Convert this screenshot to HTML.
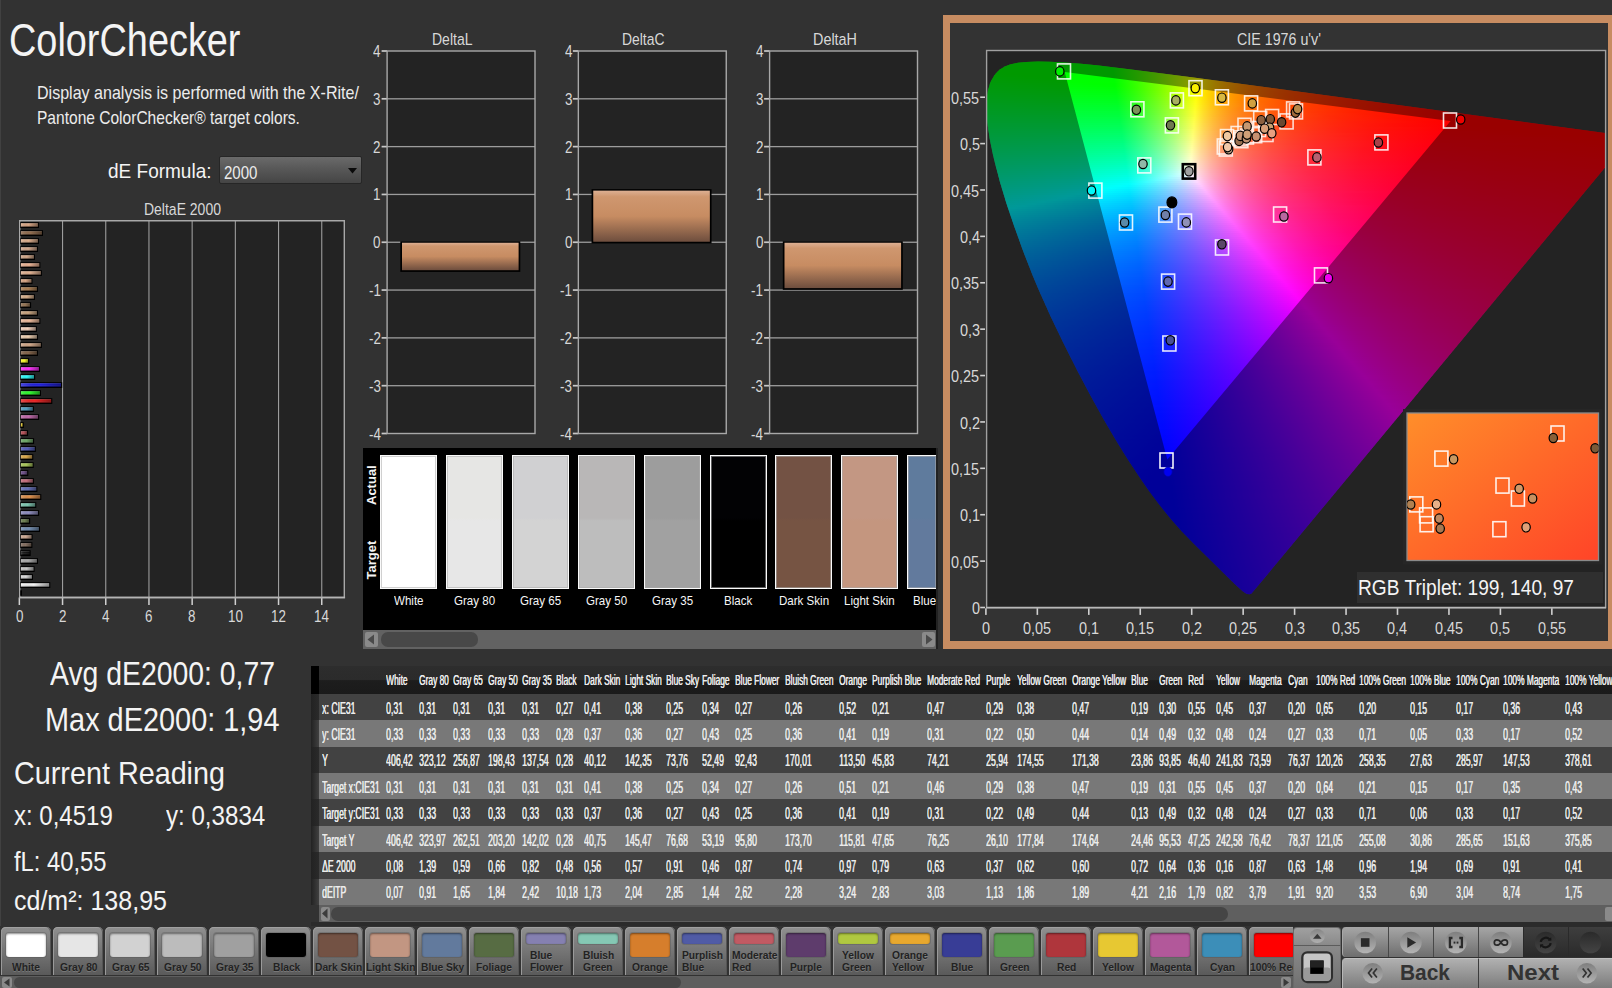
<!DOCTYPE html>
<html lang="en"><head><meta charset="utf-8"><title>ColorChecker</title><style>
html,body{margin:0;padding:0;background:#323232}
body{width:1612px;height:988px;position:relative;overflow:hidden;font-family:"Liberation Sans",sans-serif;color:#ececec}
.a{position:absolute;box-sizing:border-box}
.t{position:absolute;white-space:nowrap;transform-origin:0 0;line-height:1;display:block}
svg{position:absolute;overflow:visible}
.cie{position:absolute;overflow:hidden;background:#232323}
.cf{position:absolute;left:0;width:100%}
.cf i{display:block;height:2px}
.ov{left:0;top:0}
.tb{overflow:hidden}.c{text-shadow:.55px 0 0 currentColor}.tab{top:1.3px;width:50px;height:48px;border-radius:5px 5px 0 0;background:linear-gradient(#909090,#5a5a5a);box-shadow:inset 1px 0 0 #9a9a9a,inset -1px 0 0 #555,inset 0 1px 0 #a0a0a0}.chip{left:5px;top:5.5px;width:40px;border-radius:3px;box-shadow:inset 0 1px 2px rgba(0,0,0,.45),0 0 0 1px rgba(80,80,80,.35)}.tl{text-shadow:0 1px 0 rgba(255,255,255,.18)}</style></head><body>
<div class="a" style="left:0.00px;top:0.00px;width:1.00px;height:988.00px;background:#414141;"></div>
<span class="t" style="left:9.00px;top:18.00px;font-size:45.80px;transform:scaleX(0.8268);color:#f4f4f4;">ColorChecker</span>
<span class="t" style="left:37.00px;top:84.00px;font-size:18.60px;transform:scaleX(0.8629);">Display analysis is performed with the X-Rite/</span>
<span class="t" style="left:37.00px;top:109.00px;font-size:18.60px;transform:scaleX(0.8361);">Pantone ColorChecker® target colors.</span>
<span class="t" style="left:107.50px;top:160.00px;font-size:21.00px;transform:scaleX(0.9049);color:#f4f4f4;">dE Formula:</span>
<div class="a" style="left:218.50px;top:155.50px;width:143.80px;height:28.50px;background:linear-gradient(#6a6a6a,#585858 45%,#454545);border:1px solid #262626;border-radius:2px"></div>
<span class="t" style="left:224.00px;top:164.00px;font-size:18.10px;transform:scaleX(0.8320);">2000</span>
<svg style="left:348px;top:168px" width="10" height="6"><path d="M0 0H9L4.5 5.5Z" fill="#0a0a0a"/></svg>
<span class="t" style="left:144.00px;top:201.00px;font-size:17.20px;transform:scaleX(0.8134);color:#d8d8d8;">DeltaE 2000</span>
<div class="a" style="left:19.50px;top:220.50px;width:325.10px;height:377.00px;background:#232323;"></div>
<span class="t" style="left:15.57px;top:608.00px;font-size:17.40px;transform:scaleX(0.7700);color:#d8d8d8;">0</span>
<span class="t" style="left:58.77px;top:608.00px;font-size:17.40px;transform:scaleX(0.7700);color:#d8d8d8;">2</span>
<span class="t" style="left:101.97px;top:608.00px;font-size:17.40px;transform:scaleX(0.7700);color:#d8d8d8;">4</span>
<span class="t" style="left:145.17px;top:608.00px;font-size:17.40px;transform:scaleX(0.7700);color:#d8d8d8;">6</span>
<span class="t" style="left:188.37px;top:608.00px;font-size:17.40px;transform:scaleX(0.7700);color:#d8d8d8;">8</span>
<span class="t" style="left:227.85px;top:608.00px;font-size:17.40px;transform:scaleX(0.7700);color:#d8d8d8;">10</span>
<span class="t" style="left:271.05px;top:608.00px;font-size:17.40px;transform:scaleX(0.7700);color:#d8d8d8;">12</span>
<span class="t" style="left:314.25px;top:608.00px;font-size:17.40px;transform:scaleX(0.7700);color:#d8d8d8;">14</span>
<svg style="left:0;top:0" width="400" height="640"><defs><linearGradient id="bg" x1="0" y1="0" x2="0" y2="1"><stop offset="0" stop-color="#fff" stop-opacity=".28"/><stop offset=".45" stop-color="#fff" stop-opacity="0"/><stop offset="1" stop-color="#000" stop-opacity=".45"/></linearGradient><linearGradient id="bh" x1="0" y1="0" x2="1" y2="0"><stop offset="0" stop-color="#fff" stop-opacity=".18"/><stop offset=".45" stop-color="#000" stop-opacity="0"/><stop offset="1" stop-color="#000" stop-opacity=".42"/></linearGradient></defs><rect x="18.6" y="597.5" width="1.5" height="7.5" fill="#d0d0d0"/><rect x="62.0" y="220.5" width="1.1" height="377.0" fill="#9c9c9c"/><rect x="61.8" y="597.5" width="1.5" height="7.5" fill="#d0d0d0"/><rect x="105.2" y="220.5" width="1.1" height="377.0" fill="#9c9c9c"/><rect x="105.0" y="597.5" width="1.5" height="7.5" fill="#d0d0d0"/><rect x="148.4" y="220.5" width="1.1" height="377.0" fill="#9c9c9c"/><rect x="148.2" y="597.5" width="1.5" height="7.5" fill="#d0d0d0"/><rect x="191.6" y="220.5" width="1.1" height="377.0" fill="#9c9c9c"/><rect x="191.4" y="597.5" width="1.5" height="7.5" fill="#d0d0d0"/><rect x="234.8" y="220.5" width="1.1" height="377.0" fill="#9c9c9c"/><rect x="234.6" y="597.5" width="1.5" height="7.5" fill="#d0d0d0"/><rect x="278.0" y="220.5" width="1.1" height="377.0" fill="#9c9c9c"/><rect x="277.8" y="597.5" width="1.5" height="7.5" fill="#d0d0d0"/><rect x="321.2" y="220.5" width="1.1" height="377.0" fill="#9c9c9c"/><rect x="321.0" y="597.5" width="1.5" height="7.5" fill="#d0d0d0"/><path d="M19.7 597.5V220.8H344.3V597.5Z" fill="none" stroke="#a8a8a8" stroke-width="1.4"/><rect x="19.0" y="596.7" width="326.1" height="1.6" fill="#b4b4b4"/><rect x="20.3" y="222.2" width="18.7" height="5.800" fill="#000"/><rect x="20.9" y="223.2" width="16.9" height="3.5" fill="#d9a27e"/><rect x="20.9" y="223.2" width="16.9" height="3.5" fill="url(#bg)"/><rect x="20.9" y="223.2" width="16.9" height="3.5" fill="url(#bh)"/><rect x="20.3" y="230.2" width="22.7" height="5.800" fill="#000"/><rect x="20.9" y="231.2" width="20.9" height="3.5" fill="#8c6444"/><rect x="20.9" y="231.2" width="20.9" height="3.5" fill="url(#bg)"/><rect x="20.9" y="231.2" width="20.9" height="3.5" fill="url(#bh)"/><rect x="20.3" y="238.2" width="18.7" height="5.800" fill="#000"/><rect x="20.9" y="239.2" width="16.9" height="3.5" fill="#dcaa86"/><rect x="20.9" y="239.2" width="16.9" height="3.5" fill="url(#bg)"/><rect x="20.9" y="239.2" width="16.9" height="3.5" fill="url(#bh)"/><rect x="20.3" y="246.2" width="17.7" height="5.800" fill="#000"/><rect x="20.9" y="247.2" width="15.9" height="3.5" fill="#d2a486"/><rect x="20.9" y="247.2" width="15.9" height="3.5" fill="url(#bg)"/><rect x="20.9" y="247.2" width="15.9" height="3.5" fill="url(#bh)"/><rect x="20.3" y="254.2" width="14.7" height="5.800" fill="#000"/><rect x="20.9" y="255.2" width="12.9" height="3.5" fill="#d3a583"/><rect x="20.9" y="255.2" width="12.9" height="3.5" fill="url(#bg)"/><rect x="20.9" y="255.2" width="12.9" height="3.5" fill="url(#bh)"/><rect x="20.3" y="262.2" width="20.1" height="5.800" fill="#000"/><rect x="20.9" y="263.2" width="18.3" height="3.5" fill="#eeb08e"/><rect x="20.9" y="263.2" width="18.3" height="3.5" fill="url(#bg)"/><rect x="20.9" y="263.2" width="18.3" height="3.5" fill="url(#bh)"/><rect x="20.3" y="270.2" width="21.6" height="5.800" fill="#000"/><rect x="20.9" y="271.2" width="19.8" height="3.5" fill="#e2ae8c"/><rect x="20.9" y="271.2" width="19.8" height="3.5" fill="url(#bg)"/><rect x="20.9" y="271.2" width="19.8" height="3.5" fill="url(#bh)"/><rect x="20.3" y="278.2" width="12.2" height="5.800" fill="#000"/><rect x="20.9" y="279.2" width="10.4" height="3.5" fill="#d9a27e"/><rect x="20.9" y="279.2" width="10.4" height="3.5" fill="url(#bg)"/><rect x="20.9" y="279.2" width="10.4" height="3.5" fill="url(#bh)"/><rect x="20.3" y="286.2" width="17.7" height="5.800" fill="#000"/><rect x="20.9" y="287.2" width="15.9" height="3.5" fill="#a87848"/><rect x="20.9" y="287.2" width="15.9" height="3.5" fill="url(#bg)"/><rect x="20.9" y="287.2" width="15.9" height="3.5" fill="url(#bh)"/><rect x="20.3" y="294.2" width="14.7" height="5.800" fill="#000"/><rect x="20.9" y="295.2" width="12.9" height="3.5" fill="#d8ac84"/><rect x="20.9" y="295.2" width="12.9" height="3.5" fill="url(#bg)"/><rect x="20.9" y="295.2" width="12.9" height="3.5" fill="url(#bh)"/><rect x="20.3" y="302.2" width="10.8" height="5.800" fill="#000"/><rect x="20.9" y="303.2" width="9.0" height="3.5" fill="#94704c"/><rect x="20.9" y="303.2" width="9.0" height="3.5" fill="url(#bg)"/><rect x="20.9" y="303.2" width="9.0" height="3.5" fill="url(#bh)"/><rect x="20.3" y="310.2" width="17.7" height="5.800" fill="#000"/><rect x="20.9" y="311.2" width="15.9" height="3.5" fill="#caa27a"/><rect x="20.9" y="311.2" width="15.9" height="3.5" fill="url(#bg)"/><rect x="20.9" y="311.2" width="15.9" height="3.5" fill="url(#bh)"/><rect x="20.3" y="318.2" width="20.1" height="5.800" fill="#000"/><rect x="20.9" y="319.2" width="18.3" height="3.5" fill="#efb896"/><rect x="20.9" y="319.2" width="18.3" height="3.5" fill="url(#bg)"/><rect x="20.9" y="319.2" width="18.3" height="3.5" fill="url(#bh)"/><rect x="20.3" y="326.2" width="16.6" height="5.800" fill="#000"/><rect x="20.9" y="327.2" width="14.8" height="3.5" fill="#f6d0b8"/><rect x="20.9" y="327.2" width="14.8" height="3.5" fill="url(#bg)"/><rect x="20.9" y="327.2" width="14.8" height="3.5" fill="url(#bh)"/><rect x="20.3" y="334.2" width="17.7" height="5.800" fill="#000"/><rect x="20.9" y="335.2" width="15.9" height="3.5" fill="#f0ceac"/><rect x="20.9" y="335.2" width="15.9" height="3.5" fill="url(#bg)"/><rect x="20.9" y="335.2" width="15.9" height="3.5" fill="url(#bh)"/><rect x="20.3" y="342.2" width="21.6" height="5.800" fill="#000"/><rect x="20.9" y="343.2" width="19.8" height="3.5" fill="#d2a482"/><rect x="20.9" y="343.2" width="19.8" height="3.5" fill="url(#bg)"/><rect x="20.9" y="343.2" width="19.8" height="3.5" fill="url(#bh)"/><rect x="20.3" y="350.2" width="17.7" height="5.800" fill="#000"/><rect x="20.9" y="351.2" width="15.9" height="3.5" fill="#7e5c40"/><rect x="20.9" y="351.2" width="15.9" height="3.5" fill="url(#bg)"/><rect x="20.9" y="351.2" width="15.9" height="3.5" fill="url(#bh)"/><rect x="20.3" y="358.2" width="8.9" height="5.800" fill="#000"/><rect x="20.9" y="359.2" width="7.1" height="3.5" fill="#ffff20"/><rect x="20.9" y="359.2" width="7.1" height="3.5" fill="url(#bg)"/><rect x="20.9" y="359.2" width="7.1" height="3.5" fill="url(#bh)"/><rect x="20.3" y="366.2" width="19.7" height="5.800" fill="#000"/><rect x="20.9" y="367.2" width="17.9" height="3.5" fill="#ff20ff"/><rect x="20.9" y="367.2" width="17.9" height="3.5" fill="url(#bg)"/><rect x="20.9" y="367.2" width="17.9" height="3.5" fill="url(#bh)"/><rect x="20.3" y="374.2" width="14.9" height="5.800" fill="#000"/><rect x="20.9" y="375.2" width="13.1" height="3.5" fill="#20ffff"/><rect x="20.9" y="375.2" width="13.1" height="3.5" fill="url(#bg)"/><rect x="20.9" y="375.2" width="13.1" height="3.5" fill="url(#bh)"/><rect x="20.3" y="382.2" width="41.9" height="5.800" fill="#000"/><rect x="20.9" y="383.2" width="40.1" height="3.5" fill="#1414e0"/><rect x="20.9" y="383.2" width="40.1" height="3.5" fill="url(#bg)"/><rect x="20.9" y="383.2" width="40.1" height="3.5" fill="url(#bh)"/><rect x="20.3" y="390.2" width="20.7" height="5.800" fill="#000"/><rect x="20.9" y="391.2" width="18.9" height="3.5" fill="#20ff20"/><rect x="20.9" y="391.2" width="18.9" height="3.5" fill="url(#bg)"/><rect x="20.9" y="391.2" width="18.9" height="3.5" fill="url(#bh)"/><rect x="20.3" y="398.2" width="32.0" height="5.800" fill="#000"/><rect x="20.9" y="399.2" width="30.2" height="3.5" fill="#f01818"/><rect x="20.9" y="399.2" width="30.2" height="3.5" fill="url(#bg)"/><rect x="20.9" y="399.2" width="30.2" height="3.5" fill="url(#bh)"/><rect x="20.3" y="406.2" width="13.6" height="5.800" fill="#000"/><rect x="20.9" y="407.2" width="11.8" height="3.5" fill="#4a9ac0"/><rect x="20.9" y="407.2" width="11.8" height="3.5" fill="url(#bg)"/><rect x="20.9" y="407.2" width="11.8" height="3.5" fill="url(#bh)"/><rect x="20.3" y="414.2" width="18.8" height="5.800" fill="#000"/><rect x="20.9" y="415.2" width="17.0" height="3.5" fill="#c060a8"/><rect x="20.9" y="415.2" width="17.0" height="3.5" fill="url(#bg)"/><rect x="20.9" y="415.2" width="17.0" height="3.5" fill="url(#bh)"/><rect x="20.3" y="422.2" width="3.5" height="5.800" fill="#000"/><rect x="20.9" y="423.2" width="1.7" height="3.5" fill="#e8cc30"/><rect x="20.9" y="423.2" width="1.7" height="3.5" fill="url(#bg)"/><rect x="20.9" y="423.2" width="1.7" height="3.5" fill="url(#bh)"/><rect x="20.3" y="430.2" width="7.8" height="5.800" fill="#000"/><rect x="20.9" y="431.2" width="6.0" height="3.5" fill="#b84850"/><rect x="20.9" y="431.2" width="6.0" height="3.5" fill="url(#bg)"/><rect x="20.9" y="431.2" width="6.0" height="3.5" fill="url(#bh)"/><rect x="20.3" y="438.2" width="13.8" height="5.800" fill="#000"/><rect x="20.9" y="439.2" width="12.0" height="3.5" fill="#68a860"/><rect x="20.9" y="439.2" width="12.0" height="3.5" fill="url(#bg)"/><rect x="20.9" y="439.2" width="12.0" height="3.5" fill="url(#bh)"/><rect x="20.3" y="446.2" width="15.6" height="5.800" fill="#000"/><rect x="20.9" y="447.2" width="13.8" height="3.5" fill="#4a54b8"/><rect x="20.9" y="447.2" width="13.8" height="3.5" fill="url(#bg)"/><rect x="20.9" y="447.2" width="13.8" height="3.5" fill="url(#bh)"/><rect x="20.3" y="454.2" width="13.0" height="5.800" fill="#000"/><rect x="20.9" y="455.2" width="11.2" height="3.5" fill="#e0a840"/><rect x="20.9" y="455.2" width="11.2" height="3.5" fill="url(#bg)"/><rect x="20.9" y="455.2" width="11.2" height="3.5" fill="url(#bh)"/><rect x="20.3" y="462.2" width="13.4" height="5.800" fill="#000"/><rect x="20.9" y="463.2" width="11.6" height="3.5" fill="#a8c850"/><rect x="20.9" y="463.2" width="11.6" height="3.5" fill="url(#bg)"/><rect x="20.9" y="463.2" width="11.6" height="3.5" fill="url(#bh)"/><rect x="20.3" y="470.2" width="8.0" height="5.800" fill="#000"/><rect x="20.9" y="471.2" width="6.2" height="3.5" fill="#6a4888"/><rect x="20.9" y="471.2" width="6.2" height="3.5" fill="url(#bg)"/><rect x="20.9" y="471.2" width="6.2" height="3.5" fill="url(#bh)"/><rect x="20.3" y="478.2" width="13.6" height="5.800" fill="#000"/><rect x="20.9" y="479.2" width="11.8" height="3.5" fill="#c86878"/><rect x="20.9" y="479.2" width="11.8" height="3.5" fill="url(#bg)"/><rect x="20.9" y="479.2" width="11.8" height="3.5" fill="url(#bh)"/><rect x="20.3" y="486.2" width="17.1" height="5.800" fill="#000"/><rect x="20.9" y="487.2" width="15.3" height="3.5" fill="#5a68b8"/><rect x="20.9" y="487.2" width="15.3" height="3.5" fill="url(#bg)"/><rect x="20.9" y="487.2" width="15.3" height="3.5" fill="url(#bh)"/><rect x="20.3" y="494.2" width="21.0" height="5.800" fill="#000"/><rect x="20.9" y="495.2" width="19.2" height="3.5" fill="#e08a40"/><rect x="20.9" y="495.2" width="19.2" height="3.5" fill="url(#bg)"/><rect x="20.9" y="495.2" width="19.2" height="3.5" fill="url(#bh)"/><rect x="20.3" y="502.2" width="16.0" height="5.800" fill="#000"/><rect x="20.9" y="503.2" width="14.2" height="3.5" fill="#78c8b0"/><rect x="20.9" y="503.2" width="14.2" height="3.5" fill="url(#bg)"/><rect x="20.9" y="503.2" width="14.2" height="3.5" fill="url(#bh)"/><rect x="20.3" y="510.2" width="18.8" height="5.800" fill="#000"/><rect x="20.9" y="511.2" width="17.0" height="3.5" fill="#8a88c0"/><rect x="20.9" y="511.2" width="17.0" height="3.5" fill="url(#bg)"/><rect x="20.9" y="511.2" width="17.0" height="3.5" fill="url(#bh)"/><rect x="20.3" y="518.2" width="9.9" height="5.800" fill="#000"/><rect x="20.9" y="519.2" width="8.1" height="3.5" fill="#687c48"/><rect x="20.9" y="519.2" width="8.1" height="3.5" fill="url(#bg)"/><rect x="20.9" y="519.2" width="8.1" height="3.5" fill="url(#bh)"/><rect x="20.3" y="526.2" width="19.7" height="5.800" fill="#000"/><rect x="20.9" y="527.2" width="17.9" height="3.5" fill="#6a88b0"/><rect x="20.9" y="527.2" width="17.9" height="3.5" fill="url(#bg)"/><rect x="20.9" y="527.2" width="17.9" height="3.5" fill="url(#bh)"/><rect x="20.3" y="534.2" width="12.3" height="5.800" fill="#000"/><rect x="20.9" y="535.2" width="10.5" height="3.5" fill="#d0a890"/><rect x="20.9" y="535.2" width="10.5" height="3.5" fill="url(#bg)"/><rect x="20.9" y="535.2" width="10.5" height="3.5" fill="url(#bh)"/><rect x="20.3" y="542.2" width="12.1" height="5.800" fill="#000"/><rect x="20.9" y="543.2" width="10.3" height="3.5" fill="#806858"/><rect x="20.9" y="543.2" width="10.3" height="3.5" fill="url(#bg)"/><rect x="20.9" y="543.2" width="10.3" height="3.5" fill="url(#bh)"/><rect x="20.3" y="550.2" width="10.4" height="5.800" fill="#000"/><rect x="20.9" y="551.2" width="8.6" height="3.5" fill="#0c0c0c"/><rect x="20.9" y="551.2" width="8.6" height="3.5" fill="url(#bg)"/><rect x="20.9" y="551.2" width="8.6" height="3.5" fill="url(#bh)"/><rect x="20.3" y="558.2" width="17.7" height="5.800" fill="#000"/><rect x="20.9" y="559.2" width="15.9" height="3.5" fill="#a8a8a8"/><rect x="20.9" y="559.2" width="15.9" height="3.5" fill="url(#bg)"/><rect x="20.9" y="559.2" width="15.9" height="3.5" fill="url(#bh)"/><rect x="20.3" y="566.2" width="14.3" height="5.800" fill="#000"/><rect x="20.9" y="567.2" width="12.5" height="3.5" fill="#c4c4c4"/><rect x="20.9" y="567.2" width="12.5" height="3.5" fill="url(#bg)"/><rect x="20.9" y="567.2" width="12.5" height="3.5" fill="url(#bh)"/><rect x="20.3" y="574.2" width="12.7" height="5.800" fill="#000"/><rect x="20.9" y="575.2" width="10.9" height="3.5" fill="#dadada"/><rect x="20.9" y="575.2" width="10.9" height="3.5" fill="url(#bg)"/><rect x="20.9" y="575.2" width="10.9" height="3.5" fill="url(#bh)"/><rect x="20.3" y="582.2" width="30.0" height="5.800" fill="#000"/><rect x="20.9" y="583.2" width="28.2" height="3.5" fill="#f4f4f4"/><rect x="20.9" y="583.2" width="28.2" height="3.5" fill="url(#bg)"/><rect x="20.9" y="583.2" width="28.2" height="3.5" fill="url(#bh)"/><rect x="20.3" y="590.3" width="1.7" height="5.4" fill="#000"/></svg>
<span class="t" style="left:49.50px;top:658.00px;font-size:32.50px;transform:scaleX(0.8727);color:#f4f4f4;">Avg dE2000: 0,77</span>
<span class="t" style="left:44.50px;top:704.00px;font-size:32.50px;transform:scaleX(0.8890);color:#f4f4f4;">Max dE2000: 1,94</span>
<span class="t" style="left:14.20px;top:758.00px;font-size:31.50px;transform:scaleX(0.9129);color:#f4f4f4;">Current Reading</span>
<span class="t" style="left:14.20px;top:802.00px;font-size:27.60px;transform:scaleX(0.8696);color:#f4f4f4;">x: 0,4519</span>
<span class="t" style="left:166.25px;top:802.00px;font-size:27.60px;transform:scaleX(0.8740);color:#f4f4f4;">y: 0,3834</span>
<span class="t" style="left:14.20px;top:848.00px;font-size:27.60px;transform:scaleX(0.8611);color:#f4f4f4;">fL: 40,55</span>
<span class="t" style="left:14.20px;top:887.00px;font-size:27.60px;transform:scaleX(0.9066);color:#f4f4f4;">cd/m²: 138,95</span>
<span class="t" style="left:432.10px;top:31.00px;font-size:17.20px;transform:scaleX(0.8146);color:#d8d8d8;">DeltaL</span>
<span class="t" style="left:373.34px;top:43.00px;font-size:17.20px;transform:scaleX(0.7800);color:#d8d8d8;">4</span>
<span class="t" style="left:373.34px;top:91.00px;font-size:17.20px;transform:scaleX(0.7800);color:#d8d8d8;">3</span>
<span class="t" style="left:373.34px;top:139.00px;font-size:17.20px;transform:scaleX(0.7800);color:#d8d8d8;">2</span>
<span class="t" style="left:373.34px;top:186.00px;font-size:17.20px;transform:scaleX(0.7800);color:#d8d8d8;">1</span>
<span class="t" style="left:373.34px;top:234.00px;font-size:17.20px;transform:scaleX(0.7800);color:#d8d8d8;">0</span>
<span class="t" style="left:368.87px;top:282.00px;font-size:17.20px;transform:scaleX(0.7800);color:#d8d8d8;">-1</span>
<span class="t" style="left:368.87px;top:330.00px;font-size:17.20px;transform:scaleX(0.7800);color:#d8d8d8;">-2</span>
<span class="t" style="left:368.87px;top:378.00px;font-size:17.20px;transform:scaleX(0.7800);color:#d8d8d8;">-3</span>
<span class="t" style="left:368.87px;top:426.00px;font-size:17.20px;transform:scaleX(0.7800);color:#d8d8d8;">-4</span>
<span class="t" style="left:622.35px;top:31.00px;font-size:17.20px;transform:scaleX(0.8084);color:#d8d8d8;">DeltaC</span>
<span class="t" style="left:564.59px;top:43.00px;font-size:17.20px;transform:scaleX(0.7800);color:#d8d8d8;">4</span>
<span class="t" style="left:564.59px;top:91.00px;font-size:17.20px;transform:scaleX(0.7800);color:#d8d8d8;">3</span>
<span class="t" style="left:564.59px;top:139.00px;font-size:17.20px;transform:scaleX(0.7800);color:#d8d8d8;">2</span>
<span class="t" style="left:564.59px;top:186.00px;font-size:17.20px;transform:scaleX(0.7800);color:#d8d8d8;">1</span>
<span class="t" style="left:564.59px;top:234.00px;font-size:17.20px;transform:scaleX(0.7800);color:#d8d8d8;">0</span>
<span class="t" style="left:560.12px;top:282.00px;font-size:17.20px;transform:scaleX(0.7800);color:#d8d8d8;">-1</span>
<span class="t" style="left:560.12px;top:330.00px;font-size:17.20px;transform:scaleX(0.7800);color:#d8d8d8;">-2</span>
<span class="t" style="left:560.12px;top:378.00px;font-size:17.20px;transform:scaleX(0.7800);color:#d8d8d8;">-3</span>
<span class="t" style="left:560.12px;top:426.00px;font-size:17.20px;transform:scaleX(0.7800);color:#d8d8d8;">-4</span>
<span class="t" style="left:812.85px;top:31.00px;font-size:17.20px;transform:scaleX(0.8369);color:#d8d8d8;">DeltaH</span>
<span class="t" style="left:755.84px;top:43.00px;font-size:17.20px;transform:scaleX(0.7800);color:#d8d8d8;">4</span>
<span class="t" style="left:755.84px;top:91.00px;font-size:17.20px;transform:scaleX(0.7800);color:#d8d8d8;">3</span>
<span class="t" style="left:755.84px;top:139.00px;font-size:17.20px;transform:scaleX(0.7800);color:#d8d8d8;">2</span>
<span class="t" style="left:755.84px;top:186.00px;font-size:17.20px;transform:scaleX(0.7800);color:#d8d8d8;">1</span>
<span class="t" style="left:755.84px;top:234.00px;font-size:17.20px;transform:scaleX(0.7800);color:#d8d8d8;">0</span>
<span class="t" style="left:751.37px;top:282.00px;font-size:17.20px;transform:scaleX(0.7800);color:#d8d8d8;">-1</span>
<span class="t" style="left:751.37px;top:330.00px;font-size:17.20px;transform:scaleX(0.7800);color:#d8d8d8;">-2</span>
<span class="t" style="left:751.37px;top:378.00px;font-size:17.20px;transform:scaleX(0.7800);color:#d8d8d8;">-3</span>
<span class="t" style="left:751.37px;top:426.00px;font-size:17.20px;transform:scaleX(0.7800);color:#d8d8d8;">-4</span>
<svg style="left:0;top:0" width="940" height="440"><defs><linearGradient id="sk" x1="0" y1="0" x2="0" y2="1"><stop offset="0" stop-color="#ddb093"/><stop offset=".12" stop-color="#cf976f"/><stop offset=".5" stop-color="#c78c62"/><stop offset="1" stop-color="#6e4e3e"/></linearGradient></defs><rect x="387.10" y="51.00" width="147.90" height="382.50" fill="#232323"/><rect x="381.60" y="50.15" width="5.5" height="1.7" fill="#c8c8c8"/><rect x="387.10" y="98.16" width="147.90" height="1.3" fill="#9c9c9c"/><rect x="381.60" y="97.96" width="5.5" height="1.7" fill="#c8c8c8"/><rect x="387.10" y="145.97" width="147.90" height="1.3" fill="#9c9c9c"/><rect x="381.60" y="145.78" width="5.5" height="1.7" fill="#c8c8c8"/><rect x="387.10" y="193.79" width="147.90" height="1.3" fill="#9c9c9c"/><rect x="381.60" y="193.59" width="5.5" height="1.7" fill="#c8c8c8"/><rect x="387.10" y="241.60" width="147.90" height="1.3" fill="#9c9c9c"/><rect x="381.60" y="241.40" width="5.5" height="1.7" fill="#c8c8c8"/><rect x="387.10" y="289.41" width="147.90" height="1.3" fill="#9c9c9c"/><rect x="381.60" y="289.21" width="5.5" height="1.7" fill="#c8c8c8"/><rect x="387.10" y="337.23" width="147.90" height="1.3" fill="#9c9c9c"/><rect x="381.60" y="337.02" width="5.5" height="1.7" fill="#c8c8c8"/><rect x="387.10" y="385.04" width="147.90" height="1.3" fill="#9c9c9c"/><rect x="381.60" y="384.84" width="5.5" height="1.7" fill="#c8c8c8"/><rect x="381.60" y="432.65" width="5.5" height="1.7" fill="#c8c8c8"/><rect x="387.10" y="51.00" width="147.90" height="382.50" fill="none" stroke="#a8a8a8" stroke-width="1.4"/><rect x="400.30" y="241.25" width="120.00" height="30.65" fill="#000"/><rect x="402.00" y="242.75" width="116.60" height="27.45" fill="url(#sk)"/><rect x="578.35" y="51.00" width="147.90" height="382.50" fill="#232323"/><rect x="572.85" y="50.15" width="5.5" height="1.7" fill="#c8c8c8"/><rect x="578.35" y="98.16" width="147.90" height="1.3" fill="#9c9c9c"/><rect x="572.85" y="97.96" width="5.5" height="1.7" fill="#c8c8c8"/><rect x="578.35" y="145.97" width="147.90" height="1.3" fill="#9c9c9c"/><rect x="572.85" y="145.78" width="5.5" height="1.7" fill="#c8c8c8"/><rect x="578.35" y="193.79" width="147.90" height="1.3" fill="#9c9c9c"/><rect x="572.85" y="193.59" width="5.5" height="1.7" fill="#c8c8c8"/><rect x="578.35" y="241.60" width="147.90" height="1.3" fill="#9c9c9c"/><rect x="572.85" y="241.40" width="5.5" height="1.7" fill="#c8c8c8"/><rect x="578.35" y="289.41" width="147.90" height="1.3" fill="#9c9c9c"/><rect x="572.85" y="289.21" width="5.5" height="1.7" fill="#c8c8c8"/><rect x="578.35" y="337.23" width="147.90" height="1.3" fill="#9c9c9c"/><rect x="572.85" y="337.02" width="5.5" height="1.7" fill="#c8c8c8"/><rect x="578.35" y="385.04" width="147.90" height="1.3" fill="#9c9c9c"/><rect x="572.85" y="384.84" width="5.5" height="1.7" fill="#c8c8c8"/><rect x="572.85" y="432.65" width="5.5" height="1.7" fill="#c8c8c8"/><rect x="578.35" y="51.00" width="147.90" height="382.50" fill="none" stroke="#a8a8a8" stroke-width="1.4"/><rect x="591.55" y="189.13" width="120.00" height="54.32" fill="#000"/><rect x="593.25" y="190.63" width="116.60" height="51.12" fill="url(#sk)"/><rect x="769.60" y="51.00" width="147.90" height="382.50" fill="#232323"/><rect x="764.10" y="50.15" width="5.5" height="1.7" fill="#c8c8c8"/><rect x="769.60" y="98.16" width="147.90" height="1.3" fill="#9c9c9c"/><rect x="764.10" y="97.96" width="5.5" height="1.7" fill="#c8c8c8"/><rect x="769.60" y="145.97" width="147.90" height="1.3" fill="#9c9c9c"/><rect x="764.10" y="145.78" width="5.5" height="1.7" fill="#c8c8c8"/><rect x="769.60" y="193.79" width="147.90" height="1.3" fill="#9c9c9c"/><rect x="764.10" y="193.59" width="5.5" height="1.7" fill="#c8c8c8"/><rect x="769.60" y="241.60" width="147.90" height="1.3" fill="#9c9c9c"/><rect x="764.10" y="241.40" width="5.5" height="1.7" fill="#c8c8c8"/><rect x="769.60" y="289.41" width="147.90" height="1.3" fill="#9c9c9c"/><rect x="764.10" y="289.21" width="5.5" height="1.7" fill="#c8c8c8"/><rect x="769.60" y="337.23" width="147.90" height="1.3" fill="#9c9c9c"/><rect x="764.10" y="337.02" width="5.5" height="1.7" fill="#c8c8c8"/><rect x="769.60" y="385.04" width="147.90" height="1.3" fill="#9c9c9c"/><rect x="764.10" y="384.84" width="5.5" height="1.7" fill="#c8c8c8"/><rect x="764.10" y="432.65" width="5.5" height="1.7" fill="#c8c8c8"/><rect x="769.60" y="51.00" width="147.90" height="382.50" fill="none" stroke="#a8a8a8" stroke-width="1.4"/><rect x="782.80" y="241.25" width="120.00" height="48.58" fill="#000"/><rect x="784.50" y="242.75" width="116.60" height="45.38" fill="url(#sk)"/></svg>
<div class="a" style="left:363.00px;top:448.00px;width:574.50px;height:201.00px;background:#222;"></div>
<div class="a" style="left:363.00px;top:448.00px;width:573.00px;height:182.00px;background:#000;"></div>
<div class="a" style="left:380.00px;top:455.00px;width:57.00px;height:134.00px;background:linear-gradient(#ffffff 0,#ffffff 47%,#ffffff 49%,#ffffff 100%);border:1px solid #fafafa;box-shadow:inset 0 0 0 1px rgba(170,170,170,.55);"></div>
<span class="t" style="left:393.73px;top:594.00px;font-size:13.60px;transform:scaleX(0.8500);color:#f6f6f6;">White</span>
<div class="a" style="left:445.90px;top:455.00px;width:57.00px;height:134.00px;background:linear-gradient(#e6e6e4 0,#e6e6e4 47%,#e7e7e7 49%,#e7e7e7 100%);border:1px solid #fafafa;box-shadow:inset 0 0 0 1px rgba(170,170,170,.55);"></div>
<span class="t" style="left:453.84px;top:594.00px;font-size:13.60px;transform:scaleX(0.8500);color:#f6f6f6;">Gray 80</span>
<div class="a" style="left:511.80px;top:455.00px;width:57.00px;height:134.00px;background:linear-gradient(#d0d0d2 0,#d0d0d2 47%,#d3d3d3 49%,#d3d3d3 100%);border:1px solid #fafafa;box-shadow:inset 0 0 0 1px rgba(170,170,170,.55);"></div>
<span class="t" style="left:519.74px;top:594.00px;font-size:13.60px;transform:scaleX(0.8500);color:#f6f6f6;">Gray 65</span>
<div class="a" style="left:577.70px;top:455.00px;width:57.00px;height:134.00px;background:linear-gradient(#b9b7b7 0,#b9b7b7 47%,#bdbdbd 49%,#bdbdbd 100%);border:1px solid #fafafa;box-shadow:inset 0 0 0 1px rgba(170,170,170,.55);"></div>
<span class="t" style="left:585.64px;top:594.00px;font-size:13.60px;transform:scaleX(0.8500);color:#f6f6f6;">Gray 50</span>
<div class="a" style="left:643.60px;top:455.00px;width:57.00px;height:134.00px;background:linear-gradient(#9d9d9d 0,#9d9d9d 47%,#a1a1a1 49%,#a1a1a1 100%);border:1px solid #fafafa;box-shadow:inset 0 0 0 1px rgba(170,170,170,.55);"></div>
<span class="t" style="left:651.54px;top:594.00px;font-size:13.60px;transform:scaleX(0.8500);color:#f6f6f6;">Gray 35</span>
<div class="a" style="left:709.50px;top:455.00px;width:57.00px;height:134.00px;background:linear-gradient(#020204 0,#020204 47%,#000000 49%,#000000 100%);border:1px solid #fafafa;box-shadow:inset 0 0 0 1px rgba(170,170,170,.55);"></div>
<span class="t" style="left:723.87px;top:594.00px;font-size:13.60px;transform:scaleX(0.8500);color:#f6f6f6;">Black</span>
<div class="a" style="left:775.40px;top:455.00px;width:57.00px;height:134.00px;background:linear-gradient(#735244 0,#735244 47%,#765443 49%,#765443 100%);border:1px solid #fafafa;box-shadow:inset 0 0 0 1px rgba(170,170,170,.55);"></div>
<span class="t" style="left:778.85px;top:594.00px;font-size:13.60px;transform:scaleX(0.8500);color:#f6f6f6;">Dark Skin</span>
<div class="a" style="left:841.30px;top:455.00px;width:57.00px;height:134.00px;background:linear-gradient(#c39783 0,#c39783 47%,#c4967f 49%,#c4967f 100%);border:1px solid #fafafa;box-shadow:inset 0 0 0 1px rgba(170,170,170,.55);"></div>
<span class="t" style="left:844.42px;top:594.00px;font-size:13.60px;transform:scaleX(0.8500);color:#f6f6f6;">Light Skin</span>
<div class="a" style="left:907.20px;top:455.00px;width:28.80px;height:134.00px;background:linear-gradient(#5f7b9d 0,#5f7b9d 47%,#627a9d 49%,#627a9d 100%);border:1px solid #fafafa;box-shadow:inset 0 0 0 1px rgba(170,170,170,.55);border-right:none;"></div>
<div class="a" style="left:907.2px;top:590px;width:28.8px;height:24px;overflow:hidden">
<span class="t" style="left:5.69px;top:4.00px;font-size:13.60px;transform:scaleX(0.8500);color:#f6f6f6;">Blue Sky</span>
</div>
<span class="t" style="left:0.00px;top:-10.00px;font-size:12.50px;color:#f4f4f4;font-weight:700;transform-origin:0 0;transform:translate(366px,505px) rotate(-90deg) scaleX(1.04);left:0;top:0;">Actual</span>
<span class="t" style="left:0.00px;top:-10.00px;font-size:12.50px;color:#f4f4f4;font-weight:700;transform-origin:0 0;transform:translate(366px,579.5px) rotate(-90deg) scaleX(1.04);left:0;top:0;">Target</span>
<div class="a" style="left:363.00px;top:630.00px;width:573.00px;height:18.50px;background:#626262;"></div>
<div class="a" style="left:364.50px;top:632.00px;width:13.00px;height:15.00px;background:#8a8a8a;border-radius:2px"></div>
<div class="a" style="left:922.00px;top:632.00px;width:13.00px;height:15.00px;background:#8a8a8a;border-radius:2px"></div>
<div class="a" style="left:380.50px;top:632.00px;width:97.00px;height:15.00px;background:#484848;border-radius:7px"></div>
<svg style="left:366px;top:634px" width="10" height="11"><path d="M8 0.5V10.5L1.5 5.5Z" fill="#4a4a4a"/></svg>
<svg style="left:924px;top:634px" width="10" height="11"><path d="M2 0.5V10.5L8.5 5.5Z" fill="#4a4a4a"/></svg>
<div class="a" style="left:943.00px;top:15.30px;width:672.00px;height:633.40px;background:#333333;border:7px solid #c78c61;border-top-width:8px;border-bottom-width:8px"></div>
<span class="t" style="left:1237.00px;top:31.00px;font-size:17.20px;transform:scaleX(0.8298);color:#d8d8d8;">CIE 1976 u'v'</span>
<div class="cie" style="left:987px;top:51px;width:618px;height:556px">
<div class="cf" style="top:10px;clip-path:polygon(264.5px 532.6px,618.0px 106.6px,618.0px 72.0px,202.6px 16.0px,148.2px 8.9px,111.9px 4.5px,94.2px 2.7px,78.0px 1.4px,62.8px 0.7px,51.0px 0.6px,39.3px 1.0px,30.8px 1.8px,22.9px 3.5px,17.9px 5.5px,13.3px 8.3px,11.2px 10.0px,9.1px 12.2px,7.3px 14.5px,4.2px 19.7px,2.9px 22.8px,0.9px 29.8px,0.0px 35.5px,0.0px 58.0px,0.7px 64.2px,2.7px 77.7px,5.9px 93.2px,7.9px 101.8px,12.9px 120.7px,19.3px 141.9px,27.1px 165.0px,36.0px 189.8px,46.2px 215.8px,51.8px 229.1px,63.9px 256.0px,76.8px 282.8px,90.0px 308.9px,103.2px 334.0px,116.2px 357.5px,128.8px 379.0px,140.7px 398.3px,152.1px 415.6px,162.8px 430.9px,172.2px 443.6px,184.3px 458.5px,194.9px 470.5px,207.6px 483.6px,247.7px 522.9px,255.4px 529.9px,258.2px 532.1px,260.1px 533.1px,262.7px 533.3px)">
<i style="margin-left:28px;width:58px;background:linear-gradient(90deg,#0f0 0,#0f0 58px)"></i>
<i style="margin-left:20px;width:88px;background:linear-gradient(90deg,#0f0 0,#0f0 88px)"></i>
<i style="margin-left:16px;width:110px;background:linear-gradient(90deg,#0f0 0,#01ff00 110px)"></i>
<i style="margin-left:12px;width:130px;background:linear-gradient(90deg,#0f0 0,#0f0 113px,#27ff00 130px)"></i>
<i style="margin-left:10px;width:148px;background:linear-gradient(90deg,#0f0 0,#0f0 116px,#27ff00 132px,#51ff00 148px)"></i>
<i style="margin-left:8px;width:165px;background:linear-gradient(90deg,#0f0 0,#0f0 118px,#38ff00 141px,#7cff00 165px)"></i>
<i style="margin-left:6px;width:183px;background:linear-gradient(90deg,#00ff03 0,#0f0 21px,#0f0 120px,#21ff00 134px,#50ff00 152px,#7fff00 168px,#afff00 183px)"></i>
<i style="margin-left:5px;width:199px;background:linear-gradient(90deg,#00ff05 0,#0f0 40px,#0f0 122px,#35ff00 143px,#6dff00 163px,#a9ff00 182px,#e5ff00 199px)"></i>
<i style="margin-left:4px;width:215px;background:linear-gradient(90deg,#00ff08 0,#0f0 59px,#0f0 123px,#37ff00 145px,#76ff00 167px,#b7ff00 187px,#fcff00 206px,#fffe00 207px,#ffe100 215px)"></i>
<i style="margin-left:3px;width:231px;background:linear-gradient(90deg,#00ff0b 0,#00ff01 70px,#0f0 124px,#34ff00 145px,#76ff00 168px,#b7ff00 188px,#fdff00 207px,#fffd00 208px,#ffd400 220px,#ffb700 231px)"></i>
<i style="margin-left:2px;width:247px;background:linear-gradient(90deg,#00ff0e 0,#00ff01 89px,#01ff00 126px,#3cff00 149px,#79ff00 170px,#bf0 190px,#feff00 208px,#fd0 218px,#ffc500 226px,#ffad00 236px,#ff9600 247px)"></i>
<i style="margin-left:1px;width:262px;background:linear-gradient(90deg,#00ff12 0,#00ff01 108px,#0f0 127px,#3bff00 150px,#79ff00 171px,#bf0 191px,#feff00 209px,#ffd600 221px,#ffb500 233px,#ff9800 247px,#ff7f00 262px)"></i>
<i style="margin-left:0px;width:278px;background:linear-gradient(90deg,#00ff15 0,#00ff01 128px,#38ff00 150px,#75ff00 171px,#b7ff00 191px,#ff0 210px,#ffd200 223px,#ffa900 239px,#ff8700 257px,#ff6a00 278px)"></i>
<i style="margin-left:0px;width:293px;background:linear-gradient(90deg,#00ff17 0,#00ff05 128px,#35ff01 149px,#75ff00 171px,#b8ff00 191px,#fffe00 210px,#ffe100 218px,#ffc900 226px,#ffb100 235px,#ff9e00 244px,#ff8a00 255px,#ff7900 266px,#ff5900 293px)"></i>
<i style="margin-left:0px;width:308px;background:linear-gradient(90deg,#00ff1a 0,#01ff08 129px,#3aff04 151px,#75ff00 171px,#b8ff00 191px,#fcff00 209px,#fffe00 210px,#fd0 219px,#ffc000 229px,#ffa800 239px,#ff9200 250px,#ff7e00 262px,#ff6b00 276px,#ff4b00 308px)"></i>
<i style="margin-left:0px;width:323px;background:linear-gradient(90deg,#00ff1d 0,#00ff0c 129px,#3aff08 151px,#75ff04 171px,#b8ff00 191px,#fdff00 209px,#fffd00 210px,#ffd900 220px,#ffbc00 230px,#ffa300 241px,#ff8a00 254px,#ff7300 269px,#ff6000 285px,#ff4f00 303px,#ff3f00 323px)"></i>
<i style="margin-left:0px;width:338px;background:linear-gradient(90deg,#00ff20 0,#00ff10 129px,#36ff0c 150px,#75ff08 171px,#b8ff04 191px,#fdff00 209px,#ffd500 221px,#ffb700 232px,#ff9a00 245px,#ff8100 259px,#ff6b00 275px,#ff5600 294px,#f40 315px,#ff3500 338px)"></i>
<i style="margin-left:0px;width:352px;background:linear-gradient(90deg,#00ff23 0,#01ff14 130px,#3bff10 152px,#78ff0c 172px,#b8ff08 191px,#feff04 209px,#ffd501 221px,#ffb300 233px,#ff9500 247px,#ff7b00 263px,#ff6300 281px,#ff4e00 302px,#ff3c00 325px,#ff2c00 352px)"></i>
<i style="margin-left:0px;width:367px;background:linear-gradient(90deg,#00ff26 0,#00ff18 130px,#3bff15 152px,#78ff11 172px,#b9ff0d 191px,#ffff09 209px,#ffd405 221px,#ffb002 234px,#ff9100 249px,#ff7400 267px,#ff5c00 287px,#ff4700 310px,#ff3400 337px,#ff2400 367px)"></i>
<i style="margin-left:0px;width:382px;background:linear-gradient(90deg,#00ff29 0,#00ff1c 130px,#38ff19 151px,#77ff16 172px,#b9ff12 191px,#ffff0e 209px,#ffe70c 215px,#ffd009 222px,#ffab05 236px,#ff8b01 252px,#ff6e00 271px,#f50 293px,#ff4000 318px,#ff2d00 348px,#ff1d00 382px)"></i>
<i style="margin-left:0px;width:397px;background:linear-gradient(90deg,#00ff2c 0,#00ff20 130px,#34ff1e 150px,#74ff1b 171px,#b5ff17 190px,#fcff14 208px,#fffe13 209px,#ffe310 216px,#ffcc0d 223px,#ffa808 237px,#ff8504 255px,#ff6801 275px,#ff4f00 299px,#ff3900 327px,#ff2700 359px,#ff1700 397px)"></i>
<i style="margin-left:0px;width:412px;background:linear-gradient(90deg,#00ff30 0,#01ff24 131px,#3aff22 152px,#74ff1f 171px,#b2ff1c 189px,#fdff19 208px,#fffd19 209px,#ffe615 215px,#ffcf12 222px,#ffb80f 230px,#ffa50c 238px,#ff8107 257px,#ff6303 279px,#ff4900 305px,#ff3400 335px,#ff2100 370px,#f10 412px)"></i>
<i style="margin-left:0px;width:427px;background:linear-gradient(90deg,#0f3 0,#00ff29 131px,#39ff26 152px,#74ff24 171px,#afff22 188px,#fdff1e 208px,#fffd1e 209px,#ffe21a 216px,#ffcb16 223px,#ffb512 231px,#ffa00f 240px,#ff7c09 260px,#ff5e05 283px,#f40 311px,#ff2e00 343px,#ff1c00 382px,#ff0c00 427px)"></i>
<i style="margin-left:0px;width:442px;background:linear-gradient(90deg,#00ff36 0,#00ff2d 131px,#33ff2b 150px,#70ff29 170px,#abff27 187px,#feff24 208px,#fffc23 209px,#ffe11e 216px,#ffc71a 224px,#ffb216 232px,#ff9d12 241px,#ff8a0f 251px,#ff780c 262px,#ff5906 287px,#ff3f02 316px,#ff2a00 351px,#ff1700 393px,#ff0800 442px)"></i>
<i style="margin-left:0px;width:456px;background:linear-gradient(90deg,#00ff39 0,#00ff31 131px,#33ff30 150px,#73ff2e 171px,#b6ff2c 190px,#ffff29 208px,#ffe023 216px,#ffca1f 223px,#ffb11a 232px,#ff9c16 241px,#ff8912 251px,#ff760f 263px,#ff5609 289px,#ff3c04 320px,#ff2600 358px,#ff1300 403px,#ff0400 456px)"></i>
<i style="margin-left:0px;width:471px;background:linear-gradient(90deg,#00ff3c 0,#01ff36 132px,#3bff34 153px,#77ff32 172px,#b7ff31 190px,#ffff2f 208px,#ffe028 216px,#ffc623 224px,#ffae1e 233px,#ff9719 243px,#ff8315 254px,#ff7111 266px,#ff520a 293px,#ff3705 326px,#ff2100 366px,#ff0f00 414px,#f00 471px)"></i>
<i style="margin-left:0px;width:486px;background:linear-gradient(90deg,#00ff3f 0,#00ff3a 132px,#37ff39 152px,#76ff37 172px,#b7ff36 190px,#fffe34 208px,#ffdf2d 216px,#ffc527 224px,#ffab21 234px,#ff951c 244px,#ff8118 255px,#ff6d13 268px,#ff4d0c 297px,#ff3206 334px,#ff1b01 379px,#ff0600 445px,#f00 470px,#f00 486px)"></i>
<i style="margin-left:0px;width:501px;background:linear-gradient(90deg,#00ff43 0,#00ff3e 132px,#34ff3e 151px,#73ff3d 171px,#afff3c 188px,#fffd3a 208px,#ffde32 216px,#ffc12b 225px,#ffa725 235px,#ff9220 245px,#ff7d1a 257px,#ff6a16 270px,#ff5811 285px,#ff490e 301px,#ff2c07 342px,#ff1601 392px,#f00 468px,#f00 501px)"></i>
<i style="margin-left:0px;width:516px;background:linear-gradient(90deg,#00ff46 0,#01ff43 133px,#39ff42 153px,#76ff42 172px,#b0ff41 188px,#fdff40 207px,#fffd3f 208px,#ffdd37 216px,#ffc130 225px,#ffa729 235px,#ff8d22 247px,#ff791d 259px,#ff6618 273px,#ff5413 289px,#ff440f 306px,#ff350b 327px,#ff2707 351px,#ff1001 408px,#f00 467px,#f00 516px)"></i>
<i style="margin-left:0px;width:531px;background:linear-gradient(90deg,#00ff49 0,#00ff48 133px,#39ff47 153px,#72ff47 171px,#acff46 187px,#feff46 207px,#fffc45 208px,#ffd93b 217px,#ffbd33 226px,#ffa42c 236px,#ff8b25 248px,#ff751f 261px,#ff611a 276px,#ff5015 292px,#ff4011 310px,#ff310c 333px,#ff2308 359px,#ff0b02 422px,#f00 465px,#f00 531px)"></i>
<i style="margin-left:0px;width:546px;background:linear-gradient(90deg,#00ff4c 0,#00ff4c 133px,#35ff4c 152px,#72ff4c 171px,#b8ff4c 190px,#feff4c 207px,#fffb4b 208px,#ffd840 217px,#ffbc38 226px,#ffa130 237px,#ff8828 249px,#ff7222 263px,#ff5e1c 278px,#ff4d17 295px,#ff3d12 314px,#ff2d0d 339px,#ff1e09 368px,#ff0602 438px,#f00 464px,#f00 546px)"></i>
<i style="margin-left:0px;width:560px;background:linear-gradient(90deg,#00ff50 0,#00ff51 133px,#35ff51 152px,#76ff51 172px,#b8ff52 190px,#ffff52 207px,#ffdb47 216px,#ffbc3c 226px,#ffa034 237px,#ff882c 249px,#ff7125 263px,#ff5c1e 279px,#ff4b19 296px,#ff3b14 316px,#ff2a0e 343px,#ff1b0a 374px,#ff0e06 409px,#ff0302 450px,#ff0001 463px,#f00 560px)"></i>
<i style="margin-left:0px;width:575px;background:linear-gradient(90deg,#00ff53 0,#01ff55 134px,#3bff56 154px,#75ff57 172px,#b4ff57 189px,#fffe58 207px,#ffda4c 216px,#ffbb41 226px,#ff9d37 238px,#ff832e 251px,#ff6c27 266px,#ff5820 282px,#ff471a 300px,#ff3715 320px,#ff270f 348px,#ff180a 380px,#ff0b06 417px,#ff0003 459px,#f00 501px,#f00 575px)"></i>
<i style="margin-left:0px;width:590px;background:linear-gradient(90deg,#00ff56 0,#00ff5a 134px,#37ff5b 153px,#75ff5c 172px,#b4ff5d 189px,#fffd5e 207px,#ffda51 216px,#ffb745 227px,#ff9a3a 239px,#ff8131 252px,#ff6a29 267px,#ff5622 284px,#ff441c 303px,#ff3416 324px,#ff2411 351px,#ff170c 382px,#ff0004 458px,#f00 515px,#f00 590px)"></i>
<i style="margin-left:0px;width:605px;background:linear-gradient(90deg,#00ff5a 0,#00ff5f 134px,#33ff60 152px,#72ff61 171px,#adff63 187px,#fdff64 206px,#fffd63 207px,#ffd956 216px,#ffb649 227px,#ff993e 239px,#ff7e34 253px,#ff682c 268px,#ff5324 286px,#ff411d 306px,#ff3117 328px,#ff2212 354px,#ff150d 384px,#ff0005 456px,#f00 529px,#f00 605px)"></i>
<i style="margin-left:0px;width:618px;background:linear-gradient(90deg,#00ff5d 0,#00ff64 134px,#0aff64 138px,#30ff65 151px,#6eff67 170px,#a9ff68 186px,#d2ff69 196px,#fdff6b 206px,#fffc69 207px,#ffd55a 217px,#ffb34d 228px,#ff9642 240px,#ff7c37 254px,#ff652e 270px,#ff5026 288px,#ff3e1f 308px,#ff2f19 331px,#ff2013 357px,#ff140f 386px,#ff0007 455px,#f00 547px,#f00 618px)"></i>
<i style="margin-left:0px;width:618px;background:linear-gradient(90deg,#00ff61 0,#01ff69 135px,#39ff6b 154px,#71ff6d 171px,#b5ff6f 189px,#feff71 206px,#fffb6f 207px,#ffd45f 217px,#ffb251 228px,#ff9546 240px,#ff7b3b 254px,#ff6431 270px,#ff5029 288px,#ff3e22 308px,#ff2e1b 331px,#ff1410 385px,#ff0008 453px,#f00 564px,#f00 618px)"></i>
<i style="margin-left:1px;width:617px;background:linear-gradient(90deg,#00ff64 0,#00ff6e 134px,#38ff70 153px,#78ff72 172px,#b9ff75 189px,#ff7 205px,#ffda68 214px,#ffb758 225px,#ff994b 237px,#ff7e40 251px,#ff6635 267px,#ff512c 285px,#ff3f25 305px,#ff2f1e 328px,#ff2118 353px,#ff1412 382px,#ff000a 451px,#ff0002 553px,#f00 617px)"></i>
<i style="margin-left:1px;width:617px;background:linear-gradient(90deg,#00ff68 0,#00ff73 134px,#34ff75 152px,#74ff78 171px,#b5ff7b 188px,#fffe7e 205px,#ffd96d 214px,#ffb65d 225px,#ff9850 237px,#ff7d43 251px,#ff6539 267px,#ff502f 285px,#ff3e27 305px,#ff2e20 328px,#ff1414 381px,#ff000b 449px,#f00 617px)"></i>
<i style="margin-left:1px;width:617px;background:linear-gradient(90deg,#00ff6b 0,#01ff78 135px,#3aff7b 154px,#74ff7e 171px,#b2ff81 187px,#fffe84 205px,#ffd972 214px,#ffb562 225px,#ff9754 237px,#ff7c47 251px,#ff643c 267px,#ff5032 285px,#ff3e29 305px,#ff2d22 328px,#ff1416 380px,#ff000d 447px,#f00 617px)"></i>
<i style="margin-left:2px;width:616px;background:linear-gradient(90deg,#00ff6f 0,#00ff7d 134px,#3aff81 153px,#74ff84 170px,#b2ff87 186px,#fcff8b 203px,#fffd8a 204px,#ffd878 213px,#ffb467 224px,#ff9758 236px,#ff7c4b 250px,#ff643f 266px,#ff4f35 284px,#ff3d2c 304px,#ff2d24 327px,#ff1418 379px,#ff000e 445px,#ff0001 616px)"></i>
<i style="margin-left:2px;width:616px;background:linear-gradient(90deg,#00ff72 0,#00ff83 134px,#33ff86 151px,#70ff89 169px,#aaff8d 184px,#fdff92 203px,#fffc91 204px,#ffd77e 213px,#ffb46b 224px,#ff965c 236px,#ff7b4e 250px,#ff6342 266px,#ff4e38 284px,#ff3c2e 304px,#ff2c26 327px,#ff141a 378px,#ff0010 443px,#ff0002 616px)"></i>
<i style="margin-left:3px;width:615px;background:linear-gradient(90deg,#00ff76 0,#0f8 133px,#2fff8b 149px,#70ff8f 168px,#b6ff94 186px,#feff99 202px,#fffb97 203px,#ffd683 212px,#ffb370 223px,#ff9560 235px,#ff7a52 249px,#ff6245 265px,#ff4e3a 283px,#ff3c31 303px,#ff2c28 326px,#ff141b 376px,#f01 440px,#ff0009 518px,#ff0003 615px)"></i>
<i style="margin-left:3px;width:615px;background:linear-gradient(90deg,#00ff7a 0,#00ff83 73px,#01ff8d 134px,#3cff92 153px,#77ff96 170px,#bbff9b 187px,#ffffa0 202px,#ffd589 212px,#ffb577 222px,#ff9666 234px,#ff7b57 248px,#ff644a 263px,#ff4f3e 281px,#ff3d34 301px,#ff2c2b 324px,#ff131d 375px,#ff0013 439px,#ff000a 517px,#ff0004 615px)"></i>
<i style="margin-left:3px;width:615px;background:linear-gradient(90deg,#00ff7d 0,#00ff87 73px,#00ff93 134px,#38ff97 152px,#77ff9c 170px,#b7ffa1 186px,#ffffa7 202px,#ffd891 211px,#ffb47c 222px,#ff966a 234px,#ff7a5a 248px,#ff634d 263px,#ff4e41 281px,#ff3c37 301px,#ff2c2d 324px,#ff131f 374px,#ff0014 437px,#ff000b 516px,#ff0004 615px)"></i>
<i style="margin-left:4px;width:614px;background:linear-gradient(90deg,#00ff81 0,#00ff8c 73px,#00ff98 133px,#34ff9d 150px,#73ffa2 168px,#b3ffa8 184px,#fffead 201px,#ffd796 210px,#ffb381 221px,#ff956f 233px,#ff795e 247px,#ff6351 262px,#ff4d44 280px,#ff3b39 300px,#ff2b30 323px,#ff1321 372px,#ff0016 434px,#ff000d 513px,#ff0005 614px)"></i>
<i style="margin-left:4px;width:614px;background:linear-gradient(90deg,#00ff85 0,#00ff90 73px,#01ff9e 134px,#3affa3 152px,#77ffa9 169px,#b3ffae 184px,#fcffb5 200px,#fffdb4 201px,#ffd79c 210px,#ffb286 221px,#ff9473 233px,#ff7962 247px,#ff6254 262px,#ff4d47 280px,#ff3b3c 300px,#ff2b32 323px,#ff1323 372px,#ff0017 433px,#ff000e 513px,#ff0006 614px)"></i>
<i style="margin-left:5px;width:613px;background:linear-gradient(90deg,#00ff89 0,#00ff95 73px,#00ffa4 133px,#39ffa9 151px,#73ffaf 167px,#afffb5 182px,#fdffbc 199px,#fffcbb 200px,#ffd6a2 209px,#ffb18b 220px,#ff9377 232px,#ff7866 246px,#ff6157 261px,#ff4c4a 279px,#ff3a3e 299px,#ff2a34 322px,#ff1325 370px,#ff0019 430px,#ff000f 511px,#ff0007 613px)"></i>
<i style="margin-left:5px;width:613px;background:linear-gradient(90deg,#00ff8d 0,#00ff9a 73px,#00ffa9 133px,#36ffaf 150px,#72ffb5 167px,#b8ffbd 184px,#feffc4 199px,#fffbc2 200px,#ffd5a8 209px,#ffb190 220px,#ff927c 232px,#ff776a 246px,#ff605b 261px,#ff4b4d 279px,#ff3941 299px,#ff2936 322px,#ff1327 369px,#ff001b 428px,#ff0010 509px,#ff0008 613px)"></i>
<i style="margin-left:6px;width:612px;background:linear-gradient(90deg,#00ff91 0,#00ff9e 72px,#00ffaf 132px,#2effb4 147px,#6effbc 165px,#b4ffc3 182px,#feffcc 198px,#fffbc9 199px,#ffd4ae 208px,#ffb095 219px,#ff9180 231px,#ff786f 244px,#ff615f 259px,#ff4c50 277px,#ff3943 298px,#ff2938 321px,#ff1229 368px,#ff001c 426px,#f01 508px,#ff0009 612px)"></i>
<i style="margin-left:6px;width:612px;background:linear-gradient(90deg,#00ff95 0,#00ffa3 73px,#01ffb5 133px,#3bffbc 151px,#76ffc3 167px,#b8ffcb 183px,#ffffd3 198px,#ffd7b7 207px,#ffb29c 218px,#ff9386 230px,#ff7974 243px,#ff6263 258px,#ff4c54 276px,#ff3a47 296px,#ff2a3c 319px,#ff122b 366px,#ff001e 424px,#ff0013 506px,#ff000a 612px)"></i>
<i style="margin-left:6px;width:612px;background:linear-gradient(90deg,#00ff98 0,#00ffa8 73px,#0fb 133px,#37ffc2 150px,#76ffca 167px,#b4ffd2 182px,#fffeda 198px,#ffd6bd 207px,#ffb1a2 218px,#ff928b 230px,#ff7878 243px,#ff6167 258px,#ff4b57 276px,#ff394a 296px,#ff293e 319px,#ff122d 365px,#ff0020 422px,#ff0014 505px,#ff000a 612px)"></i>
<i style="margin-left:7px;width:611px;background:linear-gradient(90deg,#00ff9d 0,#00ffad 72px,#00ffc1 132px,#33ffc8 148px,#72ffd0 165px,#b0ffd8 180px,#fcffe2 196px,#fffde1 197px,#ffd5c3 206px,#ffb0a7 217px,#ff918f 229px,#ff777c 242px,#ff606a 257px,#ff4b5a 275px,#ff384c 295px,#ff2840 318px,#ff122f 364px,#f02 420px,#ff0015 503px,#ff000b 611px)"></i>
<i style="margin-left:8px;width:610px;background:linear-gradient(90deg,#00ffa1 0,#00ffb2 72px,#00ffc7 131px,#08ffc8 134px,#2fffce 146px,#6effd7 163px,#acffdf 178px,#fdffea 195px,#fffce9 196px,#ffd4c9 205px,#ffafac 216px,#ff9094 228px,#ff7680 241px,#ff5f6e 256px,#ff4a5d 274px,#ff384f 294px,#ff2842 317px,#ff1231 362px,#ff0023 417px,#ff0016 501px,#ff000c 610px)"></i>
<i style="margin-left:8px;width:610px;background:linear-gradient(90deg,#00ffa5 0,#00ffb7 72px,#01ffce 132px,#36ffd5 148px,#71ffde 164px,#b5ffe8 180px,#fdfff3 195px,#fffbf0 196px,#ffd3d0 205px,#ffaeb2 216px,#ff8f99 228px,#ff7684 241px,#ff5e71 256px,#ff4960 274px,#ff3752 294px,#ff2745 317px,#f13 361px,#ff0025 415px,#ff0017 500px,#ff000d 610px)"></i>
<i style="margin-left:9px;width:608px;background:linear-gradient(90deg,#00ffa9 0,#00ffbd 72px,#00ffd4 131px,#35ffdc 147px,#71ffe5 163px,#b5fff0 179px,#fefffb 194px,#fffbf7 195px,#ffd3d6 204px,#ffadb7 215px,#ff8e9d 227px,#ff7588 240px,#ff5e75 255px,#ff4863 273px,#ff3654 293px,#ff2647 316px,#ff1135 360px,#ff0027 413px,#ff0019 498px,#ff000e 608px)"></i>
<i style="margin-left:9px;width:606px;background:linear-gradient(90deg,#00ffad 0,#00ffc2 72px,#00ffda 131px,#2affe1 144px,#65ffeb 160px,#9ffff4 174px,#dbfffd 187px,#fbfbff 194px,#fff5fa 196px,#ffced9 205px,#ffaaba 216px,#ff8ba0 228px,#ff728b 241px,#ff5c77 256px,#ff4765 274px,#ff3556 294px,#ff2549 317px,#ff1137 359px,#ff0029 411px,#ff001a 496px,#ff000f 606px)"></i>
<i style="margin-left:10px;width:603px;background:linear-gradient(90deg,#00ffb2 0,#00ffc7 72px,#01ffe1 131px,#29ffe8 143px,#51ffee 154px,#7dfff6 165px,#a8fffd 175px,#c2fcff 181px,#ffeffd 196px,#ffc9dc 205px,#ffa6bd 216px,#ff88a3 228px,#ff708d 241px,#ff597a 256px,#ff4568 274px,#ff3458 294px,#ff244b 317px,#ff1039 358px,#ff002b 408px,#ff001c 493px,#ff0010 603px)"></i>
<i style="margin-left:10px;width:602px;background:linear-gradient(90deg,#00ffb6 0,#0fc 72px,#00ffe8 131px,#42fff3 150px,#8dfdff 169px,#f9e9ff 196px,#ffe5fc 198px,#ffc1dc 207px,#ff9fbd 218px,#ff83a4 230px,#ff6a8d 244px,#ff557a 259px,#ff4168 277px,#ff3159 297px,#ff224b 320px,#ff0f3a 360px,#ff002d 407px,#ff001d 492px,#f01 602px)"></i>
<i style="margin-left:11px;width:599px;background:linear-gradient(90deg,#00ffba 0,#00ffd2 71px,#0fe 130px,#2bfff6 143px,#67fdff 159px,#afefff 178px,#fbe0ff 197px,#ffdbfb 199px,#ffb9dc 208px,#ff99be 219px,#ff7ea4 231px,#ff668e 245px,#ff507a 261px,#ff3e68 279px,#ff2e59 299px,#ff1f4c 322px,#ff0e3c 360px,#ff002f 404px,#ff001e 488px,#ff0012 599px)"></i>
<i style="margin-left:11px;width:597px;background:linear-gradient(90deg,#00ffbf 0,#00ffd7 71px,#00fff5 130px,#12fff8 136px,#40fdff 149px,#9bebff 174px,#fcd8ff 199px,#ffd2fa 201px,#ffafd8 211px,#ff91bc 222px,#ff78a3 234px,#ff618d 248px,#ff4c7a 264px,#ff3a69 282px,#ff2b5a 302px,#ff1d4d 325px,#ff0d3d 361px,#ff0030 403px,#ff0020 487px,#ff0013 597px)"></i>
<i style="margin-left:12px;width:595px;background:linear-gradient(90deg,#00ffc3 0,#0fd 71px,#01fffc 130px,#18fdff 137px,#73ebff 163px,#fdcfff 200px,#ffcdfd 201px,#ffabdb 211px,#ff8ebe 222px,#ff75a6 234px,#ff5e90 248px,#ff4a7c 264px,#ff396b 282px,#ff2a5c 302px,#ff1c4e 325px,#ff0d3f 360px,#ff0032 400px,#ff0021 484px,#ff0014 595px)"></i>
<i style="margin-left:12px;width:593px;background:linear-gradient(90deg,#00ffc7 0,#0fd 60px,#00fffd 121px,#00fbff 130px,#6ce5ff 162px,#b3d7ff 182px,#fac8ff 201px,#ffc5fc 203px,#ffa4db 213px,#ff88bf 224px,#ff70a7 236px,#ff5b91 250px,#ff477d 266px,#ff366c 284px,#ff275c 305px,#ff1a4f 328px,#ff0c41 360px,#ff0034 398px,#ff0023 482px,#ff0015 593px)"></i>
<i style="margin-left:13px;width:590px;background:linear-gradient(90deg,#0fc 0,#00ffe2 59px,#00fffd 110px,#00f5ff 129px,#62e0ff 159px,#afd1ff 181px,#fbc1ff 202px,#ffbcfb 204px,#ff9edb 214px,#ff83bf 225px,#ff6ba6 238px,#ff5690 252px,#ff447d 268px,#ff336c 286px,#ff255d 307px,#ff1850 330px,#ff0b42 361px,#ff0036 396px,#ff0024 480px,#ff0016 590px)"></i>
<i style="margin-left:14px;width:588px;background:linear-gradient(90deg,#00ffd1 0,#00ffe6 53px,#00fffd 99px,#0ef 128px,#1be9ff 137px,#69d8ff 161px,#ffb8fe 204px,#ff9add 214px,#ff80c2 225px,#ff68a8 238px,#ff5492 252px,#ff427f 268px,#ff326e 286px,#ff235e 307px,#ff1751 330px,#ff0b44 359px,#ff0039 393px,#ff0026 477px,#ff0017 588px)"></i>
<i style="margin-left:14px;width:586px;background:linear-gradient(90deg,#00ffd5 0,#00ffe8 47px,#00fffe 89px,#01e8ff 129px,#70d0ff 164px,#fab4ff 204px,#ffb0fd 206px,#ff94dd 216px,#ff7bc2 227px,#ff64a9 240px,#ff5193 254px,#ff3f80 270px,#ff2f6e 289px,#ff215f 310px,#ff1552 333px,#ff003b 391px,#ff0027 475px,#ff0018 586px)"></i>
<i style="margin-left:15px;width:583px;background:linear-gradient(90deg,#00ffda 0,#00ffeb 41px,#00fffe 78px,#00e2ff 128px,#6accff 162px,#b2bcff 184px,#fbadff 205px,#ffa9fc 207px,#ff90e0 216px,#ff78c4 227px,#ff65ae 238px,#ff529a 251px,#ff4288 265px,#ff3477 281px,#ff1b5c 318px,#ff0c4b 351px,#ff003d 389px,#ff0028 473px,#ff0019 583px)"></i>
<i style="margin-left:15px;width:582px;background:linear-gradient(90deg,#00ffdf 0,#00fffe 68px,#00dcff 128px,#29d3ff 142px,#70c4ff 165px,#ffa5fe 208px,#ff8adf 218px,#ff75c7 228px,#ff62b1 239px,#ff509c 252px,#ff418a 266px,#ff3279 282px,#ff1a5d 319px,#ff0c4d 350px,#ff003f 387px,#ff002a 471px,#ff001a 582px)"></i>
<i style="margin-left:16px;width:579px;background:linear-gradient(90deg,#00ffe4 0,#00feff 61px,#01d6ff 128px,#74beff 166px,#fda0ff 208px,#ff9efd 209px,#ff87e2 218px,#ff72c9 228px,#ff60b3 239px,#ff4e9e 252px,#ff3f8c 266px,#ff317b 282px,#ff195f 319px,#ff0c4f 349px,#ff0041 384px,#ff002c 468px,#ff001b 579px)"></i>
<i style="margin-left:17px;width:576px;background:linear-gradient(90deg,#00ffe9 0,#00feff 50px,#00d1ff 127px,#6eb9ff 164px,#b3aaff 186px,#fb9bff 208px,#ff98fc 210px,#ff82e2 219px,#ff6cc7 230px,#ff5bb2 241px,#ff4a9d 254px,#ff3b8c 268px,#ff2e7b 284px,#ff1760 320px,#ff0b51 349px,#ff0043 382px,#ff002d 465px,#ff001d 576px)"></i>
<i style="margin-left:17px;width:575px;background:linear-gradient(90deg,#0fe 0,#00fdff 40px,#0cf 127px,#65b6ff 162px,#afa6ff 186px,#fc95ff 210px,#ff92fc 212px,#ff7ce1 221px,#ff68c7 232px,#ff57b2 243px,#ff479e 256px,#ff398c 270px,#ff2b7c 286px,#ff1661 322px,#ff0a52 349px,#ff0046 380px,#ff0039 419px,#ff002f 464px,#ff001e 575px)"></i>
<i style="margin-left:18px;width:572px;background:linear-gradient(90deg,#00fff3 0,#00fdff 29px,#00c7ff 126px,#23bfff 139px,#6eafff 165px,#ff8efe 212px,#ff77e1 222px,#ff65ca 232px,#ff55b4 243px,#ff45a0 256px,#ff378e 270px,#ff2a7e 286px,#ff1563 322px,#ff0a54 348px,#ff0048 377px,#ff003b 416px,#ff0030 461px,#ff001f 572px)"></i>
<i style="margin-left:19px;width:569px;background:linear-gradient(90deg,#00fff8 0,#00feff 17px,#01c2ff 126px,#71a9ff 166px,#fb8bff 211px,#ff88fd 213px,#ff74e3 222px,#ff61ca 233px,#ff51b5 244px,#ff42a1 257px,#ff348f 271px,#ff2980 286px,#ff1464 322px,#ff004a 375px,#ff003d 414px,#ff0032 458px,#ff0020 569px)"></i>
<i style="margin-left:19px;width:568px;background:linear-gradient(90deg,#00fffd 0,#00feff 7px,#00eaff 47px,#00beff 126px,#6ca5ff 165px,#b296ff 189px,#fc85ff 213px,#ff82fc 215px,#ff70e3 224px,#ff5dca 235px,#ff4eb5 246px,#ff3fa1 259px,#ff3290 273px,#ff2680 288px,#ff1265 324px,#ff004d 373px,#ff003f 411px,#ff0034 456px,#ff0021 568px)"></i>
<i style="margin-left:20px;width:565px;background:linear-gradient(90deg,#00fcff 0,#00dbff 64px,#00b9ff 125px,#719fff 167px,#ff7ffe 215px,#ff6be3 225px,#ff5bcc 235px,#ff4cb7 246px,#ff3da3 259px,#ff3092 273px,#ff2582 288px,#ff1167 324px,#ff004f 370px,#ff0042 408px,#ff0035 453px,#f02 565px)"></i>
<i style="margin-left:21px;width:562px;background:linear-gradient(90deg,#00f6ff 0,#00d6ff 64px,#01b4ff 125px,#749aff 168px,#ff7afe 216px,#ff67e2 226px,#ff57cc 236px,#ff48b8 247px,#ff3aa4 260px,#ff2383 289px,#ff1068 325px,#ff0052 367px,#ff003f 421px,#ff0030 485px,#ff0023 562px)"></i>
<i style="margin-left:21px;width:561px;background:linear-gradient(90deg,#00f2ff 0,#00d2ff 64px,#00b0ff 125px,#7296ff 168px,#fb77ff 216px,#ff75fd 218px,#ff62e2 228px,#ff53cc 238px,#ff45b8 249px,#ff38a5 262px,#ff2184 291px,#ff0e69 326px,#ff0054 366px,#ff0040 421px,#ff0031 484px,#ff0025 561px)"></i>
<i style="margin-left:22px;width:558px;background:linear-gradient(90deg,#00edff 0,#00cdff 64px,#00acff 124px,#6a94ff 165px,#b184ff 191px,#fc72ff 217px,#ff70fc 219px,#ff5ee2 229px,#ff4fcc 239px,#ff42b8 250px,#ff35a5 263px,#ff1f85 292px,#ff0d6a 327px,#ff0057 363px,#ff0041 421px,#ff0032 483px,#ff0026 558px)"></i>
<i style="margin-left:23px;width:555px;background:linear-gradient(90deg,#00e8ff 0,#00a9ff 123px,#299fff 140px,#6f8fff 167px,#ff6dfe 219px,#ff5be4 229px,#ff4dce 239px,#ff40ba 250px,#ff33a7 263px,#ff1e86 292px,#ff0c6b 327px,#ff0059 360px,#ff0043 420px,#ff0034 481px,#ff0027 555px)"></i>
<i style="margin-left:23px;width:554px;background:linear-gradient(90deg,#00e4ff 0,#01a4ff 124px,#728aff 169px,#fb6aff 219px,#ff68fd 221px,#ff58e4 231px,#ff4ace 241px,#ff3dbb 252px,#ff31a7 265px,#ff1c87 294px,#ff0b6d 328px,#ff005c 359px,#f04 420px,#ff0035 481px,#ff0028 554px)"></i>
<i style="margin-left:24px;width:551px;background:linear-gradient(90deg,#00dfff 0,#00a1ff 123px,#7087ff 168px,#fc66ff 220px,#ff64fc 222px,#ff54e3 232px,#ff46ce 242px,#ff3abb 253px,#ff2ea8 266px,#ff1a88 295px,#ff0a6e 329px,#ff005f 356px,#ff0045 420px,#ff0036 480px,#ff0029 551px)"></i>
<i style="margin-left:25px;width:549px;background:linear-gradient(90deg,#00dbff 0,#009dff 122px,#7582ff 170px,#ff61fe 222px,#ff51e5 232px,#ff44d0 242px,#ff38bd 253px,#ff2daa 266px,#ff198a 295px,#ff096f 329px,#ff0061 354px,#ff0053 384px,#ff0047 419px,#ff0037 478px,#ff002a 549px)"></i>
<i style="margin-left:25px;width:547px;background:linear-gradient(90deg,#00d7ff 0,#0199ff 123px,#757eff 171px,#ff5dfe 224px,#ff4ee5 234px,#ff41d0 244px,#ff36bd 255px,#ff2aaa 268px,#ff188b 296px,#ff0871 330px,#ff0064 352px,#f05 383px,#ff0048 419px,#ff0039 477px,#ff002c 547px)"></i>
<i style="margin-left:26px;width:544px;background:linear-gradient(90deg,#00d3ff 0,#0096ff 122px,#737bff 170px,#fc5aff 223px,#ff58fd 225px,#ff4ae5 235px,#ff3ed0 245px,#ff33bd 256px,#ff28ab 269px,#ff168c 297px,#ff0672 331px,#ff0067 349px,#ff0057 382px,#ff0049 419px,#ff003a 476px,#ff002d 544px)"></i>
<i style="margin-left:27px;width:542px;background:linear-gradient(90deg,#00ceff 0,#0093ff 121px,#6b79ff 167px,#b468ff 196px,#fc57ff 224px,#ff54fc 226px,#ff47e4 236px,#ff3bd0 246px,#ff26ac 269px,#ff158d 297px,#ff0573 331px,#ff0069 347px,#ff0059 380px,#ff004b 418px,#ff003b 475px,#ff002e 542px)"></i>
<i style="margin-left:27px;width:540px;background:linear-gradient(90deg,#00cbff 0,#0090ff 121px,#7374ff 171px,#ff52fe 227px,#ff44e6 237px,#ff39d2 247px,#ff2fbf 258px,#ff24ad 271px,#ff138e 299px,#ff0474 332px,#ff006c 345px,#ff005b 379px,#ff004c 418px,#ff003d 474px,#ff0030 540px)"></i>
<i style="margin-left:28px;width:537px;background:linear-gradient(90deg,#00c7ff 0,#018cff 121px,#7570ff 172px,#ff4efd 228px,#ff41e6 238px,#ff36d2 248px,#ff23af 271px,#ff1290 299px,#ff0376 332px,#ff006f 342px,#ff0060 371px,#ff004e 417px,#ff003e 472px,#ff0031 537px)"></i>
<i style="margin-left:29px;width:535px;background:linear-gradient(90deg,#00c3ff 0,#0089ff 120px,#716eff 170px,#fc4cff 227px,#ff4afd 229px,#ff3ee6 239px,#ff33d2 249px,#ff21af 272px,#ff1090 300px,#ff0277 333px,#ff0072 340px,#ff0061 372px,#ff004f 417px,#ff003f 471px,#ff0032 535px)"></i>
<i style="margin-left:29px;width:533px;background:linear-gradient(90deg,#00c0ff 0,#0086ff 120px,#766aff 173px,#ff48fe 230px,#ff3ce7 240px,#ff32d4 250px,#ff1fb1 273px,#ff0f92 301px,#ff0279 333px,#ff0062 372px,#ff0050 417px,#ff0041 470px,#f03 533px)"></i>
<i style="margin-left:30px;width:530px;background:linear-gradient(90deg,#00bcff 0,#0084ff 119px,#2a79ff 139px,#7168ff 171px,#ff45fe 231px,#ff39e7 241px,#ff2fd4 251px,#ff1db1 274px,#ff0e93 301px,#ff017a 333px,#ff0064 371px,#ff0052 416px,#ff0042 468px,#ff0035 530px)"></i>
<i style="margin-left:31px;width:528px;background:linear-gradient(90deg,#00b8ff 0,#0180ff 119px,#7364ff 172px,#fc43ff 230px,#ff41fd 232px,#ff36e7 242px,#ff2cd4 252px,#ff1bb1 275px,#ff0c94 302px,#ff007b 334px,#ff0065 372px,#ff0053 416px,#ff0043 468px,#ff0036 528px)"></i>
<i style="margin-left:32px;width:525px;background:linear-gradient(90deg,#00b5ff 0,#007eff 118px,#7860ff 174px,#ff3ffe 232px,#ff2bd6 252px,#ff1ab3 275px,#ff0b95 302px,#ff007c 334px,#ff0067 371px,#f05 414px,#ff0045 465px,#ff0037 525px)"></i>
<i style="margin-left:32px;width:523px;background:linear-gradient(90deg,#00b2ff 0,#007bff 118px,#745eff 173px,#ff3cfe 234px,#ff28d5 254px,#ff18b3 277px,#ff0996 304px,#ff0083 327px,#ff007d 335px,#ff0068 371px,#ff0056 414px,#ff0046 464px,#ff0039 523px)"></i>
<i style="margin-left:33px;width:521px;background:linear-gradient(90deg,#00aeff 0,#0178ff 118px,#765bff 174px,#ff39fe 235px,#ff26d7 254px,#ff16b5 277px,#ff0898 304px,#ff0086 325px,#ff007f 335px,#ff006a 371px,#ff0057 414px,#ff0048 463px,#ff003a 521px)"></i>
<i style="margin-left:34px;width:518px;background:linear-gradient(90deg,#00abff 0,#0076ff 117px,#7259ff 172px,#fc37ff 234px,#ff35fd 236px,#ff24d7 255px,#ff14b5 278px,#ff099e 299px,#ff008a 322px,#ff0080 335px,#ff006b 371px,#ff0058 413px,#ff0049 462px,#ff003c 518px)"></i>
<i style="margin-left:35px;width:515px;background:linear-gradient(90deg,#00a8ff 0,#0073ff 116px,#7855ff 175px,#ff33fe 236px,#ff22d7 256px,#ff13b7 278px,#ff09a1 297px,#ff008d 319px,#ff0081 335px,#ff006c 371px,#ff005a 412px,#ff004a 460px,#ff003d 515px)"></i>
<i style="margin-left:35px;width:514px;background:linear-gradient(90deg,#00a5ff 0,#0071ff 116px,#7254ff 173px,#ff31fe 238px,#ff20d9 257px,#ff11b7 280px,#ff08a3 298px,#ff0090 318px,#ff0083 336px,#ff006e 371px,#ff005b 412px,#ff004c 459px,#ff003e 514px)"></i>
<i style="margin-left:36px;width:511px;background:linear-gradient(90deg,#00a2ff 0,#016eff 116px,#7451ff 174px,#fc2fff 237px,#ff2efd 239px,#ff1ed9 258px,#ff0fb7 281px,#ff08a5 297px,#ff0094 315px,#ff0084 336px,#ff006f 371px,#ff005d 411px,#ff004d 457px,#ff0040 511px)"></i>
<i style="margin-left:37px;width:508px;background:linear-gradient(90deg,#009fff 0,#006cff 115px,#7a4dff 177px,#ff2cfe 239px,#ff1bd8 259px,#ff0eb9 281px,#ff0097 313px,#ff0085 336px,#ff0071 370px,#ff005e 410px,#ff004f 455px,#ff0041 508px)"></i>
<i style="margin-left:38px;width:506px;background:linear-gradient(90deg,#009cff 0,#006aff 114px,#764cff 175px,#ff29fe 240px,#ff1ada 259px,#ff0dba 281px,#ff009b 310px,#ff0087 336px,#ff0072 370px,#ff0060 409px,#ff0050 454px,#ff0043 506px)"></i>
<i style="margin-left:38px;width:504px;background:linear-gradient(90deg,#09f 0,#0167ff 115px,#764aff 176px,#ff26fe 242px,#ff18da 261px,#ff0bbb 283px,#ff00a0 308px,#f08 337px,#ff0073 370px,#ff0061 409px,#ff0052 453px,#f04 504px)"></i>
<i style="margin-left:39px;width:501px;background:linear-gradient(90deg,#0097ff 0,#0065ff 114px,#7248ff 174px,#fd25ff 241px,#ff24fd 243px,#ff16da 262px,#ff09bb 284px,#ff00a3 306px,#ff0089 337px,#ff0075 370px,#ff0063 408px,#ff0053 451px,#ff0046 501px)"></i>
<i style="margin-left:40px;width:499px;background:linear-gradient(90deg,#0094ff 0,#0063ff 113px,#7844ff 177px,#ff22fe 243px,#ff14db 262px,#ff08bc 284px,#ff00a7 303px,#ff008a 337px,#ff0076 370px,#ff0064 407px,#f05 450px,#ff0047 499px)"></i>
<i style="margin-left:41px;width:496px;background:linear-gradient(90deg,#0091ff 0,#0061ff 112px,#7443ff 175px,#ff20fe 244px,#ff12db 263px,#ff07be 284px,#ff00ab 301px,#ff008c 337px,#ff0078 369px,#f06 406px,#ff0056 448px,#ff0049 496px)"></i>
<i style="margin-left:42px;width:493px;background:linear-gradient(90deg,#008eff 0,#015fff 112px,#7541ff 175px,#ff1dfd 245px,#ff10db 264px,#ff05be 285px,#ff00af 298px,#ff009d 317px,#ff008d 337px,#ff0079 369px,#ff0067 405px,#ff0058 446px,#ff004a 493px)"></i>
<i style="margin-left:42px;width:492px;background:linear-gradient(90deg,#008cff 0,#005dff 112px,#7a3eff 179px,#ff1bff 246px,#ff0fdd 265px,#ff04bf 286px,#ff00b3 297px,#ff00a0 316px,#ff008e 338px,#ff007a 369px,#ff0069 405px,#ff0059 446px,#ff004c 492px)"></i>
<i style="margin-left:43px;width:489px;background:linear-gradient(90deg,#008aff 0,#005bff 111px,#773dff 177px,#ff19fe 247px,#ff0ddc 266px,#ff03bf 287px,#ff00b7 294px,#ff00a6 311px,#ff008f 338px,#ff007c 369px,#ff006a 404px,#ff005b 444px,#ff004d 489px)"></i>
<i style="margin-left:44px;width:486px;background:linear-gradient(90deg,#0087ff 0,#0159ff 111px,#773aff 177px,#ff17fe 248px,#ff0cde 266px,#ff02c1 287px,#ff00a7 311px,#ff0091 338px,#ff007d 368px,#ff006c 403px,#ff005c 442px,#ff004f 486px)"></i>
<i style="margin-left:45px;width:484px;background:linear-gradient(90deg,#0084ff 0,#0057ff 110px,#7339ff 175px,#fd16ff 247px,#ff15fd 249px,#ff0ade 267px,#ff00c1 288px,#ff00a8 311px,#ff0092 338px,#ff007e 368px,#ff006d 402px,#ff005e 440px,#ff0050 484px)"></i>
<i style="margin-left:46px;width:481px;background:linear-gradient(90deg,#0082ff 0,#05f 109px,#7936ff 178px,#ff13fe 249px,#ff08de 268px,#ff00c2 288px,#f0a 311px,#ff0094 337px,#ff0080 367px,#ff006f 400px,#ff0060 438px,#ff0052 481px)"></i>
<i style="margin-left:46px;width:479px;background:linear-gradient(90deg,#0080ff 0,#0054ff 109px,#7535ff 177px,#ff11fe 251px,#ff07df 269px,#ff00cb 283px,#ff00c4 289px,#ff00ab 312px,#ff0095 338px,#ff0082 367px,#ff0071 400px,#ff0061 437px,#ff0054 479px)"></i>
<i style="margin-left:47px;width:477px;background:linear-gradient(90deg,#007eff 0,#0152ff 109px,#7533ff 177px,#ff0ffe 252px,#ff08e7 265px,#ff00d1 280px,#ff00c4 290px,#ff00ab 313px,#ff0096 338px,#ff0083 367px,#ff0072 399px,#ff0063 436px,#f05 477px)"></i>
<i style="margin-left:48px;width:474px;background:linear-gradient(90deg,#007bff 0,#0050ff 108px,#7a30ff 180px,#ff0dff 252px,#ff00d5 278px,#ff00c5 290px,#ff00ad 313px,#ff0097 338px,#ff0085 366px,#ff0074 398px,#ff0064 434px,#ff0057 474px)"></i>
<i style="margin-left:49px;width:471px;background:linear-gradient(90deg,#0079ff 0,#004eff 107px,#792fff 179px,#ff0bfe 253px,#ff00da 275px,#ff00c5 291px,#ff00ae 313px,#f09 338px,#ff0086 366px,#ff0075 397px,#f06 432px,#ff0059 471px)"></i>
<i style="margin-left:50px;width:469px;background:linear-gradient(90deg,#07f 0,#014cff 107px,#772eff 178px,#ff0afe 254px,#ff00de 273px,#ff00c7 291px,#ff00af 313px,#ff009a 338px,#ff0087 365px,#f07 396px,#ff005a 469px)"></i>
<i style="margin-left:51px;width:466px;background:linear-gradient(90deg,#0075ff 0,#014bff 106px,#7c2aff 181px,#fe08ff 254px,#ff00e4 270px,#ff00c8 291px,#ff00b0 313px,#ff009c 337px,#ff0089 364px,#ff0079 394px,#ff005c 466px)"></i>
<i style="margin-left:52px;width:463px;background:linear-gradient(90deg,#0072ff 0,#0049ff 105px,#7a29ff 180px,#ff06fe 255px,#ff00e9 268px,#ff00c8 292px,#ff00b2 313px,#ff009d 337px,#ff008b 363px,#ff007a 393px,#ff005e 463px)"></i>
<i style="margin-left:52px;width:462px;background:linear-gradient(90deg,#0071ff 0,#0048ff 105px,#7729ff 179px,#ff04fe 257px,#ff00ef 266px,#ff00c9 293px,#ff00b3 314px,#ff009e 338px,#ff008c 364px,#ff007c 393px,#ff005f 462px)"></i>
<i style="margin-left:53px;width:459px;background:linear-gradient(90deg,#006fff 0,#0146ff 105px,#7527ff 178px,#ff03fe 258px,#ff00f3 264px,#ff00e2 275px,#ff00c9 294px,#ff00b3 315px,#ff009f 338px,#ff008d 364px,#ff007d 392px,#ff0061 459px)"></i>
<i style="margin-left:54px;width:456px;background:linear-gradient(90deg,#006dff 0,#0045ff 104px,#7a24ff 181px,#ff01ff 258px,#ff00e2 276px,#ff00cb 294px,#ff00b5 314px,#ff00a1 337px,#ff008f 362px,#ff007f 390px,#ff0063 456px)"></i>
<i style="margin-left:55px;width:454px;background:linear-gradient(90deg,#006bff 0,#0043ff 103px,#7923ff 180px,#ff00fe 259px,#ff00e3 276px,#f0c 294px,#ff00b6 314px,#ff00a2 337px,#ff0090 362px,#ff0080 390px,#ff0065 454px)"></i>
<i style="margin-left:56px;width:451px;background:linear-gradient(90deg,#0069ff 0,#0042ff 102px,#7423ff 177px,#f700ff 255px,#ff00fe 260px,#ff00e3 277px,#f0c 295px,#ff00b7 315px,#ff00a3 337px,#ff0092 361px,#ff0082 388px,#ff0067 451px)"></i>
<i style="margin-left:57px;width:448px;background:linear-gradient(90deg,#0067ff 0,#0140ff 102px,#7c1fff 182px,#f100ff 252px,#f0f 260px,#ff00e3 278px,#ff00cd 295px,#ff00b8 315px,#ff00a5 336px,#ff0094 360px,#ff0084 387px,#ff0069 448px)"></i>
<i style="margin-left:58px;width:446px;background:linear-gradient(90deg,#0065ff 0,#003fff 101px,#7a1eff 181px,#eb00ff 249px,#f0f 261px,#ff00e4 278px,#ff00ce 295px,#ff00b9 315px,#ff00a6 336px,#ff0085 386px,#ff006a 446px)"></i>
<i style="margin-left:59px;width:443px;background:linear-gradient(90deg,#0063ff 0,#003eff 100px,#6f20ff 174px,#e600ff 247px,#ff00fe 262px,#ff00e5 278px,#ff00ce 296px,#ff00ba 315px,#ff00a8 336px,#ff0087 385px,#ff006c 443px)"></i>
<i style="margin-left:60px;width:440px;background:linear-gradient(90deg,#0061ff 0,#013cff 100px,#6e1fff 173px,#e000ff 244px,#ff00fe 263px,#ff00e5 279px,#ff00cf 296px,#f0b 315px,#ff00a9 335px,#ff0089 383px,#ff006e 440px)"></i>
<i style="margin-left:61px;width:438px;background:linear-gradient(90deg,#005fff 0,#003bff 99px,#6b1eff 171px,#da00ff 241px,#f0f 263px,#ff00e6 279px,#ff00d1 296px,#ff00bc 315px,#ff00ab 335px,#ff008b 382px,#ff0070 438px)"></i>
<i style="margin-left:61px;width:436px;background:linear-gradient(90deg,#005eff 0,#003aff 99px,#6a1dff 171px,#d600ff 240px,#ff00fe 265px,#ff00e6 281px,#ff00d2 297px,#ff00bd 316px,#ff00ac 336px,#ff008c 382px,#ff0072 436px)"></i>
<i style="margin-left:62px;width:433px;background:linear-gradient(90deg,#005cff 0,#0039ff 98px,#641eff 167px,#d100ff 237px,#ff00fe 266px,#ff00e7 281px,#ff00d2 298px,#ff00ae 335px,#ff008e 380px,#ff0074 433px)"></i>
<i style="margin-left:63px;width:431px;background:linear-gradient(90deg,#005aff 0,#0137ff 98px,#651cff 168px,#cd00ff 235px,#f0f 266px,#ff00e7 282px,#ff00d3 298px,#ff00af 335px,#ff0090 379px,#ff0076 431px)"></i>
<i style="margin-left:64px;width:428px;background:linear-gradient(90deg,#0058ff 0,#0036ff 97px,#631bff 166px,#c700ff 232px,#f0f 267px,#ff00e8 282px,#ff00d4 298px,#ff00b1 334px,#ff0092 377px,#ff0078 428px)"></i>
<i style="margin-left:65px;width:426px;background:linear-gradient(90deg,#0057ff 0,#0035ff 96px,#5e1bff 163px,#c200ff 229px,#ff00fe 268px,#ff00e9 282px,#ff00d5 298px,#ff00b2 334px,#ff0094 376px,#ff007a 426px)"></i>
<i style="margin-left:66px;width:423px;background:linear-gradient(90deg,#05f 0,#0133ff 96px,#5f1aff 163px,#be00ff 227px,#fe00ff 268px,#ff00d5 299px,#ff00b3 334px,#ff0095 375px,#ff007c 423px)"></i>
<i style="margin-left:67px;width:420px;background:linear-gradient(90deg,#0053ff 0,#0032ff 95px,#5b1aff 160px,#b900ff 224px,#f0f 269px,#ff00d6 299px,#ff00b5 333px,#ff0097 373px,#ff007e 420px)"></i>
<i style="margin-left:68px;width:418px;background:linear-gradient(90deg,#0052ff 0,#0031ff 94px,#5819ff 158px,#b400ff 221px,#ff00fe 270px,#ff00d7 299px,#ff00b6 333px,#f09 372px,#ff0080 418px)"></i>
<i style="margin-left:69px;width:415px;background:linear-gradient(90deg,#0050ff 0,#0030ff 93px,#5419ff 155px,#b100ff 219px,#ff00fe 271px,#ff00d9 299px,#ff00b8 332px,#ff009b 370px,#ff0082 415px)"></i>
<i style="margin-left:70px;width:412px;background:linear-gradient(90deg,#004fff 0,#012fff 93px,#5418ff 155px,#ac00ff 216px,#f0f 271px,#ff00d8 300px,#ff00b9 332px,#ff009d 369px,#ff0085 412px)"></i>
<i style="margin-left:71px;width:410px;background:linear-gradient(90deg,#004dff 0,#002eff 92px,#5217ff 153px,#a700ff 213px,#f0f 272px,#ff00da 300px,#ff00ba 331px,#ff009f 368px,#ff0087 410px)"></i>
<i style="margin-left:72px;width:407px;background:linear-gradient(90deg,#004cff 0,#002dff 91px,#5017ff 151px,#a400ff 211px,#ff00fe 273px,#ff00db 300px,#ff00bc 331px,#ff00a1 366px,#ff0089 407px)"></i>
<i style="margin-left:73px;width:404px;background:linear-gradient(90deg,#004aff 0,#012bff 91px,#4f16ff 150px,#9f00ff 208px,#fe00ff 273px,#ff00dc 300px,#ff00bd 330px,#ff00a2 365px,#ff008c 404px)"></i>
<i style="margin-left:74px;width:402px;background:linear-gradient(90deg,#0049ff 0,#012aff 90px,#4c16ff 148px,#9b00ff 205px,#f0f 274px,#ff00dc 301px,#ff00be 330px,#ff00a4 364px,#ff008d 402px)"></i>
<i style="margin-left:75px;width:399px;background:linear-gradient(90deg,#0047ff 0,#0029ff 89px,#4b15ff 147px,#9800ff 203px,#ff00fe 275px,#ff00de 300px,#ff00c0 329px,#ff00a6 362px,#ff0090 399px)"></i>
<i style="margin-left:76px;width:396px;background:linear-gradient(90deg,#0046ff 0,#0029ff 88px,#4615ff 143px,#9300ff 200px,#ff00fe 276px,#ff00de 301px,#ff00c1 329px,#ff00a9 360px,#ff0092 396px)"></i>
<i style="margin-left:77px;width:394px;background:linear-gradient(90deg,#04f 0,#0127ff 88px,#4714ff 143px,#8f00ff 197px,#f0f 276px,#ff00df 301px,#ff00c3 328px,#f0a 359px,#ff0094 394px)"></i>
<i style="margin-left:78px;width:391px;background:linear-gradient(90deg,#0043ff 0,#0026ff 87px,#4613ff 142px,#8c00ff 195px,#f0f 277px,#ff00e0 301px,#ff00c4 328px,#ff00ac 358px,#ff0097 391px)"></i>
<i style="margin-left:79px;width:388px;background:linear-gradient(90deg,#0042ff 0,#0026ff 86px,#80f 192px,#fe00ff 277px,#ff00e0 302px,#ff00c6 327px,#ff00af 356px,#ff009a 388px)"></i>
<i style="margin-left:80px;width:386px;background:linear-gradient(90deg,#0040ff 0,#0025ff 85px,#3f13ff 136px,#8500ff 190px,#fe00ff 278px,#ff00e1 302px,#ff00c7 327px,#ff00b0 355px,#ff009c 386px)"></i>
<i style="margin-left:81px;width:383px;background:linear-gradient(90deg,#003fff 0,#0123ff 85px,#8100ff 187px,#fe00ff 278px,#ff00df 304px,#ff00c8 327px,#ff00b2 354px,#ff009e 383px)"></i>
<i style="margin-left:82px;width:380px;background:linear-gradient(90deg,#003eff 0,#0023ff 84px,#7d00ff 184px,#fe00ff 279px,#ff00e2 303px,#ff00ca 326px,#ff00b4 352px,#ff00a1 380px)"></i>
<i style="margin-left:83px;width:378px;background:linear-gradient(90deg,#003cff 0,#02f 83px,#7a00ff 182px,#fe00ff 280px,#ff00e3 303px,#f0c 325px,#ff00b7 350px,#ff00a3 378px)"></i>
<i style="margin-left:84px;width:375px;background:linear-gradient(90deg,#003bff 0,#0121ff 83px,#70f 179px,#f0f 281px,#ff00e5 302px,#ff00ce 324px,#ff00b9 348px,#ff00a6 375px)"></i>
<i style="margin-left:85px;width:372px;background:linear-gradient(90deg,#003aff 0,#0020ff 82px,#7300ff 176px,#fe00ff 281px,#ff00e3 304px,#ff00cf 324px,#f0b 347px,#ff00a9 372px)"></i>
<i style="margin-left:86px;width:370px;background:linear-gradient(90deg,#0038ff 0,#001fff 81px,#7000ff 174px,#b700ff 229px,#fe00ff 282px,#ff00e4 304px,#ff00d1 323px,#ff00be 345px,#ff00ab 370px)"></i>
<i style="margin-left:87px;width:367px;background:linear-gradient(90deg,#0037ff 0,#001eff 80px,#6d00ff 171px,#b400ff 227px,#fe00ff 283px,#ff00e7 303px,#ff00d3 322px,#ff00ae 367px)"></i>
<i style="margin-left:88px;width:364px;background:linear-gradient(90deg,#0036ff 0,#011dff 80px,#6900ff 168px,#b200ff 226px,#fe00ff 283px,#ff00d4 322px,#ff00b1 364px)"></i>
<i style="margin-left:89px;width:362px;background:linear-gradient(90deg,#0035ff 0,#001cff 79px,#6700ff 166px,#b200ff 226px,#fe00ff 284px,#ff00d6 321px,#ff00b3 362px)"></i>
<i style="margin-left:90px;width:359px;background:linear-gradient(90deg,#0034ff 0,#001cff 78px,#6300ff 163px,#b000ff 225px,#fe00ff 285px,#ff00d7 320px,#ff00b6 359px)"></i>
<i style="margin-left:91px;width:356px;background:linear-gradient(90deg,#0032ff 0,#011bff 78px,#6000ff 160px,#ad00ff 223px,#f0f 286px,#ff00d9 319px,#ff00ba 356px)"></i>
<i style="margin-left:92px;width:354px;background:linear-gradient(90deg,#0031ff 0,#011aff 77px,#5e00ff 158px,#a0f 221px,#f0f 287px,#ff00da 319px,#ff00bc 354px)"></i>
<i style="margin-left:93px;width:351px;background:linear-gradient(90deg,#0030ff 0,#0019ff 76px,#5a00ff 155px,#ab00ff 222px,#fe00ff 287px,#ff00dc 318px,#ff00bf 351px)"></i>
<i style="margin-left:94px;width:348px;background:linear-gradient(90deg,#002fff 0,#0018ff 75px,#5700ff 152px,#a900ff 220px,#f0f 288px,#ff00de 317px,#ff00c2 348px)"></i>
<i style="margin-left:95px;width:346px;background:linear-gradient(90deg,#002eff 0,#0117ff 75px,#50f 150px,#a700ff 219px,#f0f 289px,#ff00e0 316px,#ff00c5 346px)"></i>
<i style="margin-left:96px;width:343px;background:linear-gradient(90deg,#002dff 0,#0017ff 74px,#5200ff 147px,#a700ff 219px,#fe00ff 289px,#ff00e0 317px,#ff00c8 343px)"></i>
<i style="margin-left:97px;width:340px;background:linear-gradient(90deg,#002cff 0,#0016ff 73px,#4f00ff 144px,#a500ff 218px,#fe00ff 290px,#ff00e3 315px,#f0c 340px)"></i>
<i style="margin-left:99px;width:337px;background:linear-gradient(90deg,#002aff 0,#0015ff 71px,#4d00ff 141px,#a300ff 215px,#f0f 290px,#ff00e5 313px,#ff00ce 337px)"></i>
<i style="margin-left:100px;width:334px;background:linear-gradient(90deg,#0029ff 0,#0114ff 71px,#4a00ff 138px,#a200ff 215px,#fe00ff 290px,#ff00d2 334px)"></i>
<i style="margin-left:101px;width:331px;background:linear-gradient(90deg,#0028ff 0,#0014ff 70px,#4700ff 135px,#a100ff 214px,#fe00ff 291px,#ff00d5 331px)"></i>
<i style="margin-left:102px;width:329px;background:linear-gradient(90deg,#0027ff 0,#0013ff 69px,#4500ff 133px,#9f00ff 213px,#f0f 292px,#ff00d8 329px)"></i>
<i style="margin-left:103px;width:326px;background:linear-gradient(90deg,#0026ff 0,#0112ff 69px,#4200ff 130px,#9d00ff 211px,#f0f 293px,#ff00dc 326px)"></i>
<i style="margin-left:104px;width:323px;background:linear-gradient(90deg,#0025ff 0,#0012ff 68px,#3f00ff 127px,#9d00ff 211px,#fe00ff 293px,#ff00df 323px)"></i>
<i style="margin-left:105px;width:321px;background:linear-gradient(90deg,#0024ff 0,#01f 67px,#3d00ff 125px,#9c00ff 211px,#fe00ff 294px,#ff00e2 321px)"></i>
<i style="margin-left:106px;width:318px;background:linear-gradient(90deg,#0023ff 0,#0010ff 66px,#3a00ff 122px,#9a00ff 209px,#f0f 295px,#ff00e6 318px)"></i>
<i style="margin-left:107px;width:315px;background:linear-gradient(90deg,#02f 0,#0110ff 66px,#3800ff 119px,#90f 208px,#fe00ff 295px,#ff00ea 315px)"></i>
<i style="margin-left:108px;width:313px;background:linear-gradient(90deg,#0021ff 0,#000fff 65px,#3600ff 117px,#9800ff 208px,#fe00ff 296px,#ff00ed 313px)"></i>
<i style="margin-left:109px;width:310px;background:linear-gradient(90deg,#0020ff 0,#000eff 64px,#30f 114px,#9700ff 207px,#f0f 297px,#ff00f1 310px)"></i>
<i style="margin-left:111px;width:306px;background:linear-gradient(90deg,#001fff 0,#010eff 63px,#3200ff 111px,#9600ff 205px,#fe00ff 296px,#ff00f5 306px)"></i>
<i style="margin-left:112px;width:304px;background:linear-gradient(90deg,#001eff 0,#000dff 62px,#2f00ff 108px,#9500ff 204px,#fe00ff 297px,#ff00f8 304px)"></i>
<i style="margin-left:113px;width:301px;background:linear-gradient(90deg,#001dff 0,#000cff 61px,#2c00ff 105px,#9300ff 203px,#fe00ff 298px,#ff00fc 301px)"></i>
<i style="margin-left:114px;width:299px;background:linear-gradient(90deg,#001cff 0,#000cff 60px,#2b00ff 103px,#9200ff 202px,#f0f 299px)"></i>
<i style="margin-left:115px;width:296px;background:linear-gradient(90deg,#001bff 0,#010bff 60px,#2800ff 100px,#9000ff 200px,#fa00ff 296px)"></i>
<i style="margin-left:116px;width:293px;background:linear-gradient(90deg,#001bff 0,#000bff 59px,#2600ff 97px,#8d00ff 197px,#f600ff 293px)"></i>
<i style="margin-left:117px;width:291px;background:linear-gradient(90deg,#001aff 0,#000aff 58px,#2400ff 95px,#8a00ff 195px,#f300ff 291px)"></i>
<i style="margin-left:118px;width:288px;background:linear-gradient(90deg,#0019ff 0,#0109ff 58px,#20f 92px,#8700ff 192px,#ef00ff 288px)"></i>
<i style="margin-left:120px;width:284px;background:linear-gradient(90deg,#0018ff 0,#0109ff 56px,#1f00ff 88px,#8400ff 188px,#eb00ff 284px)"></i>
<i style="margin-left:121px;width:282px;background:linear-gradient(90deg,#0017ff 0,#0008ff 55px,#1e00ff 86px,#8200ff 186px,#e800ff 282px)"></i>
<i style="margin-left:122px;width:279px;background:linear-gradient(90deg,#0016ff 0,#0008ff 54px,#1c00ff 83px,#7f00ff 183px,#e400ff 279px)"></i>
<i style="margin-left:123px;width:276px;background:linear-gradient(90deg,#0015ff 0,#0107ff 54px,#1900ff 80px,#7c00ff 180px,#e000ff 276px)"></i>
<i style="margin-left:124px;width:274px;background:linear-gradient(90deg,#0014ff 0,#0006ff 53px,#1800ff 78px,#7a00ff 178px,#de00ff 274px)"></i>
<i style="margin-left:125px;width:271px;background:linear-gradient(90deg,#0014ff 0,#0006ff 52px,#1600ff 75px,#70f 175px,#da00ff 271px)"></i>
<i style="margin-left:127px;width:267px;background:linear-gradient(90deg,#0012ff 0,#0005ff 50px,#1300ff 71px,#7400ff 171px,#d600ff 267px)"></i>
<i style="margin-left:128px;width:265px;background:linear-gradient(90deg,#0012ff 0,#0105ff 50px,#1200ff 69px,#7200ff 169px,#d400ff 265px)"></i>
<i style="margin-left:129px;width:262px;background:linear-gradient(90deg,#01f 0,#0004ff 49px,#1000ff 66px,#6f00ff 166px,#d000ff 262px)"></i>
<i style="margin-left:130px;width:259px;background:linear-gradient(90deg,#0010ff 0,#0004ff 48px,#0e00ff 63px,#6c00ff 163px,#c0f 259px)"></i>
<i style="margin-left:132px;width:256px;background:linear-gradient(90deg,#000fff 0,#0103ff 47px,#0c00ff 60px,#6300ff 153px,#ca00ff 256px)"></i>
<i style="margin-left:133px;width:253px;background:linear-gradient(90deg,#000eff 0,#0003ff 46px,#0a00ff 57px,#6200ff 151px,#c600ff 253px)"></i>
<i style="margin-left:134px;width:250px;background:linear-gradient(90deg,#000eff 0,#0002ff 45px,#0800ff 54px,#6000ff 149px,#c300ff 250px)"></i>
<i style="margin-left:135px;width:248px;background:linear-gradient(90deg,#000dff 0,#0002ff 44px,#0700ff 52px,#5e00ff 147px,#c000ff 248px)"></i>
<i style="margin-left:137px;width:244px;background:linear-gradient(90deg,#000cff 0,#0101ff 43px,#5d00ff 145px,#bd00ff 244px)"></i>
<i style="margin-left:138px;width:241px;background:linear-gradient(90deg,#000bff 0,#0001ff 42px,#5c00ff 143px,#ba00ff 241px)"></i>
<i style="margin-left:139px;width:239px;background:linear-gradient(90deg,#000aff 0,#00f 41px,#5b00ff 142px,#b700ff 239px)"></i>
<i style="margin-left:140px;width:236px;background:linear-gradient(90deg,#000aff 0,#0100ff 41px,#5900ff 140px,#b400ff 236px)"></i>
<i style="margin-left:142px;width:232px;background:linear-gradient(90deg,#0009ff 0,#00f 39px,#5700ff 137px,#b100ff 232px)"></i>
<i style="margin-left:143px;width:230px;background:linear-gradient(90deg,#0008ff 0,#00f 38px,#5600ff 135px,#af00ff 230px)"></i>
<i style="margin-left:144px;width:227px;background:linear-gradient(90deg,#0007ff 0,#00f 37px,#5400ff 133px,#ac00ff 227px)"></i>
<i style="margin-left:146px;width:223px;background:linear-gradient(90deg,#0006ff 0,#00f 26px,#0100ff 36px,#5400ff 131px,#a800ff 223px)"></i>
<i style="margin-left:147px;width:221px;background:linear-gradient(90deg,#0006ff 0,#00f 24px,#00f 35px,#5200ff 129px,#a600ff 221px)"></i>
<i style="margin-left:148px;width:218px;background:linear-gradient(90deg,#0005ff 0,#00f 21px,#00f 34px,#5000ff 127px,#a300ff 218px)"></i>
<i style="margin-left:150px;width:214px;background:linear-gradient(90deg,#0004ff 0,#00f 17px,#00f 32px,#4e00ff 123px,#a000ff 214px)"></i>
<i style="margin-left:151px;width:212px;background:linear-gradient(90deg,#0004ff 0,#00f 15px,#0100ff 32px,#4e00ff 123px,#9e00ff 212px)"></i>
<i style="margin-left:152px;width:209px;background:linear-gradient(90deg,#0003ff 0,#00f 12px,#00f 31px,#4d00ff 121px,#9b00ff 209px)"></i>
<i style="margin-left:154px;width:205px;background:linear-gradient(90deg,#0002ff 0,#00f 29px,#4b00ff 118px,#9800ff 205px)"></i>
<i style="margin-left:155px;width:203px;background:linear-gradient(90deg,#0001ff 0,#0100ff 29px,#4b00ff 117px,#9600ff 203px)"></i>
<i style="margin-left:156px;width:200px;background:linear-gradient(90deg,#0001ff 0,#00f 28px,#4900ff 115px,#9400ff 200px)"></i>
<i style="margin-left:158px;width:196px;background:linear-gradient(90deg,#00f 0,#00f 26px,#4800ff 112px,#9100ff 196px)"></i>
<i style="margin-left:159px;width:194px;background:linear-gradient(90deg,#00f 0,#00f 25px,#4600ff 110px,#8f00ff 194px)"></i>
<i style="margin-left:161px;width:190px;background:linear-gradient(90deg,#00f 0,#0100ff 24px,#4600ff 108px,#8c00ff 190px)"></i>
<i style="margin-left:162px;width:187px;background:linear-gradient(90deg,#00f 0,#00f 23px,#8900ff 187px)"></i>
<i style="margin-left:164px;width:184px;background:linear-gradient(90deg,#00f 0,#00f 21px,#80f 184px)"></i>
<i style="margin-left:165px;width:181px;background:linear-gradient(90deg,#00f 0,#0100ff 21px,#8500ff 181px)"></i>
<i style="margin-left:167px;width:177px;background:linear-gradient(90deg,#00f 0,#00f 19px,#8200ff 177px)"></i>
<i style="margin-left:168px;width:175px;background:linear-gradient(90deg,#00f 0,#00f 18px,#8100ff 175px)"></i>
<i style="margin-left:170px;width:171px;background:linear-gradient(90deg,#00f 0,#00f 16px,#7e00ff 171px)"></i>
<i style="margin-left:171px;width:168px;background:linear-gradient(90deg,#00f 0,#0100ff 16px,#7b00ff 168px)"></i>
<i style="margin-left:173px;width:165px;background:linear-gradient(90deg,#00f 0,#00f 14px,#7a00ff 165px)"></i>
<i style="margin-left:174px;width:162px;background:linear-gradient(90deg,#00f 0,#00f 13px,#70f 162px)"></i>
<i style="margin-left:176px;width:158px;background:linear-gradient(90deg,#00f 0,#0100ff 12px,#7500ff 158px)"></i>
<i style="margin-left:178px;width:155px;background:linear-gradient(90deg,#00f 0,#00f 10px,#7300ff 155px)"></i>
<i style="margin-left:179px;width:152px;background:linear-gradient(90deg,#00f 0,#00f 9px,#7100ff 152px)"></i>
<i style="margin-left:181px;width:149px;background:linear-gradient(90deg,#00f 0,#00f 7px,#6f00ff 149px)"></i>
<i style="margin-left:182px;width:146px;background:linear-gradient(90deg,#00f 0,#0100ff 7px,#6d00ff 146px)"></i>
<i style="margin-left:184px;width:142px;background:linear-gradient(90deg,#00f 0,#00f 5px,#0600ff 12px,#6b00ff 142px)"></i>
<i style="margin-left:186px;width:139px;background:linear-gradient(90deg,#00f 0,#00f 3px,#1700ff 33px,#6900ff 139px)"></i>
<i style="margin-left:188px;width:135px;background:linear-gradient(90deg,#00f 0,#6700ff 135px)"></i>
<i style="margin-left:189px;width:132px;background:linear-gradient(90deg,#00f 0,#6400ff 132px)"></i>
<i style="margin-left:191px;width:129px;background:linear-gradient(90deg,#0100ff 0,#6300ff 129px)"></i>
<i style="margin-left:193px;width:125px;background:linear-gradient(90deg,#0200ff 0,#6100ff 125px)"></i>
<i style="margin-left:195px;width:121px;background:linear-gradient(90deg,#0400ff 0,#5e00ff 121px)"></i>
<i style="margin-left:197px;width:118px;background:linear-gradient(90deg,#0500ff 0,#5d00ff 118px)"></i>
<i style="margin-left:199px;width:114px;background:linear-gradient(90deg,#0600ff 0,#5b00ff 114px)"></i>
<i style="margin-left:201px;width:110px;background:linear-gradient(90deg,#0700ff 0,#5900ff 110px)"></i>
<i style="margin-left:203px;width:107px;background:linear-gradient(90deg,#0800ff 0,#5700ff 107px)"></i>
<i style="margin-left:205px;width:103px;background:linear-gradient(90deg,#0a00ff 0,#50f 103px)"></i>
<i style="margin-left:206px;width:100px;background:linear-gradient(90deg,#0a00ff 0,#5300ff 100px)"></i>
<i style="margin-left:209px;width:96px;background:linear-gradient(90deg,#0c00ff 0,#5200ff 96px)"></i>
<i style="margin-left:211px;width:92px;background:linear-gradient(90deg,#0d00ff 0,#5000ff 92px)"></i>
<i style="margin-left:213px;width:88px;background:linear-gradient(90deg,#0e00ff 0,#4e00ff 88px)"></i>
<i style="margin-left:215px;width:85px;background:linear-gradient(90deg,#0f00ff 0,#4d00ff 85px)"></i>
<i style="margin-left:217px;width:81px;background:linear-gradient(90deg,#10f 0,#4b00ff 81px)"></i>
<i style="margin-left:219px;width:77px;background:linear-gradient(90deg,#1200ff 0,#4900ff 77px)"></i>
<i style="margin-left:221px;width:74px;background:linear-gradient(90deg,#1300ff 0,#4700ff 74px)"></i>
<i style="margin-left:223px;width:70px;background:linear-gradient(90deg,#1400ff 0,#4500ff 70px)"></i>
<i style="margin-left:225px;width:66px;background:linear-gradient(90deg,#1500ff 0,#4300ff 66px)"></i>
<i style="margin-left:227px;width:63px;background:linear-gradient(90deg,#1600ff 0,#4200ff 63px)"></i>
<i style="margin-left:229px;width:59px;background:linear-gradient(90deg,#1700ff 0,#4000ff 59px)"></i>
<i style="margin-left:231px;width:55px;background:linear-gradient(90deg,#1800ff 0,#3e00ff 55px)"></i>
<i style="margin-left:233px;width:52px;background:linear-gradient(90deg,#1900ff 0,#3d00ff 52px)"></i>
<i style="margin-left:235px;width:48px;background:linear-gradient(90deg,#1b00ff 0,#3c00ff 48px)"></i>
<i style="margin-left:237px;width:44px;background:linear-gradient(90deg,#1c00ff 0,#3a00ff 44px)"></i>
<i style="margin-left:239px;width:41px;background:linear-gradient(90deg,#1d00ff 0,#3900ff 41px)"></i>
<i style="margin-left:241px;width:37px;background:linear-gradient(90deg,#1e00ff 0,#3700ff 37px)"></i>
<i style="margin-left:243px;width:33px;background:linear-gradient(90deg,#1f00ff 0,#3500ff 33px)"></i>
<i style="margin-left:245px;width:30px;background:linear-gradient(90deg,#2000ff 0,#3400ff 30px)"></i>
<i style="margin-left:247px;width:26px;background:linear-gradient(90deg,#2100ff 0,#3200ff 26px)"></i>
<i style="margin-left:250px;width:21px;background:linear-gradient(90deg,#20f 0,#3000ff 21px)"></i>
<i style="margin-left:252px;width:18px;background:linear-gradient(90deg,#2300ff 0,#2f00ff 18px)"></i>
<i style="margin-left:254px;width:14px;background:linear-gradient(90deg,#2400ff 0,#2e00ff 14px)"></i>
<i style="margin-left:257px;width:9px;background:linear-gradient(90deg,#2600ff 0,#2c00ff 9px)"></i>
</div>
<svg class="ov" width="618" height="556" viewBox="0 0 618 556"><path fill="#000" fill-opacity="0.40" fill-rule="evenodd" d="M264.5 542.6 618.0 116.6 618.0 82.0 202.6 26.0 148.2 18.9 111.9 14.5 94.2 12.7 78.0 11.4 62.8 10.7 51.0 10.6 39.3 11.0 30.8 11.8 22.9 13.5 17.9 15.5 13.3 18.3 11.2 20.0 9.1 22.2 7.3 24.5 4.2 29.7 2.9 32.8 0.9 39.8 0.0 45.5 0.0 68.0 0.7 74.2 2.7 87.7 5.9 103.2 7.9 111.8 12.9 130.7 19.3 151.9 27.1 175.0 36.0 199.8 46.2 225.8 51.8 239.1 63.9 266.0 76.8 292.8 90.0 318.9 103.2 344.0 116.2 367.5 128.8 389.0 140.7 408.3 152.1 425.6 162.8 440.9 172.2 453.6 184.3 468.5 194.9 480.5 207.6 493.6 247.7 532.9 255.4 539.9 258.2 542.1 260.1 543.1 262.7 543.3ZM463.6 70.0 77.7 21.0 180.3 408.6Z"/>
<rect x="70.5" y="12.9" width="13.0" height="15.0" fill="none" stroke="#fff" stroke-opacity="0.88" stroke-width="1.6"/>
<rect x="202.0" y="29.7" width="13.0" height="15.0" fill="none" stroke="#fff" stroke-opacity="0.88" stroke-width="1.6"/>
<rect x="228.4" y="38.8" width="13.0" height="15.0" fill="none" stroke="#fff" stroke-opacity="0.88" stroke-width="1.6"/>
<rect x="183.4" y="41.9" width="13.0" height="15.0" fill="none" stroke="#fff" stroke-opacity="0.88" stroke-width="1.6"/>
<rect x="143.9" y="50.8" width="13.0" height="15.0" fill="none" stroke="#fff" stroke-opacity="0.88" stroke-width="1.6"/>
<rect x="178.4" y="66.9" width="13.0" height="15.0" fill="none" stroke="#fff" stroke-opacity="0.88" stroke-width="1.6"/>
<rect x="150.8" y="106.9" width="13.0" height="15.0" fill="none" stroke="#fff" stroke-opacity="0.88" stroke-width="1.6"/>
<rect x="101.9" y="132.1" width="13.0" height="15.0" fill="none" stroke="#fff" stroke-opacity="0.88" stroke-width="1.6"/>
<rect x="132.5" y="164.0" width="13.0" height="15.0" fill="none" stroke="#fff" stroke-opacity="0.88" stroke-width="1.6"/>
<rect x="171.9" y="156.1" width="13.0" height="15.0" fill="none" stroke="#fff" stroke-opacity="0.88" stroke-width="1.6"/>
<rect x="191.5" y="163.1" width="13.0" height="15.0" fill="none" stroke="#fff" stroke-opacity="0.88" stroke-width="1.6"/>
<rect x="228.5" y="189.0" width="13.0" height="15.0" fill="none" stroke="#fff" stroke-opacity="0.88" stroke-width="1.6"/>
<rect x="174.6" y="223.1" width="13.0" height="15.0" fill="none" stroke="#fff" stroke-opacity="0.88" stroke-width="1.6"/>
<rect x="175.9" y="285.0" width="13.0" height="15.0" fill="none" stroke="#fff" stroke-opacity="0.88" stroke-width="1.6"/>
<rect x="286.6" y="156.0" width="13.0" height="15.0" fill="none" stroke="#fff" stroke-opacity="0.88" stroke-width="1.6"/>
<rect x="327.5" y="216.9" width="13.0" height="15.0" fill="none" stroke="#fff" stroke-opacity="0.88" stroke-width="1.6"/>
<rect x="320.9" y="98.9" width="13.0" height="15.0" fill="none" stroke="#fff" stroke-opacity="0.88" stroke-width="1.6"/>
<rect x="387.9" y="83.9" width="13.0" height="15.0" fill="none" stroke="#fff" stroke-opacity="0.88" stroke-width="1.6"/>
<rect x="456.5" y="62.0" width="13.0" height="15.0" fill="none" stroke="#fff" stroke-opacity="0.88" stroke-width="1.6"/>
<rect x="257.6" y="44.9" width="13.0" height="15.0" fill="none" stroke="#fff" stroke-opacity="0.88" stroke-width="1.6"/>
<rect x="233.5" y="78.6" width="13.0" height="15.0" fill="none" stroke="#fff" stroke-opacity="0.80" stroke-width="1.6"/>
<rect x="232.3" y="90.0" width="13.0" height="15.0" fill="none" stroke="#fff" stroke-opacity="0.80" stroke-width="1.6"/>
<rect x="230.3" y="88.0" width="13.0" height="15.0" fill="none" stroke="#fff" stroke-opacity="0.80" stroke-width="1.6"/>
<rect x="246.7" y="79.9" width="13.0" height="15.0" fill="none" stroke="#fff" stroke-opacity="0.80" stroke-width="1.6"/>
<rect x="251.0" y="67.3" width="13.0" height="15.0" fill="none" stroke="#fff" stroke-opacity="0.80" stroke-width="1.6"/>
<rect x="253.5" y="78.0" width="13.0" height="15.0" fill="none" stroke="#fff" stroke-opacity="0.80" stroke-width="1.6"/>
<rect x="261.7" y="76.7" width="13.0" height="15.0" fill="none" stroke="#fff" stroke-opacity="0.80" stroke-width="1.6"/>
<rect x="266.7" y="60.4" width="13.0" height="15.0" fill="none" stroke="#fff" stroke-opacity="0.80" stroke-width="1.6"/>
<rect x="278.6" y="58.5" width="13.0" height="15.0" fill="none" stroke="#fff" stroke-opacity="0.80" stroke-width="1.6"/>
<rect x="293.1" y="62.9" width="13.0" height="15.0" fill="none" stroke="#fff" stroke-opacity="0.80" stroke-width="1.6"/>
<rect x="299.6" y="50.9" width="13.0" height="15.0" fill="none" stroke="#fff" stroke-opacity="0.80" stroke-width="1.6"/>
<rect x="302.5" y="52.9" width="13.0" height="15.0" fill="none" stroke="#fff" stroke-opacity="0.80" stroke-width="1.6"/>
<rect x="273.0" y="75.5" width="13.0" height="15.0" fill="none" stroke="#fff" stroke-opacity="0.80" stroke-width="1.6"/>
<rect x="265.5" y="70.5" width="13.0" height="15.0" fill="none" stroke="#fff" stroke-opacity="0.80" stroke-width="1.6"/>
<rect x="244.1" y="75.5" width="13.0" height="15.0" fill="none" stroke="#fff" stroke-opacity="0.80" stroke-width="1.6"/>
<rect x="247.9" y="81.7" width="13.0" height="15.0" fill="none" stroke="#fff" stroke-opacity="0.80" stroke-width="1.6"/>
<rect x="271.7" y="66.7" width="13.0" height="15.0" fill="none" stroke="#fff" stroke-opacity="0.80" stroke-width="1.6"/>
<rect x="173.0" y="402.0" width="13.0" height="15.0" fill="none" stroke="#fff" stroke-opacity="0.95" stroke-width="1.6"/>
<rect x="195.8" y="113.2" width="12.4" height="14.4" fill="none" stroke="#000" stroke-opacity="1.00" stroke-width="2.6"/>
<ellipse cx="72.8" cy="20.4" rx="4.2" ry="4.7" fill="#00f000" stroke="#000" stroke-width="1.2"/>
<ellipse cx="208.3" cy="37.2" rx="4.2" ry="4.7" fill="#f8f000" stroke="#000" stroke-width="1.2"/>
<ellipse cx="234.9" cy="46.7" rx="4.2" ry="4.7" fill="#d8b840" stroke="#000" stroke-width="1.2"/>
<ellipse cx="188.9" cy="49.4" rx="4.2" ry="4.7" fill="#a8b060" stroke="#000" stroke-width="1.2"/>
<ellipse cx="149.4" cy="58.8" rx="4.2" ry="4.7" fill="#7a9458" stroke="#000" stroke-width="1.2"/>
<ellipse cx="183.5" cy="74.3" rx="4.2" ry="4.7" fill="#6e7850" stroke="#000" stroke-width="1.2"/>
<ellipse cx="156.0" cy="113.0" rx="4.2" ry="4.7" fill="#90b8a8" stroke="#000" stroke-width="1.2"/>
<ellipse cx="104.5" cy="139.5" rx="4.2" ry="4.7" fill="#00f8f8" stroke="#000" stroke-width="1.2"/>
<ellipse cx="137.6" cy="171.5" rx="4.2" ry="4.7" fill="#5a8aa8" stroke="#000" stroke-width="1.2"/>
<ellipse cx="178.4" cy="164.0" rx="4.2" ry="4.7" fill="#7080a8" stroke="#000" stroke-width="1.2"/>
<ellipse cx="199.3" cy="171.4" rx="4.2" ry="4.7" fill="#9090b8" stroke="#000" stroke-width="1.2"/>
<ellipse cx="234.9" cy="193.3" rx="4.2" ry="4.7" fill="#5a4868" stroke="#000" stroke-width="1.2"/>
<ellipse cx="181.0" cy="230.6" rx="4.2" ry="4.7" fill="#6068b0" stroke="#000" stroke-width="1.2"/>
<ellipse cx="183.3" cy="289.3" rx="4.2" ry="4.7" fill="#485098" stroke="#000" stroke-width="1.2"/>
<ellipse cx="296.9" cy="165.5" rx="4.2" ry="4.7" fill="#b868a0" stroke="#000" stroke-width="1.2"/>
<ellipse cx="341.4" cy="227.2" rx="4.2" ry="4.7" fill="#f000f0" stroke="#000" stroke-width="1.2"/>
<ellipse cx="329.9" cy="106.4" rx="4.2" ry="4.7" fill="#b86070" stroke="#000" stroke-width="1.2"/>
<ellipse cx="391.4" cy="91.5" rx="4.2" ry="4.7" fill="#a84048" stroke="#000" stroke-width="1.2"/>
<ellipse cx="473.7" cy="68.5" rx="4.2" ry="4.7" fill="#f00000" stroke="#000" stroke-width="1.2"/>
<ellipse cx="265.3" cy="52.4" rx="4.2" ry="4.7" fill="#d0a040" stroke="#000" stroke-width="1.2"/>
<ellipse cx="241.6" cy="98.3" rx="4.2" ry="4.7" fill="#c8a888" stroke="#000" stroke-width="1.2"/>
<ellipse cx="240.6" cy="96.1" rx="4.2" ry="4.7" fill="#f0c8a8" stroke="#000" stroke-width="1.2"/>
<ellipse cx="240.4" cy="85.1" rx="4.2" ry="4.7" fill="#f0c8a0" stroke="#000" stroke-width="1.2"/>
<ellipse cx="252.1" cy="89.9" rx="4.2" ry="4.7" fill="#9a7050" stroke="#000" stroke-width="1.2"/>
<ellipse cx="253.4" cy="84.9" rx="4.2" ry="4.7" fill="#c89878" stroke="#000" stroke-width="1.2"/>
<ellipse cx="259.4" cy="87.4" rx="4.2" ry="4.7" fill="#c09070" stroke="#000" stroke-width="1.2"/>
<ellipse cx="260.1" cy="75.4" rx="4.2" ry="4.7" fill="#c89870" stroke="#000" stroke-width="1.2"/>
<ellipse cx="260.1" cy="83.6" rx="4.2" ry="4.7" fill="#d0a078" stroke="#000" stroke-width="1.2"/>
<ellipse cx="269.2" cy="85.5" rx="4.2" ry="4.7" fill="#c89070" stroke="#000" stroke-width="1.2"/>
<ellipse cx="274.2" cy="69.2" rx="4.2" ry="4.7" fill="#8a6040" stroke="#000" stroke-width="1.2"/>
<ellipse cx="283.3" cy="68.2" rx="4.2" ry="4.7" fill="#805838" stroke="#000" stroke-width="1.2"/>
<ellipse cx="294.6" cy="71.3" rx="4.2" ry="4.7" fill="#6a4830" stroke="#000" stroke-width="1.2"/>
<ellipse cx="282.6" cy="76.7" rx="4.2" ry="4.7" fill="#c8a070" stroke="#000" stroke-width="1.2"/>
<ellipse cx="277.6" cy="77.7" rx="4.2" ry="4.7" fill="#d8a078" stroke="#000" stroke-width="1.2"/>
<ellipse cx="284.8" cy="82.3" rx="4.2" ry="4.7" fill="#e8a080" stroke="#000" stroke-width="1.2"/>
<ellipse cx="308.4" cy="61.6" rx="4.2" ry="4.7" fill="#a06838" stroke="#000" stroke-width="1.2"/>
<ellipse cx="310.6" cy="58.1" rx="4.2" ry="4.7" fill="#b88848" stroke="#000" stroke-width="1.2"/>
<ellipse cx="201.9" cy="120.3" rx="4.2" ry="4.7" fill="#a0a0a0" stroke="#000" stroke-width="1.2"/>
<ellipse cx="184.9" cy="151.4" rx="4.9" ry="5.5" fill="#000" stroke="#000" stroke-width="1.2"/>
<ellipse cx="181.0" cy="420.8" rx="4.2" ry="4.7" fill="#0000f0" stroke="#0000b0" stroke-width="0.8"/>
<defs><linearGradient id="ig" x1="0" y1="0" x2="1" y2="1"><stop offset="0" stop-color="#ff8e2a"/><stop offset="1" stop-color="#ff4428"/></linearGradient><clipPath id="ic"><rect x="420.0" y="362.0" width="191.5" height="147.5"/></clipPath></defs>
<rect x="416.0" y="358.0" width="199.5" height="155.5" fill="#262626"/>
<rect x="420.0" y="362.0" width="191.5" height="147.5" fill="url(#ig)" stroke="#8a8a8a" stroke-width="1.3"/>
<g clip-path="url(#ic)">
<rect x="447.9" y="400.1" width="13.0" height="15.0" fill="none" stroke="#fff" stroke-opacity="0.90" stroke-width="1.6"/>
<rect x="564.0" y="375.0" width="13.0" height="15.0" fill="none" stroke="#fff" stroke-opacity="0.90" stroke-width="1.6"/>
<rect x="509.0" y="427.1" width="13.0" height="15.0" fill="none" stroke="#fff" stroke-opacity="0.90" stroke-width="1.6"/>
<rect x="524.4" y="440.0" width="13.0" height="15.0" fill="none" stroke="#fff" stroke-opacity="0.90" stroke-width="1.6"/>
<rect x="422.8" y="445.9" width="13.0" height="15.0" fill="none" stroke="#fff" stroke-opacity="0.90" stroke-width="1.6"/>
<rect x="432.6" y="456.9" width="13.0" height="15.0" fill="none" stroke="#fff" stroke-opacity="0.90" stroke-width="1.6"/>
<rect x="433.1" y="465.7" width="13.0" height="15.0" fill="none" stroke="#fff" stroke-opacity="0.90" stroke-width="1.6"/>
<rect x="505.9" y="470.7" width="13.0" height="15.0" fill="none" stroke="#fff" stroke-opacity="0.90" stroke-width="1.6"/>
<ellipse cx="466.6" cy="408.3" rx="4.2" ry="4.7" fill="#c89860" stroke="#000" stroke-width="1.2"/>
<ellipse cx="566.3" cy="387.0" rx="4.2" ry="4.7" fill="#8a6038" stroke="#000" stroke-width="1.2"/>
<ellipse cx="608.1" cy="397.3" rx="4.2" ry="4.7" fill="#7a5a38" stroke="#000" stroke-width="1.2"/>
<ellipse cx="532.2" cy="437.8" rx="4.2" ry="4.7" fill="#d09868" stroke="#000" stroke-width="1.2"/>
<ellipse cx="545.6" cy="447.5" rx="4.2" ry="4.7" fill="#c89060" stroke="#000" stroke-width="1.2"/>
<ellipse cx="423.7" cy="453.5" rx="4.2" ry="4.7" fill="#b08050" stroke="#000" stroke-width="1.2"/>
<ellipse cx="449.5" cy="453.4" rx="4.2" ry="4.7" fill="#e8b088" stroke="#000" stroke-width="1.2"/>
<ellipse cx="452.1" cy="467.6" rx="4.2" ry="4.7" fill="#c08860" stroke="#000" stroke-width="1.2"/>
<ellipse cx="453.2" cy="477.6" rx="4.2" ry="4.7" fill="#a87850" stroke="#000" stroke-width="1.2"/>
<ellipse cx="539.1" cy="476.3" rx="4.2" ry="4.7" fill="#e0a078" stroke="#000" stroke-width="1.2"/>
</g>
</svg></div>
<span class="t" style="left:981.88px;top:620.00px;font-size:17.00px;transform:scaleX(0.8500);color:#d8d8d8;">0</span>
<span class="t" style="left:971.56px;top:600.00px;font-size:17.00px;transform:scaleX(0.8500);color:#d8d8d8;">0</span>
<span class="t" style="left:1023.29px;top:620.00px;font-size:17.00px;transform:scaleX(0.8500);color:#d8d8d8;">0,05</span>
<span class="t" style="left:951.48px;top:554.00px;font-size:17.00px;transform:scaleX(0.8500);color:#d8d8d8;">0,05</span>
<span class="t" style="left:1078.76px;top:620.00px;font-size:17.00px;transform:scaleX(0.8500);color:#d8d8d8;">0,1</span>
<span class="t" style="left:959.51px;top:507.00px;font-size:17.00px;transform:scaleX(0.8500);color:#d8d8d8;">0,1</span>
<span class="t" style="left:1126.19px;top:620.00px;font-size:17.00px;transform:scaleX(0.8500);color:#d8d8d8;">0,15</span>
<span class="t" style="left:951.48px;top:461.00px;font-size:17.00px;transform:scaleX(0.8500);color:#d8d8d8;">0,15</span>
<span class="t" style="left:1181.66px;top:620.00px;font-size:17.00px;transform:scaleX(0.8500);color:#d8d8d8;">0,2</span>
<span class="t" style="left:959.51px;top:415.00px;font-size:17.00px;transform:scaleX(0.8500);color:#d8d8d8;">0,2</span>
<span class="t" style="left:1229.09px;top:620.00px;font-size:17.00px;transform:scaleX(0.8500);color:#d8d8d8;">0,25</span>
<span class="t" style="left:951.48px;top:368.00px;font-size:17.00px;transform:scaleX(0.8500);color:#d8d8d8;">0,25</span>
<span class="t" style="left:1284.56px;top:620.00px;font-size:17.00px;transform:scaleX(0.8500);color:#d8d8d8;">0,3</span>
<span class="t" style="left:959.51px;top:322.00px;font-size:17.00px;transform:scaleX(0.8500);color:#d8d8d8;">0,3</span>
<span class="t" style="left:1331.99px;top:620.00px;font-size:17.00px;transform:scaleX(0.8500);color:#d8d8d8;">0,35</span>
<span class="t" style="left:951.48px;top:275.00px;font-size:17.00px;transform:scaleX(0.8500);color:#d8d8d8;">0,35</span>
<span class="t" style="left:1387.46px;top:620.00px;font-size:17.00px;transform:scaleX(0.8500);color:#d8d8d8;">0,4</span>
<span class="t" style="left:959.51px;top:229.00px;font-size:17.00px;transform:scaleX(0.8500);color:#d8d8d8;">0,4</span>
<span class="t" style="left:1434.89px;top:620.00px;font-size:17.00px;transform:scaleX(0.8500);color:#d8d8d8;">0,45</span>
<span class="t" style="left:951.48px;top:183.00px;font-size:17.00px;transform:scaleX(0.8500);color:#d8d8d8;">0,45</span>
<span class="t" style="left:1490.36px;top:620.00px;font-size:17.00px;transform:scaleX(0.8500);color:#d8d8d8;">0,5</span>
<span class="t" style="left:959.51px;top:136.00px;font-size:17.00px;transform:scaleX(0.8500);color:#d8d8d8;">0,5</span>
<span class="t" style="left:1537.79px;top:620.00px;font-size:17.00px;transform:scaleX(0.8500);color:#d8d8d8;">0,55</span>
<span class="t" style="left:951.48px;top:90.00px;font-size:17.00px;transform:scaleX(0.8500);color:#d8d8d8;">0,55</span>
<svg style="left:0;top:0" width="1612" height="660"><rect x="986.6" y="50.5" width="619" height="557" fill="none" stroke="#a0a0a0" stroke-width="1.4"/><rect x="986" y="606.9" width="620" height="1.6" fill="#b8b8b8"/><rect x="985.10" y="608.3" width="1.6" height="6.6" fill="#d0d0d0"/><rect x="980.2" y="606.70" width="4.800" height="1.6" fill="#d0d0d0"/><rect x="1036.55" y="608.3" width="1.6" height="6.6" fill="#d0d0d0"/><rect x="980.2" y="560.31" width="4.800" height="1.6" fill="#d0d0d0"/><rect x="1088.00" y="608.3" width="1.6" height="6.6" fill="#d0d0d0"/><rect x="980.2" y="513.92" width="4.800" height="1.6" fill="#d0d0d0"/><rect x="1139.45" y="608.3" width="1.6" height="6.6" fill="#d0d0d0"/><rect x="980.2" y="467.53" width="4.800" height="1.6" fill="#d0d0d0"/><rect x="1190.90" y="608.3" width="1.6" height="6.6" fill="#d0d0d0"/><rect x="980.2" y="421.14" width="4.800" height="1.6" fill="#d0d0d0"/><rect x="1242.35" y="608.3" width="1.6" height="6.6" fill="#d0d0d0"/><rect x="980.2" y="374.75" width="4.800" height="1.6" fill="#d0d0d0"/><rect x="1293.80" y="608.3" width="1.6" height="6.6" fill="#d0d0d0"/><rect x="980.2" y="328.36" width="4.800" height="1.6" fill="#d0d0d0"/><rect x="1345.25" y="608.3" width="1.6" height="6.6" fill="#d0d0d0"/><rect x="980.2" y="281.97" width="4.800" height="1.6" fill="#d0d0d0"/><rect x="1396.70" y="608.3" width="1.6" height="6.6" fill="#d0d0d0"/><rect x="980.2" y="235.58" width="4.800" height="1.6" fill="#d0d0d0"/><rect x="1448.15" y="608.3" width="1.6" height="6.6" fill="#d0d0d0"/><rect x="980.2" y="189.19" width="4.800" height="1.6" fill="#d0d0d0"/><rect x="1499.60" y="608.3" width="1.6" height="6.6" fill="#d0d0d0"/><rect x="980.2" y="142.80" width="4.800" height="1.6" fill="#d0d0d0"/><rect x="1551.05" y="608.3" width="1.6" height="6.6" fill="#d0d0d0"/><rect x="980.2" y="96.41" width="4.800" height="1.6" fill="#d0d0d0"/></svg>
<div class="a" style="left:1357.00px;top:571.50px;width:246.00px;height:31.50px;background:#2f2f2f;"></div>
<span class="t" style="left:1358.00px;top:577.00px;font-size:21.60px;transform:scaleX(0.8862);color:#f4f4f4;">RGB Triplet: 199, 140, 97</span>
<div class="a tb" style="left:311px;top:666px;width:1301px;height:255.2px">
<div class="a" style="left:0;top:0;width:100%;height:27.8px;background:linear-gradient(#2d2d2d 0,#2b2b2b 50%,#1d1d1d 52%,#1a1a1a 100%)"></div>
<div class="a" style="left:0;top:0;width:8px;height:27.8px;background:#000"></div>
<span class="t c" style="left:74.75px;top:6.00px;font-size:15.20px;transform:scaleX(0.5500);color:#ececec;">White</span>
<span class="t c" style="left:107.75px;top:6.00px;font-size:15.20px;transform:scaleX(0.5500);color:#ececec;">Gray 80</span>
<span class="t c" style="left:142.00px;top:6.00px;font-size:15.20px;transform:scaleX(0.5500);color:#ececec;">Gray 65</span>
<span class="t c" style="left:176.50px;top:6.00px;font-size:15.20px;transform:scaleX(0.5500);color:#ececec;">Gray 50</span>
<span class="t c" style="left:210.50px;top:6.00px;font-size:15.20px;transform:scaleX(0.5500);color:#ececec;">Gray 35</span>
<span class="t c" style="left:244.50px;top:6.00px;font-size:15.20px;transform:scaleX(0.5500);color:#ececec;">Black</span>
<span class="t c" style="left:272.75px;top:6.00px;font-size:15.20px;transform:scaleX(0.5500);color:#ececec;">Dark Skin</span>
<span class="t c" style="left:313.50px;top:6.00px;font-size:15.20px;transform:scaleX(0.5500);color:#ececec;">Light Skin</span>
<span class="t c" style="left:355.00px;top:6.00px;font-size:15.20px;transform:scaleX(0.5500);color:#ececec;">Blue Sky</span>
<span class="t c" style="left:391.30px;top:6.00px;font-size:15.20px;transform:scaleX(0.5500);color:#ececec;">Foliage</span>
<span class="t c" style="left:423.60px;top:6.00px;font-size:15.20px;transform:scaleX(0.5500);color:#ececec;">Blue Flower</span>
<span class="t c" style="left:474.00px;top:6.00px;font-size:15.20px;transform:scaleX(0.5500);color:#ececec;">Bluish Green</span>
<span class="t c" style="left:527.60px;top:6.00px;font-size:15.20px;transform:scaleX(0.5500);color:#ececec;">Orange</span>
<span class="t c" style="left:560.70px;top:6.00px;font-size:15.20px;transform:scaleX(0.5500);color:#ececec;">Purplish Blue</span>
<span class="t c" style="left:616.00px;top:6.00px;font-size:15.20px;transform:scaleX(0.5500);color:#ececec;">Moderate Red</span>
<span class="t c" style="left:675.30px;top:6.00px;font-size:15.20px;transform:scaleX(0.5500);color:#ececec;">Purple</span>
<span class="t c" style="left:705.60px;top:6.00px;font-size:15.20px;transform:scaleX(0.5500);color:#ececec;">Yellow Green</span>
<span class="t c" style="left:760.60px;top:6.00px;font-size:15.20px;transform:scaleX(0.5500);color:#ececec;">Orange Yellow</span>
<span class="t c" style="left:820.00px;top:6.00px;font-size:15.20px;transform:scaleX(0.5500);color:#ececec;">Blue</span>
<span class="t c" style="left:848.00px;top:6.00px;font-size:15.20px;transform:scaleX(0.5500);color:#ececec;">Green</span>
<span class="t c" style="left:876.70px;top:6.00px;font-size:15.20px;transform:scaleX(0.5500);color:#ececec;">Red</span>
<span class="t c" style="left:904.70px;top:6.00px;font-size:15.20px;transform:scaleX(0.5500);color:#ececec;">Yellow</span>
<span class="t c" style="left:937.80px;top:6.00px;font-size:15.20px;transform:scaleX(0.5500);color:#ececec;">Magenta</span>
<span class="t c" style="left:976.70px;top:6.00px;font-size:15.20px;transform:scaleX(0.5500);color:#ececec;">Cyan</span>
<span class="t c" style="left:1005.00px;top:6.00px;font-size:15.20px;transform:scaleX(0.5500);color:#ececec;">100% Red</span>
<span class="t c" style="left:1047.90px;top:6.00px;font-size:15.20px;transform:scaleX(0.5500);color:#ececec;">100% Green</span>
<span class="t c" style="left:1099.00px;top:6.00px;font-size:15.20px;transform:scaleX(0.5500);color:#ececec;">100% Blue</span>
<span class="t c" style="left:1144.50px;top:6.00px;font-size:15.20px;transform:scaleX(0.5500);color:#ececec;">100% Cyan</span>
<span class="t c" style="left:1191.50px;top:6.00px;font-size:15.20px;transform:scaleX(0.5500);color:#ececec;">100% Magenta</span>
<span class="t c" style="left:1253.80px;top:6.00px;font-size:15.20px;transform:scaleX(0.5500);color:#ececec;">100% Yellow</span>
<div class="a" style="left:0;top:27.8px;width:100%;height:26.7px;background:#424242"></div>
<div class="a" style="left:0;top:27.8px;width:8px;height:26.7px;background:linear-gradient(90deg,#222,#2a2a2a)"></div>
<span class="t c" style="left:11.00px;top:35.00px;font-size:15.80px;transform:scaleX(0.5500);color:#ececec;">x: CIE31</span>
<span class="t c" style="left:74.75px;top:35.00px;font-size:15.80px;transform:scaleX(0.5500);color:#ececec;">0,31</span>
<span class="t c" style="left:107.75px;top:35.00px;font-size:15.80px;transform:scaleX(0.5500);color:#ececec;">0,31</span>
<span class="t c" style="left:142.00px;top:35.00px;font-size:15.80px;transform:scaleX(0.5500);color:#ececec;">0,31</span>
<span class="t c" style="left:176.50px;top:35.00px;font-size:15.80px;transform:scaleX(0.5500);color:#ececec;">0,31</span>
<span class="t c" style="left:210.50px;top:35.00px;font-size:15.80px;transform:scaleX(0.5500);color:#ececec;">0,31</span>
<span class="t c" style="left:244.50px;top:35.00px;font-size:15.80px;transform:scaleX(0.5500);color:#ececec;">0,27</span>
<span class="t c" style="left:272.75px;top:35.00px;font-size:15.80px;transform:scaleX(0.5500);color:#ececec;">0,41</span>
<span class="t c" style="left:313.50px;top:35.00px;font-size:15.80px;transform:scaleX(0.5500);color:#ececec;">0,38</span>
<span class="t c" style="left:355.00px;top:35.00px;font-size:15.80px;transform:scaleX(0.5500);color:#ececec;">0,25</span>
<span class="t c" style="left:391.30px;top:35.00px;font-size:15.80px;transform:scaleX(0.5500);color:#ececec;">0,34</span>
<span class="t c" style="left:423.60px;top:35.00px;font-size:15.80px;transform:scaleX(0.5500);color:#ececec;">0,27</span>
<span class="t c" style="left:474.00px;top:35.00px;font-size:15.80px;transform:scaleX(0.5500);color:#ececec;">0,26</span>
<span class="t c" style="left:527.60px;top:35.00px;font-size:15.80px;transform:scaleX(0.5500);color:#ececec;">0,52</span>
<span class="t c" style="left:560.70px;top:35.00px;font-size:15.80px;transform:scaleX(0.5500);color:#ececec;">0,21</span>
<span class="t c" style="left:616.00px;top:35.00px;font-size:15.80px;transform:scaleX(0.5500);color:#ececec;">0,47</span>
<span class="t c" style="left:675.30px;top:35.00px;font-size:15.80px;transform:scaleX(0.5500);color:#ececec;">0,29</span>
<span class="t c" style="left:705.60px;top:35.00px;font-size:15.80px;transform:scaleX(0.5500);color:#ececec;">0,38</span>
<span class="t c" style="left:760.60px;top:35.00px;font-size:15.80px;transform:scaleX(0.5500);color:#ececec;">0,47</span>
<span class="t c" style="left:820.00px;top:35.00px;font-size:15.80px;transform:scaleX(0.5500);color:#ececec;">0,19</span>
<span class="t c" style="left:848.00px;top:35.00px;font-size:15.80px;transform:scaleX(0.5500);color:#ececec;">0,30</span>
<span class="t c" style="left:876.70px;top:35.00px;font-size:15.80px;transform:scaleX(0.5500);color:#ececec;">0,55</span>
<span class="t c" style="left:904.70px;top:35.00px;font-size:15.80px;transform:scaleX(0.5500);color:#ececec;">0,45</span>
<span class="t c" style="left:937.80px;top:35.00px;font-size:15.80px;transform:scaleX(0.5500);color:#ececec;">0,37</span>
<span class="t c" style="left:976.70px;top:35.00px;font-size:15.80px;transform:scaleX(0.5500);color:#ececec;">0,20</span>
<span class="t c" style="left:1005.00px;top:35.00px;font-size:15.80px;transform:scaleX(0.5500);color:#ececec;">0,65</span>
<span class="t c" style="left:1047.90px;top:35.00px;font-size:15.80px;transform:scaleX(0.5500);color:#ececec;">0,20</span>
<span class="t c" style="left:1099.00px;top:35.00px;font-size:15.80px;transform:scaleX(0.5500);color:#ececec;">0,15</span>
<span class="t c" style="left:1144.50px;top:35.00px;font-size:15.80px;transform:scaleX(0.5500);color:#ececec;">0,17</span>
<span class="t c" style="left:1191.50px;top:35.00px;font-size:15.80px;transform:scaleX(0.5500);color:#ececec;">0,36</span>
<span class="t c" style="left:1253.80px;top:35.00px;font-size:15.80px;transform:scaleX(0.5500);color:#ececec;">0,43</span>
<div class="a" style="left:0;top:54.2px;width:100%;height:26.7px;background:#787878"></div>
<div class="a" style="left:0;top:54.2px;width:8px;height:26.7px;background:linear-gradient(90deg,#222,#404040)"></div>
<span class="t c" style="left:11.00px;top:61.00px;font-size:15.80px;transform:scaleX(0.5500);color:#ececec;">y: CIE31</span>
<span class="t c" style="left:74.75px;top:61.00px;font-size:15.80px;transform:scaleX(0.5500);color:#ececec;">0,33</span>
<span class="t c" style="left:107.75px;top:61.00px;font-size:15.80px;transform:scaleX(0.5500);color:#ececec;">0,33</span>
<span class="t c" style="left:142.00px;top:61.00px;font-size:15.80px;transform:scaleX(0.5500);color:#ececec;">0,33</span>
<span class="t c" style="left:176.50px;top:61.00px;font-size:15.80px;transform:scaleX(0.5500);color:#ececec;">0,33</span>
<span class="t c" style="left:210.50px;top:61.00px;font-size:15.80px;transform:scaleX(0.5500);color:#ececec;">0,33</span>
<span class="t c" style="left:244.50px;top:61.00px;font-size:15.80px;transform:scaleX(0.5500);color:#ececec;">0,28</span>
<span class="t c" style="left:272.75px;top:61.00px;font-size:15.80px;transform:scaleX(0.5500);color:#ececec;">0,37</span>
<span class="t c" style="left:313.50px;top:61.00px;font-size:15.80px;transform:scaleX(0.5500);color:#ececec;">0,36</span>
<span class="t c" style="left:355.00px;top:61.00px;font-size:15.80px;transform:scaleX(0.5500);color:#ececec;">0,27</span>
<span class="t c" style="left:391.30px;top:61.00px;font-size:15.80px;transform:scaleX(0.5500);color:#ececec;">0,43</span>
<span class="t c" style="left:423.60px;top:61.00px;font-size:15.80px;transform:scaleX(0.5500);color:#ececec;">0,25</span>
<span class="t c" style="left:474.00px;top:61.00px;font-size:15.80px;transform:scaleX(0.5500);color:#ececec;">0,36</span>
<span class="t c" style="left:527.60px;top:61.00px;font-size:15.80px;transform:scaleX(0.5500);color:#ececec;">0,41</span>
<span class="t c" style="left:560.70px;top:61.00px;font-size:15.80px;transform:scaleX(0.5500);color:#ececec;">0,19</span>
<span class="t c" style="left:616.00px;top:61.00px;font-size:15.80px;transform:scaleX(0.5500);color:#ececec;">0,31</span>
<span class="t c" style="left:675.30px;top:61.00px;font-size:15.80px;transform:scaleX(0.5500);color:#ececec;">0,22</span>
<span class="t c" style="left:705.60px;top:61.00px;font-size:15.80px;transform:scaleX(0.5500);color:#ececec;">0,50</span>
<span class="t c" style="left:760.60px;top:61.00px;font-size:15.80px;transform:scaleX(0.5500);color:#ececec;">0,44</span>
<span class="t c" style="left:820.00px;top:61.00px;font-size:15.80px;transform:scaleX(0.5500);color:#ececec;">0,14</span>
<span class="t c" style="left:848.00px;top:61.00px;font-size:15.80px;transform:scaleX(0.5500);color:#ececec;">0,49</span>
<span class="t c" style="left:876.70px;top:61.00px;font-size:15.80px;transform:scaleX(0.5500);color:#ececec;">0,32</span>
<span class="t c" style="left:904.70px;top:61.00px;font-size:15.80px;transform:scaleX(0.5500);color:#ececec;">0,48</span>
<span class="t c" style="left:937.80px;top:61.00px;font-size:15.80px;transform:scaleX(0.5500);color:#ececec;">0,24</span>
<span class="t c" style="left:976.70px;top:61.00px;font-size:15.80px;transform:scaleX(0.5500);color:#ececec;">0,27</span>
<span class="t c" style="left:1005.00px;top:61.00px;font-size:15.80px;transform:scaleX(0.5500);color:#ececec;">0,33</span>
<span class="t c" style="left:1047.90px;top:61.00px;font-size:15.80px;transform:scaleX(0.5500);color:#ececec;">0,71</span>
<span class="t c" style="left:1099.00px;top:61.00px;font-size:15.80px;transform:scaleX(0.5500);color:#ececec;">0,05</span>
<span class="t c" style="left:1144.50px;top:61.00px;font-size:15.80px;transform:scaleX(0.5500);color:#ececec;">0,33</span>
<span class="t c" style="left:1191.50px;top:61.00px;font-size:15.80px;transform:scaleX(0.5500);color:#ececec;">0,17</span>
<span class="t c" style="left:1253.80px;top:61.00px;font-size:15.80px;transform:scaleX(0.5500);color:#ececec;">0,52</span>
<div class="a" style="left:0;top:80.6px;width:100%;height:26.7px;background:#424242"></div>
<div class="a" style="left:0;top:80.6px;width:8px;height:26.7px;background:linear-gradient(90deg,#222,#2a2a2a)"></div>
<span class="t c" style="left:11.00px;top:87.00px;font-size:15.80px;transform:scaleX(0.5500);color:#ececec;">Y</span>
<span class="t c" style="left:74.75px;top:87.00px;font-size:15.80px;transform:scaleX(0.5500);color:#ececec;">406,42</span>
<span class="t c" style="left:107.75px;top:87.00px;font-size:15.80px;transform:scaleX(0.5500);color:#ececec;">323,12</span>
<span class="t c" style="left:142.00px;top:87.00px;font-size:15.80px;transform:scaleX(0.5500);color:#ececec;">256,87</span>
<span class="t c" style="left:176.50px;top:87.00px;font-size:15.80px;transform:scaleX(0.5500);color:#ececec;">198,43</span>
<span class="t c" style="left:210.50px;top:87.00px;font-size:15.80px;transform:scaleX(0.5500);color:#ececec;">137,54</span>
<span class="t c" style="left:244.50px;top:87.00px;font-size:15.80px;transform:scaleX(0.5500);color:#ececec;">0,28</span>
<span class="t c" style="left:272.75px;top:87.00px;font-size:15.80px;transform:scaleX(0.5500);color:#ececec;">40,12</span>
<span class="t c" style="left:313.50px;top:87.00px;font-size:15.80px;transform:scaleX(0.5500);color:#ececec;">142,35</span>
<span class="t c" style="left:355.00px;top:87.00px;font-size:15.80px;transform:scaleX(0.5500);color:#ececec;">73,76</span>
<span class="t c" style="left:391.30px;top:87.00px;font-size:15.80px;transform:scaleX(0.5500);color:#ececec;">52,49</span>
<span class="t c" style="left:423.60px;top:87.00px;font-size:15.80px;transform:scaleX(0.5500);color:#ececec;">92,43</span>
<span class="t c" style="left:474.00px;top:87.00px;font-size:15.80px;transform:scaleX(0.5500);color:#ececec;">170,01</span>
<span class="t c" style="left:527.60px;top:87.00px;font-size:15.80px;transform:scaleX(0.5500);color:#ececec;">113,50</span>
<span class="t c" style="left:560.70px;top:87.00px;font-size:15.80px;transform:scaleX(0.5500);color:#ececec;">45,83</span>
<span class="t c" style="left:616.00px;top:87.00px;font-size:15.80px;transform:scaleX(0.5500);color:#ececec;">74,21</span>
<span class="t c" style="left:675.30px;top:87.00px;font-size:15.80px;transform:scaleX(0.5500);color:#ececec;">25,94</span>
<span class="t c" style="left:705.60px;top:87.00px;font-size:15.80px;transform:scaleX(0.5500);color:#ececec;">174,55</span>
<span class="t c" style="left:760.60px;top:87.00px;font-size:15.80px;transform:scaleX(0.5500);color:#ececec;">171,38</span>
<span class="t c" style="left:820.00px;top:87.00px;font-size:15.80px;transform:scaleX(0.5500);color:#ececec;">23,86</span>
<span class="t c" style="left:848.00px;top:87.00px;font-size:15.80px;transform:scaleX(0.5500);color:#ececec;">93,85</span>
<span class="t c" style="left:876.70px;top:87.00px;font-size:15.80px;transform:scaleX(0.5500);color:#ececec;">46,40</span>
<span class="t c" style="left:904.70px;top:87.00px;font-size:15.80px;transform:scaleX(0.5500);color:#ececec;">241,83</span>
<span class="t c" style="left:937.80px;top:87.00px;font-size:15.80px;transform:scaleX(0.5500);color:#ececec;">73,59</span>
<span class="t c" style="left:976.70px;top:87.00px;font-size:15.80px;transform:scaleX(0.5500);color:#ececec;">76,37</span>
<span class="t c" style="left:1005.00px;top:87.00px;font-size:15.80px;transform:scaleX(0.5500);color:#ececec;">120,26</span>
<span class="t c" style="left:1047.90px;top:87.00px;font-size:15.80px;transform:scaleX(0.5500);color:#ececec;">258,35</span>
<span class="t c" style="left:1099.00px;top:87.00px;font-size:15.80px;transform:scaleX(0.5500);color:#ececec;">27,63</span>
<span class="t c" style="left:1144.50px;top:87.00px;font-size:15.80px;transform:scaleX(0.5500);color:#ececec;">285,97</span>
<span class="t c" style="left:1191.50px;top:87.00px;font-size:15.80px;transform:scaleX(0.5500);color:#ececec;">147,53</span>
<span class="t c" style="left:1253.80px;top:87.00px;font-size:15.80px;transform:scaleX(0.5500);color:#ececec;">378,61</span>
<div class="a" style="left:0;top:107.0px;width:100%;height:26.7px;background:#787878"></div>
<div class="a" style="left:0;top:107.0px;width:8px;height:26.7px;background:linear-gradient(90deg,#222,#404040)"></div>
<span class="t c" style="left:11.00px;top:114.00px;font-size:15.80px;transform:scaleX(0.5500);color:#ececec;">Target x:CIE31</span>
<span class="t c" style="left:74.75px;top:114.00px;font-size:15.80px;transform:scaleX(0.5500);color:#ececec;">0,31</span>
<span class="t c" style="left:107.75px;top:114.00px;font-size:15.80px;transform:scaleX(0.5500);color:#ececec;">0,31</span>
<span class="t c" style="left:142.00px;top:114.00px;font-size:15.80px;transform:scaleX(0.5500);color:#ececec;">0,31</span>
<span class="t c" style="left:176.50px;top:114.00px;font-size:15.80px;transform:scaleX(0.5500);color:#ececec;">0,31</span>
<span class="t c" style="left:210.50px;top:114.00px;font-size:15.80px;transform:scaleX(0.5500);color:#ececec;">0,31</span>
<span class="t c" style="left:244.50px;top:114.00px;font-size:15.80px;transform:scaleX(0.5500);color:#ececec;">0,31</span>
<span class="t c" style="left:272.75px;top:114.00px;font-size:15.80px;transform:scaleX(0.5500);color:#ececec;">0,41</span>
<span class="t c" style="left:313.50px;top:114.00px;font-size:15.80px;transform:scaleX(0.5500);color:#ececec;">0,38</span>
<span class="t c" style="left:355.00px;top:114.00px;font-size:15.80px;transform:scaleX(0.5500);color:#ececec;">0,25</span>
<span class="t c" style="left:391.30px;top:114.00px;font-size:15.80px;transform:scaleX(0.5500);color:#ececec;">0,34</span>
<span class="t c" style="left:423.60px;top:114.00px;font-size:15.80px;transform:scaleX(0.5500);color:#ececec;">0,27</span>
<span class="t c" style="left:474.00px;top:114.00px;font-size:15.80px;transform:scaleX(0.5500);color:#ececec;">0,26</span>
<span class="t c" style="left:527.60px;top:114.00px;font-size:15.80px;transform:scaleX(0.5500);color:#ececec;">0,51</span>
<span class="t c" style="left:560.70px;top:114.00px;font-size:15.80px;transform:scaleX(0.5500);color:#ececec;">0,21</span>
<span class="t c" style="left:616.00px;top:114.00px;font-size:15.80px;transform:scaleX(0.5500);color:#ececec;">0,46</span>
<span class="t c" style="left:675.30px;top:114.00px;font-size:15.80px;transform:scaleX(0.5500);color:#ececec;">0,29</span>
<span class="t c" style="left:705.60px;top:114.00px;font-size:15.80px;transform:scaleX(0.5500);color:#ececec;">0,38</span>
<span class="t c" style="left:760.60px;top:114.00px;font-size:15.80px;transform:scaleX(0.5500);color:#ececec;">0,47</span>
<span class="t c" style="left:820.00px;top:114.00px;font-size:15.80px;transform:scaleX(0.5500);color:#ececec;">0,19</span>
<span class="t c" style="left:848.00px;top:114.00px;font-size:15.80px;transform:scaleX(0.5500);color:#ececec;">0,31</span>
<span class="t c" style="left:876.70px;top:114.00px;font-size:15.80px;transform:scaleX(0.5500);color:#ececec;">0,55</span>
<span class="t c" style="left:904.70px;top:114.00px;font-size:15.80px;transform:scaleX(0.5500);color:#ececec;">0,45</span>
<span class="t c" style="left:937.80px;top:114.00px;font-size:15.80px;transform:scaleX(0.5500);color:#ececec;">0,37</span>
<span class="t c" style="left:976.70px;top:114.00px;font-size:15.80px;transform:scaleX(0.5500);color:#ececec;">0,20</span>
<span class="t c" style="left:1005.00px;top:114.00px;font-size:15.80px;transform:scaleX(0.5500);color:#ececec;">0,64</span>
<span class="t c" style="left:1047.90px;top:114.00px;font-size:15.80px;transform:scaleX(0.5500);color:#ececec;">0,21</span>
<span class="t c" style="left:1099.00px;top:114.00px;font-size:15.80px;transform:scaleX(0.5500);color:#ececec;">0,15</span>
<span class="t c" style="left:1144.50px;top:114.00px;font-size:15.80px;transform:scaleX(0.5500);color:#ececec;">0,17</span>
<span class="t c" style="left:1191.50px;top:114.00px;font-size:15.80px;transform:scaleX(0.5500);color:#ececec;">0,35</span>
<span class="t c" style="left:1253.80px;top:114.00px;font-size:15.80px;transform:scaleX(0.5500);color:#ececec;">0,43</span>
<div class="a" style="left:0;top:133.4px;width:100%;height:26.7px;background:#424242"></div>
<div class="a" style="left:0;top:133.4px;width:8px;height:26.7px;background:linear-gradient(90deg,#222,#2a2a2a)"></div>
<span class="t c" style="left:11.00px;top:140.00px;font-size:15.80px;transform:scaleX(0.5500);color:#ececec;">Target y:CIE31</span>
<span class="t c" style="left:74.75px;top:140.00px;font-size:15.80px;transform:scaleX(0.5500);color:#ececec;">0,33</span>
<span class="t c" style="left:107.75px;top:140.00px;font-size:15.80px;transform:scaleX(0.5500);color:#ececec;">0,33</span>
<span class="t c" style="left:142.00px;top:140.00px;font-size:15.80px;transform:scaleX(0.5500);color:#ececec;">0,33</span>
<span class="t c" style="left:176.50px;top:140.00px;font-size:15.80px;transform:scaleX(0.5500);color:#ececec;">0,33</span>
<span class="t c" style="left:210.50px;top:140.00px;font-size:15.80px;transform:scaleX(0.5500);color:#ececec;">0,33</span>
<span class="t c" style="left:244.50px;top:140.00px;font-size:15.80px;transform:scaleX(0.5500);color:#ececec;">0,33</span>
<span class="t c" style="left:272.75px;top:140.00px;font-size:15.80px;transform:scaleX(0.5500);color:#ececec;">0,37</span>
<span class="t c" style="left:313.50px;top:140.00px;font-size:15.80px;transform:scaleX(0.5500);color:#ececec;">0,36</span>
<span class="t c" style="left:355.00px;top:140.00px;font-size:15.80px;transform:scaleX(0.5500);color:#ececec;">0,27</span>
<span class="t c" style="left:391.30px;top:140.00px;font-size:15.80px;transform:scaleX(0.5500);color:#ececec;">0,43</span>
<span class="t c" style="left:423.60px;top:140.00px;font-size:15.80px;transform:scaleX(0.5500);color:#ececec;">0,25</span>
<span class="t c" style="left:474.00px;top:140.00px;font-size:15.80px;transform:scaleX(0.5500);color:#ececec;">0,36</span>
<span class="t c" style="left:527.60px;top:140.00px;font-size:15.80px;transform:scaleX(0.5500);color:#ececec;">0,41</span>
<span class="t c" style="left:560.70px;top:140.00px;font-size:15.80px;transform:scaleX(0.5500);color:#ececec;">0,19</span>
<span class="t c" style="left:616.00px;top:140.00px;font-size:15.80px;transform:scaleX(0.5500);color:#ececec;">0,31</span>
<span class="t c" style="left:675.30px;top:140.00px;font-size:15.80px;transform:scaleX(0.5500);color:#ececec;">0,22</span>
<span class="t c" style="left:705.60px;top:140.00px;font-size:15.80px;transform:scaleX(0.5500);color:#ececec;">0,49</span>
<span class="t c" style="left:760.60px;top:140.00px;font-size:15.80px;transform:scaleX(0.5500);color:#ececec;">0,44</span>
<span class="t c" style="left:820.00px;top:140.00px;font-size:15.80px;transform:scaleX(0.5500);color:#ececec;">0,13</span>
<span class="t c" style="left:848.00px;top:140.00px;font-size:15.80px;transform:scaleX(0.5500);color:#ececec;">0,49</span>
<span class="t c" style="left:876.70px;top:140.00px;font-size:15.80px;transform:scaleX(0.5500);color:#ececec;">0,32</span>
<span class="t c" style="left:904.70px;top:140.00px;font-size:15.80px;transform:scaleX(0.5500);color:#ececec;">0,48</span>
<span class="t c" style="left:937.80px;top:140.00px;font-size:15.80px;transform:scaleX(0.5500);color:#ececec;">0,24</span>
<span class="t c" style="left:976.70px;top:140.00px;font-size:15.80px;transform:scaleX(0.5500);color:#ececec;">0,27</span>
<span class="t c" style="left:1005.00px;top:140.00px;font-size:15.80px;transform:scaleX(0.5500);color:#ececec;">0,33</span>
<span class="t c" style="left:1047.90px;top:140.00px;font-size:15.80px;transform:scaleX(0.5500);color:#ececec;">0,71</span>
<span class="t c" style="left:1099.00px;top:140.00px;font-size:15.80px;transform:scaleX(0.5500);color:#ececec;">0,06</span>
<span class="t c" style="left:1144.50px;top:140.00px;font-size:15.80px;transform:scaleX(0.5500);color:#ececec;">0,33</span>
<span class="t c" style="left:1191.50px;top:140.00px;font-size:15.80px;transform:scaleX(0.5500);color:#ececec;">0,17</span>
<span class="t c" style="left:1253.80px;top:140.00px;font-size:15.80px;transform:scaleX(0.5500);color:#ececec;">0,52</span>
<div class="a" style="left:0;top:159.8px;width:100%;height:26.7px;background:#787878"></div>
<div class="a" style="left:0;top:159.8px;width:8px;height:26.7px;background:linear-gradient(90deg,#222,#404040)"></div>
<span class="t c" style="left:11.00px;top:167.00px;font-size:15.80px;transform:scaleX(0.5500);color:#ececec;">Target Y</span>
<span class="t c" style="left:74.75px;top:167.00px;font-size:15.80px;transform:scaleX(0.5500);color:#ececec;">406,42</span>
<span class="t c" style="left:107.75px;top:167.00px;font-size:15.80px;transform:scaleX(0.5500);color:#ececec;">323,97</span>
<span class="t c" style="left:142.00px;top:167.00px;font-size:15.80px;transform:scaleX(0.5500);color:#ececec;">262,51</span>
<span class="t c" style="left:176.50px;top:167.00px;font-size:15.80px;transform:scaleX(0.5500);color:#ececec;">203,20</span>
<span class="t c" style="left:210.50px;top:167.00px;font-size:15.80px;transform:scaleX(0.5500);color:#ececec;">142,02</span>
<span class="t c" style="left:244.50px;top:167.00px;font-size:15.80px;transform:scaleX(0.5500);color:#ececec;">0,28</span>
<span class="t c" style="left:272.75px;top:167.00px;font-size:15.80px;transform:scaleX(0.5500);color:#ececec;">40,75</span>
<span class="t c" style="left:313.50px;top:167.00px;font-size:15.80px;transform:scaleX(0.5500);color:#ececec;">145,47</span>
<span class="t c" style="left:355.00px;top:167.00px;font-size:15.80px;transform:scaleX(0.5500);color:#ececec;">76,68</span>
<span class="t c" style="left:391.30px;top:167.00px;font-size:15.80px;transform:scaleX(0.5500);color:#ececec;">53,19</span>
<span class="t c" style="left:423.60px;top:167.00px;font-size:15.80px;transform:scaleX(0.5500);color:#ececec;">95,80</span>
<span class="t c" style="left:474.00px;top:167.00px;font-size:15.80px;transform:scaleX(0.5500);color:#ececec;">173,70</span>
<span class="t c" style="left:527.60px;top:167.00px;font-size:15.80px;transform:scaleX(0.5500);color:#ececec;">115,81</span>
<span class="t c" style="left:560.70px;top:167.00px;font-size:15.80px;transform:scaleX(0.5500);color:#ececec;">47,65</span>
<span class="t c" style="left:616.00px;top:167.00px;font-size:15.80px;transform:scaleX(0.5500);color:#ececec;">76,25</span>
<span class="t c" style="left:675.30px;top:167.00px;font-size:15.80px;transform:scaleX(0.5500);color:#ececec;">26,10</span>
<span class="t c" style="left:705.60px;top:167.00px;font-size:15.80px;transform:scaleX(0.5500);color:#ececec;">177,84</span>
<span class="t c" style="left:760.60px;top:167.00px;font-size:15.80px;transform:scaleX(0.5500);color:#ececec;">174,64</span>
<span class="t c" style="left:820.00px;top:167.00px;font-size:15.80px;transform:scaleX(0.5500);color:#ececec;">24,46</span>
<span class="t c" style="left:848.00px;top:167.00px;font-size:15.80px;transform:scaleX(0.5500);color:#ececec;">95,53</span>
<span class="t c" style="left:876.70px;top:167.00px;font-size:15.80px;transform:scaleX(0.5500);color:#ececec;">47,25</span>
<span class="t c" style="left:904.70px;top:167.00px;font-size:15.80px;transform:scaleX(0.5500);color:#ececec;">242,58</span>
<span class="t c" style="left:937.80px;top:167.00px;font-size:15.80px;transform:scaleX(0.5500);color:#ececec;">76,42</span>
<span class="t c" style="left:976.70px;top:167.00px;font-size:15.80px;transform:scaleX(0.5500);color:#ececec;">78,37</span>
<span class="t c" style="left:1005.00px;top:167.00px;font-size:15.80px;transform:scaleX(0.5500);color:#ececec;">121,05</span>
<span class="t c" style="left:1047.90px;top:167.00px;font-size:15.80px;transform:scaleX(0.5500);color:#ececec;">255,08</span>
<span class="t c" style="left:1099.00px;top:167.00px;font-size:15.80px;transform:scaleX(0.5500);color:#ececec;">30,86</span>
<span class="t c" style="left:1144.50px;top:167.00px;font-size:15.80px;transform:scaleX(0.5500);color:#ececec;">285,65</span>
<span class="t c" style="left:1191.50px;top:167.00px;font-size:15.80px;transform:scaleX(0.5500);color:#ececec;">151,63</span>
<span class="t c" style="left:1253.80px;top:167.00px;font-size:15.80px;transform:scaleX(0.5500);color:#ececec;">375,85</span>
<div class="a" style="left:0;top:186.2px;width:100%;height:26.7px;background:#424242"></div>
<div class="a" style="left:0;top:186.2px;width:8px;height:26.7px;background:linear-gradient(90deg,#222,#2a2a2a)"></div>
<span class="t c" style="left:11.00px;top:193.00px;font-size:15.80px;transform:scaleX(0.5500);color:#ececec;">ΔE 2000</span>
<span class="t c" style="left:74.75px;top:193.00px;font-size:15.80px;transform:scaleX(0.5500);color:#ececec;">0,08</span>
<span class="t c" style="left:107.75px;top:193.00px;font-size:15.80px;transform:scaleX(0.5500);color:#ececec;">1,39</span>
<span class="t c" style="left:142.00px;top:193.00px;font-size:15.80px;transform:scaleX(0.5500);color:#ececec;">0,59</span>
<span class="t c" style="left:176.50px;top:193.00px;font-size:15.80px;transform:scaleX(0.5500);color:#ececec;">0,66</span>
<span class="t c" style="left:210.50px;top:193.00px;font-size:15.80px;transform:scaleX(0.5500);color:#ececec;">0,82</span>
<span class="t c" style="left:244.50px;top:193.00px;font-size:15.80px;transform:scaleX(0.5500);color:#ececec;">0,48</span>
<span class="t c" style="left:272.75px;top:193.00px;font-size:15.80px;transform:scaleX(0.5500);color:#ececec;">0,56</span>
<span class="t c" style="left:313.50px;top:193.00px;font-size:15.80px;transform:scaleX(0.5500);color:#ececec;">0,57</span>
<span class="t c" style="left:355.00px;top:193.00px;font-size:15.80px;transform:scaleX(0.5500);color:#ececec;">0,91</span>
<span class="t c" style="left:391.30px;top:193.00px;font-size:15.80px;transform:scaleX(0.5500);color:#ececec;">0,46</span>
<span class="t c" style="left:423.60px;top:193.00px;font-size:15.80px;transform:scaleX(0.5500);color:#ececec;">0,87</span>
<span class="t c" style="left:474.00px;top:193.00px;font-size:15.80px;transform:scaleX(0.5500);color:#ececec;">0,74</span>
<span class="t c" style="left:527.60px;top:193.00px;font-size:15.80px;transform:scaleX(0.5500);color:#ececec;">0,97</span>
<span class="t c" style="left:560.70px;top:193.00px;font-size:15.80px;transform:scaleX(0.5500);color:#ececec;">0,79</span>
<span class="t c" style="left:616.00px;top:193.00px;font-size:15.80px;transform:scaleX(0.5500);color:#ececec;">0,63</span>
<span class="t c" style="left:675.30px;top:193.00px;font-size:15.80px;transform:scaleX(0.5500);color:#ececec;">0,37</span>
<span class="t c" style="left:705.60px;top:193.00px;font-size:15.80px;transform:scaleX(0.5500);color:#ececec;">0,62</span>
<span class="t c" style="left:760.60px;top:193.00px;font-size:15.80px;transform:scaleX(0.5500);color:#ececec;">0,60</span>
<span class="t c" style="left:820.00px;top:193.00px;font-size:15.80px;transform:scaleX(0.5500);color:#ececec;">0,72</span>
<span class="t c" style="left:848.00px;top:193.00px;font-size:15.80px;transform:scaleX(0.5500);color:#ececec;">0,64</span>
<span class="t c" style="left:876.70px;top:193.00px;font-size:15.80px;transform:scaleX(0.5500);color:#ececec;">0,36</span>
<span class="t c" style="left:904.70px;top:193.00px;font-size:15.80px;transform:scaleX(0.5500);color:#ececec;">0,16</span>
<span class="t c" style="left:937.80px;top:193.00px;font-size:15.80px;transform:scaleX(0.5500);color:#ececec;">0,87</span>
<span class="t c" style="left:976.70px;top:193.00px;font-size:15.80px;transform:scaleX(0.5500);color:#ececec;">0,63</span>
<span class="t c" style="left:1005.00px;top:193.00px;font-size:15.80px;transform:scaleX(0.5500);color:#ececec;">1,48</span>
<span class="t c" style="left:1047.90px;top:193.00px;font-size:15.80px;transform:scaleX(0.5500);color:#ececec;">0,96</span>
<span class="t c" style="left:1099.00px;top:193.00px;font-size:15.80px;transform:scaleX(0.5500);color:#ececec;">1,94</span>
<span class="t c" style="left:1144.50px;top:193.00px;font-size:15.80px;transform:scaleX(0.5500);color:#ececec;">0,69</span>
<span class="t c" style="left:1191.50px;top:193.00px;font-size:15.80px;transform:scaleX(0.5500);color:#ececec;">0,91</span>
<span class="t c" style="left:1253.80px;top:193.00px;font-size:15.80px;transform:scaleX(0.5500);color:#ececec;">0,41</span>
<div class="a" style="left:0;top:212.6px;width:100%;height:26.7px;background:#787878"></div>
<div class="a" style="left:0;top:212.6px;width:8px;height:26.7px;background:linear-gradient(90deg,#222,#404040)"></div>
<span class="t c" style="left:11.00px;top:219.00px;font-size:15.80px;transform:scaleX(0.5500);color:#ececec;">dEITP</span>
<span class="t c" style="left:74.75px;top:219.00px;font-size:15.80px;transform:scaleX(0.5500);color:#ececec;">0,07</span>
<span class="t c" style="left:107.75px;top:219.00px;font-size:15.80px;transform:scaleX(0.5500);color:#ececec;">0,91</span>
<span class="t c" style="left:142.00px;top:219.00px;font-size:15.80px;transform:scaleX(0.5500);color:#ececec;">1,65</span>
<span class="t c" style="left:176.50px;top:219.00px;font-size:15.80px;transform:scaleX(0.5500);color:#ececec;">1,84</span>
<span class="t c" style="left:210.50px;top:219.00px;font-size:15.80px;transform:scaleX(0.5500);color:#ececec;">2,42</span>
<span class="t c" style="left:244.50px;top:219.00px;font-size:15.80px;transform:scaleX(0.5500);color:#ececec;">10,18</span>
<span class="t c" style="left:272.75px;top:219.00px;font-size:15.80px;transform:scaleX(0.5500);color:#ececec;">1,73</span>
<span class="t c" style="left:313.50px;top:219.00px;font-size:15.80px;transform:scaleX(0.5500);color:#ececec;">2,04</span>
<span class="t c" style="left:355.00px;top:219.00px;font-size:15.80px;transform:scaleX(0.5500);color:#ececec;">2,85</span>
<span class="t c" style="left:391.30px;top:219.00px;font-size:15.80px;transform:scaleX(0.5500);color:#ececec;">1,44</span>
<span class="t c" style="left:423.60px;top:219.00px;font-size:15.80px;transform:scaleX(0.5500);color:#ececec;">2,62</span>
<span class="t c" style="left:474.00px;top:219.00px;font-size:15.80px;transform:scaleX(0.5500);color:#ececec;">2,28</span>
<span class="t c" style="left:527.60px;top:219.00px;font-size:15.80px;transform:scaleX(0.5500);color:#ececec;">3,24</span>
<span class="t c" style="left:560.70px;top:219.00px;font-size:15.80px;transform:scaleX(0.5500);color:#ececec;">2,83</span>
<span class="t c" style="left:616.00px;top:219.00px;font-size:15.80px;transform:scaleX(0.5500);color:#ececec;">3,03</span>
<span class="t c" style="left:675.30px;top:219.00px;font-size:15.80px;transform:scaleX(0.5500);color:#ececec;">1,13</span>
<span class="t c" style="left:705.60px;top:219.00px;font-size:15.80px;transform:scaleX(0.5500);color:#ececec;">1,86</span>
<span class="t c" style="left:760.60px;top:219.00px;font-size:15.80px;transform:scaleX(0.5500);color:#ececec;">1,89</span>
<span class="t c" style="left:820.00px;top:219.00px;font-size:15.80px;transform:scaleX(0.5500);color:#ececec;">4,21</span>
<span class="t c" style="left:848.00px;top:219.00px;font-size:15.80px;transform:scaleX(0.5500);color:#ececec;">2,16</span>
<span class="t c" style="left:876.70px;top:219.00px;font-size:15.80px;transform:scaleX(0.5500);color:#ececec;">1,79</span>
<span class="t c" style="left:904.70px;top:219.00px;font-size:15.80px;transform:scaleX(0.5500);color:#ececec;">0,82</span>
<span class="t c" style="left:937.80px;top:219.00px;font-size:15.80px;transform:scaleX(0.5500);color:#ececec;">3,79</span>
<span class="t c" style="left:976.70px;top:219.00px;font-size:15.80px;transform:scaleX(0.5500);color:#ececec;">1,91</span>
<span class="t c" style="left:1005.00px;top:219.00px;font-size:15.80px;transform:scaleX(0.5500);color:#ececec;">9,20</span>
<span class="t c" style="left:1047.90px;top:219.00px;font-size:15.80px;transform:scaleX(0.5500);color:#ececec;">3,53</span>
<span class="t c" style="left:1099.00px;top:219.00px;font-size:15.80px;transform:scaleX(0.5500);color:#ececec;">6,90</span>
<span class="t c" style="left:1144.50px;top:219.00px;font-size:15.80px;transform:scaleX(0.5500);color:#ececec;">3,04</span>
<span class="t c" style="left:1191.50px;top:219.00px;font-size:15.80px;transform:scaleX(0.5500);color:#ececec;">8,74</span>
<span class="t c" style="left:1253.80px;top:219.00px;font-size:15.80px;transform:scaleX(0.5500);color:#ececec;">1,75</span>
</div>
<div class="a" style="left:319.00px;top:905.00px;width:1293.00px;height:17.00px;background:#5f5f5f;"></div>
<div class="a" style="left:320.50px;top:906.50px;width:9.00px;height:14.00px;background:#8a8a8a;border-radius:2px"></div>
<svg style="left:321px;top:908px" width="8" height="11"><path d="M6.5 0.5V10.5L1 5.5Z" fill="#3c3c3c"/></svg>
<div class="a" style="left:331.00px;top:906.50px;width:897.00px;height:14.00px;background:#454545;border-radius:7px"></div>
<div class="a" style="left:1605.00px;top:906.50px;width:9.00px;height:14.00px;background:#8a8a8a;border-radius:2px"></div>
<div class="a" style="left:311.00px;top:922.00px;width:1301.00px;height:5.20px;background:#2b2b2b;"></div>
<div class="a" style="left:0;top:926px;width:1293px;height:50px;overflow:hidden;background:#323232">
<div class="a tab" style="left:1.3px"><div class="a chip" style="height:24.0px;background:#ffffff"></div></div>
<span class="t tl" style="left:12.37px;top:36.00px;font-size:11.50px;transform:scaleX(0.8900);color:#222;font-weight:700;">White</span>
<div class="a tab" style="left:53.3px"><div class="a chip" style="height:24.0px;background:#e6e6e6"></div></div>
<span class="t tl" style="left:59.52px;top:36.00px;font-size:11.50px;transform:scaleX(0.8900);color:#222;font-weight:700;">Gray 80</span>
<div class="a tab" style="left:105.3px"><div class="a chip" style="height:24.0px;background:#d2d2d2"></div></div>
<span class="t tl" style="left:111.52px;top:36.00px;font-size:11.50px;transform:scaleX(0.8900);color:#222;font-weight:700;">Gray 65</span>
<div class="a tab" style="left:157.3px"><div class="a chip" style="height:24.0px;background:#bcbcbc"></div></div>
<span class="t tl" style="left:163.52px;top:36.00px;font-size:11.50px;transform:scaleX(0.8900);color:#222;font-weight:700;">Gray 50</span>
<div class="a tab" style="left:209.3px"><div class="a chip" style="height:24.0px;background:#a0a0a0"></div></div>
<span class="t tl" style="left:215.52px;top:36.00px;font-size:11.50px;transform:scaleX(0.8900);color:#222;font-weight:700;">Gray 35</span>
<div class="a tab" style="left:261.3px"><div class="a chip" style="height:24.0px;background:#000000"></div></div>
<span class="t tl" style="left:272.64px;top:36.00px;font-size:11.50px;transform:scaleX(0.8900);color:#222;font-weight:700;">Black</span>
<div class="a tab" style="left:313.3px"><div class="a chip" style="height:24.0px;background:#735244"></div></div>
<span class="t tl" style="left:314.69px;top:36.00px;font-size:11.50px;transform:scaleX(0.8900);color:#222;font-weight:700;">Dark Skin</span>
<div class="a tab" style="left:365.3px"><div class="a chip" style="height:24.0px;background:#c29682"></div></div>
<span class="t tl" style="left:365.57px;top:36.00px;font-size:11.50px;transform:scaleX(0.8900);color:#222;font-weight:700;">Light Skin</span>
<div class="a tab" style="left:417.3px"><div class="a chip" style="height:24.0px;background:#627a9d"></div></div>
<span class="t tl" style="left:420.68px;top:36.00px;font-size:11.50px;transform:scaleX(0.8900);color:#222;font-weight:700;">Blue Sky</span>
<div class="a tab" style="left:469.3px"><div class="a chip" style="height:24.0px;background:#576c43"></div></div>
<span class="t tl" style="left:476.39px;top:36.00px;font-size:11.50px;transform:scaleX(0.8900);color:#222;font-weight:700;">Foliage</span>
<div class="a tab" style="left:521.3px"><div class="a chip" style="height:11.5px;background:#8580b1"></div></div>
<span class="t tl" style="left:529.81px;top:24.00px;font-size:11.50px;transform:scaleX(0.8900);color:#222;font-weight:700;">Blue</span>
<span class="t tl" style="left:529.81px;top:36.00px;font-size:11.50px;transform:scaleX(0.8900);color:#222;font-weight:700;">Flower</span>
<div class="a tab" style="left:573.3px"><div class="a chip" style="height:11.5px;background:#85c8b4"></div></div>
<span class="t tl" style="left:582.66px;top:24.00px;font-size:11.50px;transform:scaleX(0.8900);color:#222;font-weight:700;">Bluish</span>
<span class="t tl" style="left:582.66px;top:36.00px;font-size:11.50px;transform:scaleX(0.8900);color:#222;font-weight:700;">Green</span>
<div class="a tab" style="left:625.3px"><div class="a chip" style="height:24.0px;background:#d67e2c"></div></div>
<span class="t tl" style="left:632.38px;top:36.00px;font-size:11.50px;transform:scaleX(0.8900);color:#222;font-weight:700;">Orange</span>
<div class="a tab" style="left:677.3px"><div class="a chip" style="height:11.5px;background:#505ba6"></div></div>
<span class="t tl" style="left:681.83px;top:24.00px;font-size:11.50px;transform:scaleX(0.8900);color:#222;font-weight:700;">Purplish</span>
<span class="t tl" style="left:681.83px;top:36.00px;font-size:11.50px;transform:scaleX(0.8900);color:#222;font-weight:700;">Blue</span>
<div class="a tab" style="left:729.3px"><div class="a chip" style="height:11.5px;background:#c15a63"></div></div>
<span class="t tl" style="left:731.55px;top:24.00px;font-size:11.50px;transform:scaleX(0.8900);color:#222;font-weight:700;">Moderate</span>
<span class="t tl" style="left:731.55px;top:36.00px;font-size:11.50px;transform:scaleX(0.8900);color:#222;font-weight:700;">Red</span>
<div class="a tab" style="left:781.3px"><div class="a chip" style="height:24.0px;background:#5e3c6c"></div></div>
<span class="t tl" style="left:790.38px;top:36.00px;font-size:11.50px;transform:scaleX(0.8900);color:#222;font-weight:700;">Purple</span>
<div class="a tab" style="left:833.3px"><div class="a chip" style="height:11.5px;background:#b0c840"></div></div>
<span class="t tl" style="left:842.37px;top:24.00px;font-size:11.50px;transform:scaleX(0.8900);color:#222;font-weight:700;">Yellow</span>
<span class="t tl" style="left:842.37px;top:36.00px;font-size:11.50px;transform:scaleX(0.8900);color:#222;font-weight:700;">Green</span>
<div class="a tab" style="left:885.3px"><div class="a chip" style="height:11.5px;background:#e8a82e"></div></div>
<span class="t tl" style="left:892.38px;top:24.00px;font-size:11.50px;transform:scaleX(0.8900);color:#222;font-weight:700;">Orange</span>
<span class="t tl" style="left:892.38px;top:36.00px;font-size:11.50px;transform:scaleX(0.8900);color:#222;font-weight:700;">Yellow</span>
<div class="a tab" style="left:937.3px"><div class="a chip" style="height:24.0px;background:#383d96"></div></div>
<span class="t tl" style="left:951.21px;top:36.00px;font-size:11.50px;transform:scaleX(0.8900);color:#222;font-weight:700;">Blue</span>
<div class="a tab" style="left:989.3px"><div class="a chip" style="height:24.0px;background:#5a9c50"></div></div>
<span class="t tl" style="left:999.51px;top:36.00px;font-size:11.50px;transform:scaleX(0.8900);color:#222;font-weight:700;">Green</span>
<div class="a tab" style="left:1041.3px"><div class="a chip" style="height:24.0px;background:#af363c"></div></div>
<span class="t tl" style="left:1056.63px;top:36.00px;font-size:11.50px;transform:scaleX(0.8900);color:#222;font-weight:700;">Red</span>
<div class="a tab" style="left:1093.3px"><div class="a chip" style="height:24.0px;background:#e7c832"></div></div>
<span class="t tl" style="left:1102.37px;top:36.00px;font-size:11.50px;transform:scaleX(0.8900);color:#222;font-weight:700;">Yellow</span>
<div class="a tab" style="left:1145.3px"><div class="a chip" style="height:24.0px;background:#b2589a"></div></div>
<span class="t tl" style="left:1149.54px;top:36.00px;font-size:11.50px;transform:scaleX(0.8900);color:#222;font-weight:700;">Magenta</span>
<div class="a tab" style="left:1197.3px"><div class="a chip" style="height:24.0px;background:#3c8eb8"></div></div>
<span class="t tl" style="left:1209.79px;top:36.00px;font-size:11.50px;transform:scaleX(0.8900);color:#222;font-weight:700;">Cyan</span>
<div class="a tab" style="left:1249.3px"><div class="a chip" style="height:24.0px;background:#ff0000"></div></div>
<span class="t tl" style="left:1250.12px;top:36.00px;font-size:11.50px;transform:scaleX(0.8900);color:#222;font-weight:700;">100% Red</span>
</div>
<div class="a" style="left:0.00px;top:976.00px;width:1293.00px;height:12.00px;background:#5e5e5e;"></div>
<div class="a" style="left:2.00px;top:977.00px;width:10.00px;height:11.00px;background:#8a8a8a;border-radius:2px"></div>
<svg style="left:3px;top:978px" width="8" height="9"><path d="M6.5 0.5V8.5L1 4.5Z" fill="#3a3a3a"/></svg>
<div class="a" style="left:14.00px;top:977.00px;width:667.00px;height:11.00px;background:#474747;border-radius:6px"></div>
<div class="a" style="left:1281.00px;top:977.00px;width:10.00px;height:11.00px;background:#8a8a8a;border-radius:2px"></div>
<svg style="left:1282px;top:978px" width="8" height="9"><path d="M1.5 0.5V8.5L7 4.5Z" fill="#3a3a3a"/></svg>
<div class="a" style="left:1292.60px;top:926.80px;width:48.40px;height:19.00px;background:linear-gradient(#a0a0a0,#8a8a8a);border-radius:4px 4px 0 0;border:1px solid #6a6a6a;border-bottom:1px solid #5c5c5c"></div>
<div class="a" style="left:1292.60px;top:945.80px;width:48.40px;height:43.00px;background:linear-gradient(#8a8a8a,#707070);border:1px solid #6a6a6a;border-top:none"></div>
<svg style="left:1293px;top:926.5px" width="48" height="62"><defs><linearGradient id="cg" x1="0" y1="0" x2="0" y2="1"><stop offset="0" stop-color="#868686"/><stop offset="1" stop-color="#b0b0b0"/></linearGradient></defs><ellipse cx="24.3" cy="9.1" rx="7.6" ry="7" fill="url(#cg)"/><path d="M20 11.8H28.6L24.3 6.800Z" fill="#3a3a3a"/><rect x="9.3" y="25.4" width="29.6" height="29.6" rx="5" fill="#c6c6c6" stroke="#2e2e2e" stroke-width="2.3"/><rect x="10.6" y="40.6" width="27" height="13.2" rx="3" fill="#9a9a9a"/><rect x="17.2" y="33.5" width="13.4" height="13.4" fill="#000"/><rect x="17.2" y="33.5" width="13.4" height="7.1" fill="#222"/></svg>
<div class="a" style="left:1342.00px;top:926.50px;width:46.40px;height:30.00px;background:linear-gradient(#a6a6a6,#6e6e6e);border-left:1px solid #a8a8a8;border-radius:4px 0 0 4px"></div>
<div class="a" style="left:1388.40px;top:926.50px;width:45.00px;height:30.00px;background:linear-gradient(#a6a6a6,#6e6e6e);border-left:1px solid #484848;border-radius:0"></div>
<div class="a" style="left:1433.40px;top:926.50px;width:45.00px;height:30.00px;background:linear-gradient(#a6a6a6,#6e6e6e);border-left:1px solid #484848;border-radius:0"></div>
<div class="a" style="left:1478.40px;top:926.50px;width:45.00px;height:30.00px;background:linear-gradient(#a6a6a6,#6e6e6e);border-left:1px solid #484848;border-radius:0"></div>
<div class="a" style="left:1523.40px;top:926.50px;width:44.60px;height:30.00px;background:linear-gradient(#3e3e3e,#2a2a2a);border-left:1px solid #2a2a2a;border-radius:0"></div>
<div class="a" style="left:1568.00px;top:926.50px;width:45.00px;height:30.00px;background:linear-gradient(#3e3e3e,#2a2a2a);border-left:1px solid #2a2a2a;border-radius:0"></div>
<div class="a" style="left:1342.00px;top:958.00px;width:136.40px;height:30.00px;background:linear-gradient(#b0b0b0,#7c7c7c);border-left:1px solid #b8b8b8;border-top:1px solid #c0c0c0;border-radius:4px 0 0 0"></div>
<div class="a" style="left:1478.40px;top:958.00px;width:134.00px;height:30.00px;background:linear-gradient(#b0b0b0,#7c7c7c);border-left:1px solid #3c3c3c;border-top:1px solid #c0c0c0"></div>
<svg style="left:1342px;top:926.5px;z-index:3" width="270" height="62"><defs><linearGradient id="cg2" x1="0" y1="0" x2="0" y2="1"><stop offset="0" stop-color="#7e7e7e"/><stop offset="1" stop-color="#b4b4b4"/></linearGradient><linearGradient id="cg3" x1="0" y1="0" x2="0" y2="1"><stop offset="0" stop-color="#2a2a2a"/><stop offset="1" stop-color="#444"/></linearGradient></defs><circle cx="23.2" cy="15.5" r="10.8" fill="url(#cg2)"/><rect x="18.9" y="11.2" width="8.6" height="8.6" fill="#2a2a2a"/><circle cx="68.9" cy="15.5" r="10.8" fill="url(#cg2)"/><path d="M65.3 10.3V20.7L74.1 15.5Z" fill="#2a2a2a"/><circle cx="113.9" cy="15.5" r="10.8" fill="url(#cg2)"/><path d="M110.5 11.0h-2.6v9h2.6M117.3 11.0h2.6v9h-2.6" fill="none" stroke="#2a2a2a" stroke-width="2.3"/><rect x="111.6" y="14.6" width="1.8" height="2" fill="#2a2a2a"/><rect x="114.6" y="14.6" width="1.8" height="2" fill="#2a2a2a"/><circle cx="158.9" cy="15.5" r="10.8" fill="url(#cg2)"/><path d="M158.9 15.5c-2-3.6-6.6-3.6-6.6 0s4.600 3.600 6.600 0s6.600-3.600 6.600 0s-4.600 3.600-6.600 0z" fill="none" stroke="#2a2a2a" stroke-width="1.7"/><circle cx="203.7" cy="15.5" r="10.8" fill="url(#cg3)"/><path d="M198.7 14.9a5.2 5.2 0 0 1 8.8-2.600M208.7 16.1a5.2 5.2 0 0 1-8.8 2.600" fill="none" stroke="#161616" stroke-width="2.2"/><path d="M205.9 13.9l3.600-0.400l-0.400-3.600zM201.5 17.1l-3.600 0.400l0.400 3.600z" fill="#161616"/><circle cx="248.5" cy="15.5" r="10.8" fill="url(#cg3)"/><circle cx="30.7" cy="46.2" r="10.3" fill="url(#cg2)"/><path d="M34.9 41.400l-3.6 4.600l3.6 4.600" fill="none" stroke="#333" stroke-width="1.7"/><path d="M30.1 41.400l-3.6 4.600l3.6 4.600" fill="none" stroke="#333" stroke-width="1.7"/><circle cx="244.9" cy="46.2" r="10.3" fill="url(#cg2)"/><path d="M240.7 41.400l3.6 4.600l-3.6 4.600" fill="none" stroke="#333" stroke-width="1.7"/><path d="M245.5 41.400l3.6 4.600l-3.6 4.600" fill="none" stroke="#333" stroke-width="1.7"/></svg>
<span class="t" style="left:1400.00px;top:962.00px;font-size:21.80px;transform:scaleX(0.9594);color:#333;font-weight:700;z-index:4;">Back</span>
<span class="t" style="left:1506.50px;top:962.00px;font-size:21.80px;transform:scaleX(1.1005);color:#333;font-weight:700;z-index:4;">Next</span>
</body></html>
